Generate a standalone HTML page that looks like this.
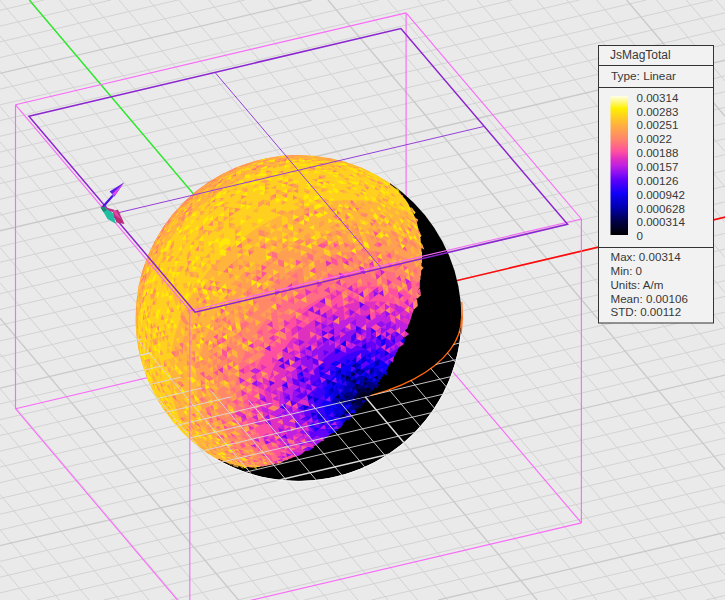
<!DOCTYPE html><html><head><meta charset="utf-8"><style>html,body{margin:0;padding:0;background:#eaeaea;overflow:hidden}svg{display:block}text{font-family:"Liberation Sans",sans-serif}</style></head><body>
<svg width="725" height="600" viewBox="0 0 725 600">
<rect width="725" height="600" fill="#eaeaea"/>
<path d="M705.9 600.0L725.0 595.5M639.0 600.0L725.0 579.8M572.1 600.0L725.0 564.0M505.2 600.0L725.0 548.3M371.4 600.0L725.0 516.8M0.0 600.4L-0.3 600.0M304.5 600.0L725.0 501.0M29.5 600.0L0.0 565.1M237.6 600.0L725.0 485.3M59.4 600.0L0.0 529.8M170.7 600.0L725.0 469.5M89.2 600.0L0.0 494.5M103.8 600.0L725.0 453.8M119.1 600.0L0.0 459.2M36.9 600.0L725.0 438.1M149.0 600.0L0.0 424.0M0.0 592.9L725.0 422.3M178.8 600.0L0.0 388.7M-0.0 577.2L725.0 406.6M208.7 600.0L0.0 353.4M0.0 561.4L725.0 390.8M268.4 600.0L0.0 282.8M0.0 530.0L725.0 359.3M298.2 600.0L0.0 247.5M0.0 514.2L725.0 343.6M328.1 600.0L0.0 212.2M0.0 498.5L725.0 327.8M358.0 600.0L0.0 177.0M0.0 482.7L725.0 312.1M387.8 600.0L0.0 141.7M0.0 467.0L725.0 296.4M417.7 600.0L0.0 106.4M0.0 451.2L725.0 280.6M447.5 600.0L0.0 71.1M0.0 435.5L725.0 264.9M477.4 600.0L0.0 35.8M0.0 419.7L725.0 249.1M507.3 600.0L-0.4 0.0M0.0 404.0L725.0 233.4M567.0 600.0L59.3 0.0M0.0 372.5L725.0 201.9M596.8 600.0L89.1 0.0M0.0 356.8L725.0 186.1M626.7 600.0L119.0 0.0M0.0 341.0L725.0 170.4M656.5 600.0L148.9 0.0M-0.0 325.3L725.0 154.6M686.4 600.0L178.7 0.0M0.0 309.5L725.0 138.9M716.3 600.0L208.6 0.0M-0.0 293.8L725.0 123.2M725.0 575.0L238.4 0.0M0.0 278.0L725.0 107.4M725.0 539.7L268.3 0.0M-0.0 262.3L725.0 91.7M725.0 504.5L298.1 0.0M0.0 246.5L725.0 75.9M725.0 433.9L357.9 0.0M0.0 215.1L725.0 44.4M725.0 398.6L387.7 0.0M0.0 199.3L725.0 28.7M725.0 363.3L417.6 0.0M0.0 183.6L725.0 12.9M725.0 328.0L447.4 0.0M0.0 167.8L713.1 0.0M725.0 292.7L477.3 0.0M0.0 152.1L646.2 0.0M725.0 257.4L507.2 0.0M-0.0 136.3L579.3 0.0M725.0 222.2L537.0 0.0M0.0 120.6L512.4 0.0M725.0 186.9L566.9 0.0M0.0 104.8L445.5 0.0M725.0 151.6L596.7 0.0M0.0 89.1L378.6 0.0M725.0 81.0L656.5 0.0M0.0 57.6L244.8 0.0M725.0 45.7L686.3 0.0M0.0 41.9L177.9 -0.0M725.0 10.4L716.2 0.0M0.0 26.1L111.0 0.0M0.0 10.4L44.1 0.0" stroke="#d3d3d3" stroke-width="1" fill="none"/><path d="M438.3 600.0L725.0 532.5M238.5 600.0L0.0 318.1M0.0 545.7L725.0 375.1M537.1 600.0L29.4 0.0M0.0 388.2L725.0 217.6M725.0 469.2L328.0 0.0M0.0 230.8L725.0 60.2M725.0 116.3L626.6 0.0M0.0 73.4L311.7 0.0" stroke="#cacaca" stroke-width="1.35" fill="none"/>
<path d="M15.5 408.7L406.1 316.8" stroke="#f86cf8" stroke-width="1.15" fill="none"/><path d="M406.1 316.8L581.4 522.9" stroke="#f86cf8" stroke-width="1.15" fill="none"/><path d="M406.1 12.9L406.1 316.8" stroke="#f86cf8" stroke-width="1.15" fill="none"/>
<path d="M29.3 0.0L298.5 318.0" stroke="#20ee20" stroke-width="1.3" fill="none"/>
<path d="M298.5 318.0L1298.5 81.6" stroke="#ff0a0a" stroke-width="1.7" fill="none"/>
<clipPath id="sph"><circle cx="298.5" cy="318.0" r="163.0"/></clipPath><g clip-path="url(#sph)">
<path d="M377.5 172.5 370.5 169.0 368.5 169.5 362.0 166.5 361.0 166.5 353.0 163.5 351.5 163.5 351.0 163.0 349.5 163.0 349.0 162.5 347.5 162.5 345.0 161.5 340.5 161.0 340.0 160.5 333.5 160.0 333.0 159.5 328.5 159.5 328.0 159.0 304.0 159.0 303.5 159.5 294.5 160.0 294.0 160.5 288.5 161.0 288.0 161.5 286.0 161.5 285.5 162.0 283.5 162.0 283.0 162.5 281.0 162.5 280.5 163.0 273.0 164.5 271.0 165.5 269.5 165.5 269.0 166.0 259.0 169.0 257.5 170.0 256.5 170.0 255.0 171.0 254.0 171.0 252.5 172.0 249.0 173.0 244.5 175.5 243.5 175.5 236.5 179.0 235.5 180.0 231.0 182.0 230.0 183.0 223.5 186.5 214.5 192.5 213.0 194.0 207.0 198.0 202.5 202.0 202.0 202.0 194.5 209.0 194.0 209.0 178.0 225.5 178.0 226.0 175.5 228.5 175.5 229.0 167.0 239.5 161.0 248.5 157.5 255.0 156.5 256.0 149.0 271.0 149.0 272.0 147.5 274.5 147.5 275.5 145.5 279.5 145.5 280.5 142.0 290.0 142.0 291.5 141.0 293.5 141.0 295.0 140.5 295.5 140.5 297.0 140.0 297.5 140.0 299.0 139.0 301.5 139.0 303.5 138.5 304.0 138.0 309.5 137.5 310.0 137.0 317.5 136.5 318.0 136.0 333.0 136.5 333.5 136.5 342.0 137.0 342.5 137.0 346.5 137.5 347.0 137.5 350.0 138.0 350.5 138.5 355.5 139.5 358.0 139.0 359.0 138.0 359.0 139.0 361.0 139.5 364.5 140.0 365.0 143.0 375.0 146.0 381.5 146.0 382.5 153.0 397.0 154.0 398.0 158.0 405.5 167.0 418.5 173.5 426.0 173.5 426.5 179.0 432.0 179.0 432.5 189.5 442.5 190.0 442.5 192.5 445.0 193.0 445.0 201.5 452.0 210.5 458.0 214.5 460.0 215.5 461.0 218.5 462.5 219.0 461.5 219.0 458.5 217.5 458.0 208.5 451.5 196.0 439.5 196.0 439.0 190.5 432.5 185.0 424.0 180.0 414.0 180.0 413.0 178.0 409.0 178.0 408.0 176.0 403.0 175.5 399.5 174.5 397.5 174.5 395.5 174.0 395.0 174.0 393.0 173.5 392.5 173.5 390.5 173.0 390.0 172.5 383.0 172.0 382.5 172.0 376.5 171.5 376.0 171.5 367.5 172.0 367.0 172.5 356.0 173.0 355.5 173.0 352.5 173.5 352.0 173.5 349.5 174.0 349.0 174.5 344.5 175.0 344.0 175.5 340.0 176.5 338.0 177.0 334.5 177.5 334.0 181.0 322.5 182.0 321.0 183.0 317.5 184.5 315.0 184.5 314.0 191.5 300.0 192.5 299.0 193.5 296.5 194.5 295.5 195.0 294.0 197.0 291.5 197.5 290.0 200.5 285.5 209.5 273.5 215.0 267.5 215.0 267.0 220.0 262.0 220.0 261.5 227.5 254.0 228.0 254.0 236.5 246.0 237.0 246.0 242.0 241.5 248.0 237.0 250.0 236.0 251.5 234.5 259.0 229.5 263.0 227.5 264.0 226.5 280.0 218.0 281.0 218.0 284.5 216.0 285.5 216.0 288.0 214.5 289.0 214.5 293.0 212.5 297.0 211.5 298.5 210.5 299.5 210.5 303.0 209.0 304.5 209.0 306.5 208.0 308.0 208.0 310.0 207.0 317.5 205.5 318.0 205.0 320.0 205.0 320.5 204.5 322.5 204.5 323.0 204.0 325.5 204.0 326.0 203.5 328.5 203.5 329.0 203.0 337.0 202.5 337.5 202.0 344.0 202.0 344.5 201.5 355.5 201.5 356.0 202.0 362.5 202.0 363.0 202.5 366.5 202.5 367.0 203.0 370.0 203.0 370.5 203.5 373.0 203.5 373.5 204.0 378.0 204.5 378.5 205.0 384.0 206.0 384.5 206.5 394.5 209.5 397.0 211.0 398.0 211.0 401.5 213.0 402.5 213.0 404.5 214.0 405.5 215.0 411.5 218.0 415.5 221.0 417.5 221.0 417.5 218.0 415.0 212.5 415.0 211.5 410.0 202.0 405.0 195.0 398.0 187.5 397.5 187.5 392.5 183.0 393.0 182.5 392.0 181.5 386.0 177.5 382.0 175.5 381.0 174.5 378.5 173.5Z" fill="#ffd020"/>
<path d="M418.0 219.5 413.5 216.5 412.0 216.0 411.0 215.0 407.5 213.5 406.5 212.5 404.5 211.5 403.5 211.5 400.0 209.5 399.0 209.5 396.5 208.0 395.5 208.0 386.0 204.5 384.5 204.5 384.0 204.0 382.5 204.0 380.0 203.0 378.0 203.0 377.5 202.5 375.5 202.5 375.0 202.0 372.5 202.0 372.0 201.5 365.0 201.0 364.5 200.5 358.0 200.5 357.5 200.0 342.5 200.0 342.0 200.5 335.5 200.5 335.0 201.0 327.0 201.5 326.5 202.0 324.0 202.0 323.5 202.5 321.0 202.5 320.5 203.0 316.0 203.5 315.5 204.0 308.0 205.5 306.0 206.5 304.5 206.5 302.5 207.5 301.0 207.5 300.5 208.0 296.5 209.0 295.0 210.0 291.0 211.0 289.5 212.0 286.0 213.0 283.5 214.5 282.5 214.5 279.0 216.5 278.0 216.5 262.0 225.0 261.0 226.0 257.0 228.0 249.5 233.0 248.0 234.5 246.0 235.5 240.0 240.0 231.5 247.5 231.0 247.5 218.5 259.5 218.5 260.0 213.5 265.0 213.5 265.5 208.0 271.5 199.0 283.5 196.0 288.0 195.5 289.5 193.5 292.0 193.0 293.5 192.0 294.5 191.0 297.0 190.0 298.0 183.0 312.0 183.0 313.0 181.5 315.5 181.5 316.5 179.5 320.5 179.5 321.5 175.5 332.5 175.0 336.0 174.0 338.0 174.0 340.0 173.0 342.5 173.0 344.5 172.5 345.0 172.5 347.0 172.0 347.5 172.0 350.0 171.5 350.5 171.0 358.0 170.5 358.5 170.5 365.0 170.0 365.5 170.0 378.0 170.5 378.5 170.5 384.5 171.0 385.0 171.0 388.5 171.5 389.0 171.5 392.0 172.0 392.5 173.0 399.5 174.0 401.5 174.5 405.0 175.0 405.5 176.5 411.0 177.5 412.5 178.5 416.0 183.5 426.0 189.0 434.5 194.5 441.0 194.5 441.5 203.5 450.5 215.5 459.5 224.0 464.0 225.0 464.0 226.5 465.0 227.5 465.0 229.5 466.0 231.0 466.0 233.0 467.0 235.0 467.0 235.5 467.5 237.5 467.5 238.0 468.0 241.0 468.0 241.5 468.5 244.5 468.5 244.5 466.5 242.0 465.5 234.5 460.5 229.5 456.0 229.0 456.0 220.5 447.5 220.5 447.0 216.0 442.0 210.5 433.5 205.5 423.5 205.5 422.5 204.5 421.0 204.5 420.0 201.5 412.0 201.5 410.5 200.5 408.0 200.5 406.0 200.0 405.5 200.0 403.5 199.5 403.0 199.5 400.5 199.0 400.0 199.0 396.5 198.5 396.0 198.5 389.5 198.0 389.0 198.5 375.0 199.0 374.5 199.0 371.0 199.5 370.5 200.0 364.5 200.5 364.0 200.5 362.0 201.5 359.5 201.5 357.5 202.0 357.0 202.0 355.5 204.0 350.0 204.0 348.5 204.5 348.0 205.0 345.5 206.0 344.0 208.0 337.5 209.5 335.0 209.5 334.0 212.0 329.5 212.0 328.5 214.0 324.5 215.0 323.5 217.0 319.0 218.0 318.0 220.0 314.0 230.0 299.5 237.0 291.5 237.0 291.0 241.5 286.5 241.5 286.0 249.5 278.0 250.0 278.0 255.0 273.0 255.5 273.0 261.0 268.0 269.0 262.0 271.0 261.0 272.5 259.5 277.0 257.0 279.5 255.0 281.0 254.5 282.0 253.5 283.5 253.0 284.5 252.0 289.0 250.0 290.0 249.0 297.0 245.5 298.0 245.5 301.5 243.5 302.5 243.5 307.5 241.0 310.0 240.5 311.5 239.5 312.5 239.5 319.0 237.0 320.5 237.0 322.5 236.0 324.0 236.0 326.0 235.0 330.0 234.5 332.5 233.5 334.5 233.5 335.0 233.0 337.0 233.0 337.5 232.5 340.0 232.5 340.5 232.0 343.5 232.0 344.0 231.5 354.0 231.0 354.5 230.5 367.0 230.5 367.5 231.0 377.0 231.5 377.5 232.0 383.0 232.5 383.5 233.0 385.5 233.0 386.0 233.5 391.5 234.5 392.0 235.0 400.5 237.5 413.5 243.5 421.0 248.5 423.0 248.5 423.0 243.5 422.5 243.0 422.5 239.5 422.0 239.0 421.5 233.0 421.0 232.5 421.0 230.5 420.5 230.0 420.5 228.5 420.0 228.0 420.0 226.5 419.5 226.0 419.5 224.5 419.0 224.0 419.0 222.5 418.5 222.0ZM371.5 169.5 363.0 165.5 362.0 165.5 360.5 164.5 357.0 163.5 355.5 162.5 354.5 162.5 345.0 159.0 341.5 158.5 341.0 158.0 336.0 157.0 335.5 156.5 328.5 155.5 328.0 155.0 325.5 155.0 325.0 154.5 322.5 154.5 322.0 154.0 319.0 154.0 318.5 153.5 314.0 153.5 313.5 153.0 307.5 153.0 307.0 152.5 302.0 152.5 302.0 153.5 301.5 154.0 290.5 154.0 290.0 154.5 284.5 154.5 284.0 155.0 280.5 155.0 280.0 155.5 274.0 156.0 273.5 156.5 271.5 156.5 271.0 157.0 269.0 157.0 268.5 157.5 266.5 157.5 266.0 158.0 260.5 159.0 258.5 160.0 257.0 160.0 256.5 160.5 246.5 163.5 245.0 164.5 244.0 164.5 242.5 165.5 239.0 166.5 224.5 173.5 223.5 174.5 217.5 177.5 215.0 179.5 213.5 180.0 206.0 185.0 198.0 191.0 188.0 200.0 187.5 200.0 177.5 210.0 177.5 210.5 170.5 218.0 170.5 218.5 168.5 220.5 162.5 228.5 157.5 236.0 155.5 240.0 154.5 241.0 153.0 244.5 152.0 245.5 147.5 254.5 147.5 255.5 146.0 258.0 146.0 259.0 144.5 261.5 144.0 264.0 143.0 265.5 143.0 266.5 140.5 273.0 140.5 274.5 139.5 276.5 139.5 278.0 139.0 278.5 139.0 280.0 138.5 280.5 138.5 282.0 137.5 284.5 137.0 289.0 136.5 289.5 135.5 289.5 135.5 290.5 135.0 291.0 134.5 297.0 134.0 297.5 134.0 302.0 133.5 302.5 133.5 308.5 133.0 309.0 133.0 326.5 133.5 327.0 134.0 338.0 134.5 338.5 134.5 341.5 135.0 342.0 135.5 347.5 136.0 348.0 136.0 350.0 136.5 350.5 136.5 352.5 137.0 353.0 137.0 355.0 137.5 355.5 138.5 360.5 139.0 361.0 141.5 360.5 141.5 358.0 141.0 357.5 141.0 356.0 140.0 353.5 140.0 351.5 139.5 351.0 139.0 345.0 138.5 344.5 138.5 340.5 138.0 340.0 138.0 331.5 137.5 331.0 137.5 329.5 138.0 329.0 138.0 320.0 138.5 319.5 138.5 315.5 139.0 315.0 139.0 312.0 139.5 311.5 140.0 306.0 140.5 305.5 140.5 303.5 141.0 303.0 142.5 295.5 143.5 293.5 143.5 292.0 144.0 291.5 147.0 281.5 149.0 277.5 149.0 276.5 158.0 258.0 159.0 257.0 162.5 250.5 173.0 235.5 179.5 228.0 179.5 227.5 183.5 223.5 183.5 223.0 196.0 210.5 196.5 210.5 204.0 203.5 204.5 203.5 209.0 199.5 215.0 195.5 216.5 194.0 225.5 188.0 227.0 187.5 233.0 183.5 237.5 181.5 238.5 180.5 245.5 177.0 246.5 177.0 251.0 174.5 252.0 174.5 253.5 173.5 254.5 173.5 261.0 170.5 262.0 170.5 271.5 167.0 273.0 167.0 275.0 166.0 276.5 166.0 277.0 165.5 278.5 165.5 279.0 165.0 280.5 165.0 283.0 164.0 285.0 164.0 285.5 163.5 287.5 163.5 288.0 163.0 290.0 163.0 290.5 162.5 293.0 162.5 293.5 162.0 296.0 162.0 296.5 161.5 305.5 161.0 306.0 160.5 326.0 160.5 326.5 161.0 331.0 161.0 331.5 161.5 338.0 162.0 338.5 162.5 340.5 162.5 341.0 163.0 343.0 163.0 343.5 163.5 351.0 165.0 351.5 165.5 360.0 168.0 368.5 172.0 371.0 172.0Z" fill="#ffb53b"/>
<path d="M422.0 246.0 416.5 243.0 415.5 242.0 402.5 236.0 401.5 236.0 393.5 233.0 392.0 233.0 391.5 232.5 390.0 232.5 387.5 231.5 385.5 231.5 385.0 231.0 379.5 230.5 379.0 230.0 369.5 229.5 369.0 229.0 352.5 229.0 352.0 229.5 346.0 229.5 345.5 230.0 342.0 230.0 341.5 230.5 338.5 230.5 338.0 231.0 335.5 231.0 335.0 231.5 330.5 232.0 330.0 232.5 326.0 233.0 322.0 234.5 320.5 234.5 318.5 235.5 317.0 235.5 316.5 236.0 309.5 238.0 308.0 239.0 305.5 239.5 300.5 242.0 299.5 242.0 296.0 244.0 295.0 244.0 288.0 247.5 287.0 248.5 282.5 250.5 281.5 251.5 280.0 252.0 279.0 253.0 277.5 253.5 275.0 255.5 270.5 258.0 269.0 259.5 267.0 260.5 259.0 266.5 256.5 269.0 253.0 271.5 248.0 276.5 247.5 276.5 240.0 284.0 240.0 284.5 232.5 292.5 232.5 293.0 225.5 301.5 218.5 312.0 210.5 326.5 210.5 327.5 206.5 335.5 206.5 336.5 205.5 338.0 204.5 342.0 203.5 343.5 203.5 344.5 202.5 346.5 202.5 348.0 201.5 350.0 201.5 351.5 200.5 353.5 200.0 357.5 199.0 360.0 198.5 365.0 198.0 365.5 198.0 368.5 197.5 369.0 197.5 372.5 197.0 373.0 197.0 379.5 196.5 380.0 196.5 391.0 197.0 391.5 197.0 398.0 197.5 398.5 197.5 402.0 198.0 402.5 198.0 405.0 198.5 405.5 199.0 410.0 199.5 410.5 200.0 414.0 200.5 414.5 203.0 423.0 206.5 430.0 206.5 431.0 207.5 432.0 209.0 435.5 214.5 444.0 219.0 449.0 219.0 449.5 227.0 457.5 227.5 457.5 232.5 462.0 240.0 467.0 243.0 468.5 247.0 468.5 247.5 469.0 261.0 468.5 261.0 466.5 260.5 466.0 258.0 465.0 249.5 459.0 239.5 449.5 239.5 449.0 235.0 444.0 231.0 438.0 226.0 428.5 226.0 427.5 225.0 426.0 225.0 425.0 224.0 423.5 224.0 422.5 222.5 419.0 222.5 417.5 221.0 413.5 221.0 411.5 220.5 411.0 220.5 409.0 220.0 408.5 220.0 406.0 219.5 405.5 219.5 402.0 219.0 401.5 219.0 384.5 219.5 384.0 220.0 376.5 220.5 376.0 220.5 373.5 221.0 373.0 221.0 371.0 221.5 370.5 223.0 363.0 223.5 362.5 226.5 352.5 227.5 351.0 228.5 347.5 230.5 344.0 230.5 343.0 238.0 329.0 245.0 318.5 250.0 312.5 250.0 312.0 252.5 309.5 252.5 309.0 255.5 306.0 255.5 305.5 272.0 289.5 272.5 289.5 275.0 287.0 275.5 287.0 281.5 282.0 283.5 281.0 285.0 279.5 291.0 275.5 298.5 271.5 299.5 270.5 314.0 263.5 315.0 263.5 316.5 262.5 317.5 262.5 319.0 261.5 321.5 261.0 323.0 260.0 324.0 260.0 327.5 258.5 329.0 258.5 331.0 257.5 332.5 257.5 333.0 257.0 338.0 256.0 338.5 255.5 340.5 255.5 341.0 255.0 343.0 255.0 343.5 254.5 345.5 254.5 346.0 254.0 352.5 253.5 353.0 253.0 358.0 253.0 358.5 252.5 374.0 252.5 374.5 253.0 382.5 253.5 383.0 254.0 385.0 254.0 385.5 254.5 387.5 254.5 388.0 255.0 390.0 255.0 390.5 255.5 394.0 256.0 394.5 256.5 403.0 259.0 414.5 264.5 421.0 269.0 423.0 269.0 423.0 265.0 423.5 264.5 423.5 251.0 423.0 250.5 423.0 247.0ZM304.0 152.5 289.5 152.5 289.0 153.0 283.0 153.0 282.5 153.5 274.5 154.0 274.0 154.5 268.5 155.0 268.0 155.5 266.0 155.5 265.5 156.0 263.5 156.0 263.0 156.5 261.0 156.5 260.5 157.0 257.0 157.5 255.0 158.5 251.5 159.0 251.0 159.5 241.0 162.5 239.5 163.5 238.5 163.5 237.0 164.5 233.5 165.5 233.5 166.5 232.5 167.5 229.5 169.0 228.5 169.0 213.5 177.0 211.0 179.0 209.5 179.5 205.0 182.5 203.5 184.0 197.5 188.0 193.0 192.0 192.5 192.0 175.0 209.0 175.0 209.5 168.0 217.5 164.0 223.5 161.0 225.5 158.0 230.0 157.5 231.5 156.5 232.5 156.0 234.0 155.0 235.0 147.5 249.5 147.5 250.5 146.0 253.0 146.0 254.0 143.0 260.5 143.0 261.5 139.5 271.0 139.0 274.5 138.0 276.5 138.0 278.0 137.0 280.5 137.0 282.5 136.5 283.0 136.5 285.0 136.0 285.5 136.0 287.5 135.5 288.0 135.5 290.5 135.0 291.0 136.0 291.5 138.5 291.5 138.5 289.0 139.0 288.5 139.0 286.5 139.5 286.0 141.0 278.5 141.5 278.0 142.0 275.0 142.5 274.5 144.5 267.5 145.5 266.0 146.0 263.5 153.5 247.5 154.5 246.5 156.0 243.0 157.0 242.0 159.0 238.0 170.0 222.5 174.5 217.5 174.5 217.0 179.0 212.5 179.0 212.0 189.5 201.5 190.0 201.5 200.0 192.5 215.5 181.5 217.0 181.0 223.0 177.0 225.5 176.0 226.5 175.0 236.5 170.0 237.5 170.0 241.0 168.0 242.0 168.0 248.5 165.0 249.5 165.0 259.0 161.5 260.5 161.5 262.5 160.5 264.0 160.5 264.5 160.0 266.0 160.0 268.5 159.0 270.5 159.0 271.0 158.5 273.0 158.5 273.5 158.0 275.5 158.0 276.0 157.5 282.0 157.0 282.5 156.5 286.0 156.5 286.5 156.0 292.0 156.0 292.5 155.5 303.5 155.5Z" fill="#ff9f51"/>
<path d="M422.0 266.5 417.5 264.0 416.5 263.0 405.0 257.5 404.0 257.5 396.0 254.5 394.5 254.5 392.0 253.5 390.0 253.5 389.5 253.0 387.5 253.0 387.0 252.5 385.0 252.5 384.5 252.0 376.5 251.5 376.0 251.0 356.5 251.0 356.0 251.5 351.0 251.5 350.5 252.0 347.5 252.0 347.0 252.5 344.0 252.5 343.5 253.0 336.5 254.0 336.0 254.5 332.5 255.0 330.5 256.0 329.0 256.0 327.0 257.0 325.5 257.0 325.0 257.5 321.0 258.5 319.5 259.5 317.0 260.0 315.5 261.0 312.0 262.0 309.5 263.5 308.5 263.5 294.0 271.0 293.0 272.0 291.5 272.5 283.0 278.0 273.0 285.5 266.5 291.5 266.0 291.5 254.0 303.5 254.0 304.0 246.5 312.5 241.5 320.0 240.0 321.5 239.5 323.0 235.0 329.5 229.0 341.0 229.0 342.0 227.0 345.5 227.0 346.5 225.0 350.5 225.0 351.5 221.5 361.0 221.5 362.5 221.0 363.0 221.0 364.5 220.5 365.0 220.5 366.5 219.5 369.0 219.5 371.0 219.0 371.5 218.5 377.5 218.0 378.0 218.0 382.0 217.5 382.5 217.5 403.5 218.0 404.0 218.0 407.5 218.5 408.0 218.5 410.5 219.0 411.0 219.5 415.5 220.0 416.0 220.0 417.5 221.0 419.5 221.0 421.0 221.5 421.5 222.5 425.5 228.0 437.5 233.5 446.0 238.0 451.0 238.0 451.5 244.5 458.0 245.0 458.0 251.5 463.5 256.0 466.5 258.5 467.5 259.5 468.5 265.5 468.0 266.0 467.5 268.5 467.5 269.0 467.0 271.0 467.0 273.5 466.0 275.5 466.0 275.5 464.0 274.0 463.5 273.0 462.5 271.5 462.0 267.0 459.0 262.0 454.5 261.5 454.5 255.0 448.0 255.0 447.5 251.0 443.0 248.0 438.5 247.5 437.0 246.5 436.0 243.0 429.0 243.0 428.0 242.0 426.5 242.0 425.5 239.5 419.0 239.5 417.5 238.5 415.0 238.5 413.0 238.0 412.5 238.0 410.0 237.5 409.5 237.5 406.5 237.0 406.0 237.0 398.5 236.5 398.0 236.5 397.0 237.0 396.5 237.0 389.0 237.5 388.5 237.5 385.0 238.0 384.5 238.0 382.0 238.5 381.5 238.5 379.0 239.5 376.5 239.5 374.5 240.0 374.0 240.0 372.5 241.0 370.5 241.0 369.0 241.5 368.5 243.0 363.0 244.0 361.5 244.0 360.5 245.0 359.0 246.0 355.5 252.0 343.5 253.0 342.5 253.5 341.0 259.0 332.5 265.5 324.5 265.5 324.0 272.5 316.5 272.5 316.0 283.5 305.5 284.0 305.5 291.5 299.0 307.5 288.5 312.0 286.5 313.0 285.5 316.0 284.0 317.0 284.0 321.5 281.5 322.5 281.5 329.0 278.5 330.0 278.5 335.0 276.5 336.5 276.5 338.5 275.5 340.0 275.5 342.0 274.5 346.0 274.0 346.5 273.5 348.5 273.5 349.0 273.0 351.0 273.0 351.5 272.5 354.5 272.5 355.0 272.0 358.5 272.0 359.0 271.5 365.0 271.5 365.5 271.0 373.0 271.0 373.5 271.5 379.5 271.5 380.0 272.0 386.0 272.5 386.5 273.0 391.0 273.5 391.5 274.0 393.0 274.0 395.0 275.0 396.5 275.0 397.0 275.5 401.0 276.5 402.5 277.5 403.5 277.5 407.0 279.5 408.0 279.5 410.0 280.5 411.0 281.5 416.0 284.0 418.5 286.0 421.0 286.0 421.0 285.0 421.5 284.5 421.5 282.0 422.0 281.5 422.0 278.0 422.5 277.5 422.5 273.0 423.0 272.5 423.0 267.5ZM235.5 165.5 235.0 165.0 231.0 167.0 230.0 167.0 215.5 174.5 214.5 175.5 210.5 177.5 201.5 183.5 193.0 190.5 192.5 190.5 184.0 198.5 183.5 198.5 173.5 209.0 173.5 209.5 171.0 212.0 171.0 212.5 164.0 221.0 161.0 225.5 161.0 226.5 162.0 227.0 164.5 227.0 166.5 223.5 173.5 215.0 173.5 214.5 176.5 211.5 176.5 211.0 194.5 193.5 195.0 193.5 203.5 186.5 215.5 178.5 221.5 175.5 222.5 174.5 235.5 168.5Z" fill="#ff8967"/>
<path d="M421.0 284.5 416.5 282.0 415.5 281.0 413.0 280.0 412.0 279.0 410.0 278.0 409.0 278.0 405.5 276.0 404.5 276.0 403.0 275.0 402.0 275.0 398.5 273.5 397.0 273.5 393.0 272.0 388.5 271.5 388.0 271.0 382.0 270.5 381.5 270.0 375.5 270.0 375.0 269.5 363.5 269.5 363.0 270.0 357.0 270.0 356.5 270.5 349.5 271.0 349.0 271.5 344.5 272.0 342.0 273.0 340.0 273.0 338.0 274.0 336.5 274.0 334.5 275.0 333.0 275.0 332.5 275.5 327.0 277.0 325.5 278.0 324.5 278.0 323.0 279.0 319.5 280.0 315.0 282.5 314.0 282.5 311.0 284.0 310.0 285.0 305.5 287.0 289.5 297.5 282.0 304.0 281.5 304.0 271.0 314.0 271.0 314.5 264.0 322.0 264.0 322.5 257.5 330.5 253.5 336.5 251.5 340.5 250.5 341.5 244.5 353.5 244.5 354.5 241.5 361.0 241.5 362.0 239.5 367.0 239.5 368.5 238.5 370.5 238.0 374.5 237.0 377.0 236.5 382.5 236.0 383.0 236.0 386.5 235.5 387.0 235.5 394.5 235.0 395.0 235.5 408.0 236.0 408.5 236.0 411.5 236.5 412.0 237.0 417.0 237.5 417.5 238.0 421.0 238.5 421.5 240.5 428.5 245.0 438.0 246.0 439.0 246.5 440.5 249.5 445.0 253.5 449.5 253.5 450.0 259.5 456.0 260.0 456.0 265.0 460.5 273.0 465.5 277.0 465.5 277.5 465.0 279.0 465.0 279.5 464.5 288.0 462.0 288.0 460.0 285.5 459.0 279.5 455.0 274.0 450.0 273.5 450.0 267.5 443.5 263.5 438.0 258.0 427.5 257.5 425.0 256.5 423.5 256.0 420.5 254.5 416.5 254.0 411.5 253.5 411.0 253.5 407.5 253.0 407.0 253.0 394.0 253.5 393.5 253.5 389.5 254.0 389.0 254.0 386.5 254.5 386.0 254.5 384.0 255.0 383.5 255.0 381.5 255.5 381.0 256.0 377.5 256.5 377.0 256.5 376.0 257.5 374.0 257.5 372.5 258.5 371.0 259.5 367.0 263.5 359.0 263.5 358.0 264.5 357.0 268.5 349.0 273.5 341.5 278.5 335.5 278.5 335.0 281.5 332.0 281.5 331.5 294.0 319.0 294.5 319.0 297.5 316.0 298.0 316.0 304.0 311.0 311.5 306.0 315.5 304.0 316.5 303.0 333.5 295.0 334.5 295.0 344.0 291.5 345.5 291.5 346.0 291.0 347.5 291.0 350.0 290.0 352.0 290.0 352.5 289.5 358.0 289.0 358.5 288.5 362.0 288.5 362.5 288.0 379.5 288.0 380.0 288.5 383.5 288.5 384.0 289.0 389.0 289.5 389.5 290.0 393.0 290.5 393.5 291.0 400.5 293.0 410.0 297.5 416.0 301.5 418.0 301.5 418.5 298.0 419.5 295.5 419.5 293.5 420.0 293.0 420.0 291.0 420.5 290.5Z" fill="#ff6e82"/>
<path d="M413.0 297.0 412.0 296.0 402.5 291.5 401.5 291.5 395.0 289.0 393.5 289.0 391.0 288.0 389.0 288.0 388.5 287.5 386.0 287.5 385.5 287.0 382.0 287.0 381.5 286.5 360.5 286.5 360.0 287.0 356.5 287.0 356.0 287.5 353.5 287.5 353.0 288.0 348.0 288.5 347.5 289.0 342.0 290.0 341.5 290.5 331.5 293.5 330.0 294.5 329.0 294.5 314.5 301.5 313.5 302.5 309.5 304.5 295.5 314.5 280.0 329.5 280.0 330.0 277.0 333.0 277.0 333.5 272.0 339.5 267.0 347.0 263.0 355.0 262.0 356.0 262.0 357.0 258.0 365.0 258.0 366.0 257.5 366.5 257.0 369.0 256.0 370.5 256.0 372.0 254.5 375.5 254.5 377.0 253.5 379.5 253.5 381.5 253.0 382.0 253.0 384.0 252.5 384.5 252.5 387.0 252.0 387.5 252.0 391.5 251.5 392.0 251.5 409.0 252.0 409.5 252.0 413.0 252.5 413.5 253.0 418.5 253.5 419.0 253.5 420.5 254.5 422.5 255.0 425.5 256.0 427.0 256.5 429.5 262.0 440.0 266.0 445.5 271.5 451.5 272.0 451.5 277.5 456.5 285.5 461.5 289.0 461.5 298.5 457.5 298.5 455.0 295.5 453.5 288.0 448.0 281.5 441.5 275.5 433.0 272.5 427.0 272.5 426.0 271.5 424.5 271.5 423.5 270.0 420.0 270.0 418.5 269.0 416.0 269.0 414.0 268.5 413.5 268.5 411.0 268.0 410.5 268.0 406.0 267.5 405.5 267.5 399.0 268.0 398.5 268.5 390.5 269.0 390.0 269.0 388.0 269.5 387.5 269.5 385.5 271.0 381.5 271.0 380.0 271.5 379.5 272.5 375.5 273.5 374.0 274.0 371.5 276.0 368.0 276.0 367.0 278.0 363.0 279.0 362.0 282.0 356.0 292.0 342.5 305.0 329.5 305.5 329.5 308.0 327.0 318.5 319.5 320.0 319.0 321.0 318.0 322.5 317.5 323.5 316.5 328.0 314.5 329.0 313.5 330.0 313.5 334.5 311.0 335.5 311.0 338.0 309.5 342.0 308.5 343.5 307.5 345.0 307.5 345.5 307.0 346.5 307.0 348.5 306.0 350.0 306.0 350.5 305.5 352.0 305.5 352.5 305.0 354.5 305.0 355.0 304.5 357.0 304.5 357.5 304.0 360.0 304.0 360.5 303.5 364.0 303.5 364.5 303.0 380.0 303.0 380.5 303.5 386.5 304.0 387.0 304.5 388.5 304.5 389.0 305.0 390.5 305.0 391.0 305.5 392.5 305.5 393.0 306.0 397.0 307.0 407.5 312.0 411.5 315.0 414.0 315.0 415.0 313.0 415.0 311.5 416.0 309.5 416.0 308.0 416.5 307.5 417.5 302.5 418.0 302.0 418.0 300.0Z" fill="#ff50a0"/>
<path d="M414.0 313.5 409.5 310.5 401.5 306.5 400.5 306.5 399.0 305.5 398.0 305.5 394.5 304.0 393.0 304.0 392.5 303.5 391.0 303.5 388.5 302.5 386.0 302.5 385.5 302.0 382.5 302.0 382.0 301.5 362.5 301.5 362.0 302.0 358.5 302.0 358.0 302.5 355.5 302.5 355.0 303.0 350.5 303.5 350.0 304.0 346.5 304.5 346.0 305.0 345.0 305.0 343.0 306.0 341.5 306.0 340.0 307.0 336.0 308.0 328.0 312.0 327.0 312.0 326.0 313.0 321.5 315.0 320.5 316.0 316.5 318.0 303.0 328.0 290.5 340.5 280.5 354.0 277.5 360.0 276.5 361.0 274.5 365.0 274.5 366.0 272.5 369.5 272.0 372.0 271.0 373.5 271.0 374.5 269.5 378.0 268.5 383.0 268.0 383.5 268.0 385.5 267.5 386.0 267.5 388.0 267.0 388.5 267.0 391.5 266.5 392.0 266.5 396.5 266.0 397.0 266.0 407.5 266.5 408.0 266.5 412.5 267.0 413.0 267.5 418.0 268.0 418.5 268.0 420.0 268.5 420.5 268.5 422.0 269.0 422.5 270.0 426.5 274.0 435.0 275.0 436.0 276.5 439.0 280.0 443.0 280.0 443.5 286.0 449.5 286.5 449.5 290.5 453.0 293.5 455.0 296.0 456.0 297.0 457.0 299.5 457.0 309.0 452.0 309.0 450.0 301.0 445.0 298.0 442.0 297.5 442.0 292.0 436.0 288.5 431.0 285.0 424.0 285.0 423.0 283.0 418.0 283.0 416.5 282.0 414.0 282.0 411.5 281.5 411.0 281.5 406.5 281.0 406.0 281.0 401.0 281.5 400.5 282.0 392.5 282.5 392.0 282.5 390.0 283.0 389.5 283.5 386.0 284.0 385.5 286.0 378.5 287.0 377.0 287.0 376.0 289.0 372.5 289.0 371.5 290.0 369.5 291.0 368.5 293.5 363.5 297.5 357.5 303.5 350.5 303.5 350.0 312.5 341.0 326.5 330.5 332.5 327.5 333.5 326.5 335.5 325.5 336.5 325.5 341.0 323.0 342.0 323.0 343.5 322.0 344.5 322.0 351.0 319.5 352.5 319.5 353.0 319.0 354.5 319.0 357.0 318.0 359.0 318.0 359.5 317.5 366.5 317.0 367.0 316.5 378.0 316.5 378.5 317.0 382.0 317.0 382.5 317.5 385.0 317.5 385.5 318.0 389.0 318.5 391.0 319.5 392.5 319.5 394.0 320.5 395.0 320.5 401.5 323.5 407.5 327.5 410.0 327.5 410.0 326.5 411.0 325.0 411.0 324.0 414.0 316.0Z" fill="#e030c0"/>
<path d="M399.5 320.0 398.5 320.0 394.5 318.0 393.0 318.0 392.5 317.5 387.5 316.5 387.0 316.0 380.5 315.5 380.0 315.0 365.0 315.0 364.5 315.5 360.5 315.5 360.0 316.0 355.0 316.5 354.5 317.0 349.0 318.0 348.5 318.5 341.5 320.5 334.5 324.0 333.5 324.0 330.5 326.0 327.0 327.5 326.0 328.5 324.5 329.0 320.0 332.0 314.0 337.0 313.5 337.0 302.0 348.0 302.0 348.5 296.0 355.5 292.0 361.5 289.5 366.5 288.5 367.5 287.5 369.5 287.5 370.5 285.5 374.0 285.5 375.0 284.5 376.5 284.5 377.5 282.0 384.0 281.5 387.5 281.0 388.0 280.5 393.5 280.0 394.0 280.0 398.5 279.5 399.0 279.5 408.0 280.0 408.5 280.0 413.0 280.5 413.5 280.5 416.0 281.0 416.5 281.5 420.0 282.0 420.5 283.5 426.0 287.0 433.0 289.0 436.0 295.5 443.5 296.0 443.5 299.0 446.5 307.0 451.5 310.0 451.5 311.0 450.5 312.5 450.0 315.0 448.0 318.0 446.5 318.0 444.0 316.5 443.5 310.5 439.5 303.0 432.0 300.5 428.5 298.0 424.0 298.0 423.0 296.5 420.5 296.5 419.5 295.5 417.5 295.5 416.0 294.5 413.5 294.5 411.5 294.0 411.0 294.0 407.0 293.5 406.5 294.0 397.0 294.5 396.5 295.0 391.5 295.5 391.0 295.5 389.5 296.5 387.5 297.0 384.5 302.5 372.5 308.0 364.0 312.0 359.5 312.0 359.0 322.0 349.0 322.5 349.0 327.0 345.0 334.5 340.0 338.0 338.5 339.0 337.5 341.0 336.5 342.0 336.5 348.0 333.5 349.0 333.5 352.5 332.0 354.0 332.0 356.0 331.0 360.0 330.5 360.5 330.0 363.0 330.0 363.5 329.5 366.5 329.5 367.0 329.0 377.5 329.0 378.0 329.5 381.0 329.5 381.5 330.0 386.0 330.5 386.5 331.0 392.0 332.5 399.0 336.0 403.0 339.0 405.0 339.0 406.5 336.5 406.5 335.5 409.5 329.0 409.5 326.0Z" fill="#c020e0"/>
<path d="M401.0 334.5 394.0 331.0 393.0 331.0 388.0 329.0 386.0 329.0 385.5 328.5 383.5 328.5 383.0 328.0 380.0 328.0 379.5 327.5 365.0 327.5 364.5 328.0 361.5 328.0 361.0 328.5 356.0 329.0 355.5 329.5 350.5 330.5 350.0 331.0 346.0 332.0 344.5 333.0 343.5 333.0 332.5 338.5 325.0 343.5 323.0 345.5 320.0 347.5 310.5 357.0 302.5 368.0 297.5 377.5 297.5 378.5 295.5 382.5 295.0 385.5 294.0 387.5 293.5 391.5 293.0 392.0 293.0 394.5 292.5 395.0 292.5 399.0 292.0 399.5 292.0 408.5 292.5 409.0 292.5 413.0 293.0 413.5 293.0 415.5 293.5 416.0 293.5 417.5 294.0 418.0 294.0 419.5 294.5 420.0 295.0 422.5 296.5 425.0 296.5 426.0 297.5 428.0 298.5 429.0 300.0 432.0 308.5 441.0 316.5 446.0 318.5 446.0 326.5 440.5 326.5 438.0 323.0 436.5 319.5 434.0 313.0 427.5 310.5 424.0 307.0 416.5 307.0 415.0 306.5 414.5 306.0 411.0 305.5 410.5 305.5 407.0 305.0 406.5 305.5 397.5 306.0 397.0 306.0 394.5 306.5 394.0 306.5 392.5 307.0 392.0 307.0 390.5 307.5 390.0 308.0 387.5 312.5 377.5 313.5 376.5 314.0 375.0 317.0 370.5 319.0 368.5 321.0 365.5 328.5 358.0 329.0 358.0 331.5 355.5 335.5 353.0 337.0 351.5 347.0 346.0 348.0 346.0 352.0 344.0 353.0 344.0 356.5 342.5 360.0 342.0 360.5 341.5 366.0 341.0 366.5 340.5 377.0 340.5 377.5 341.0 380.0 341.0 380.5 341.5 382.5 341.5 383.0 342.0 384.5 342.0 385.0 342.5 387.5 343.0 390.0 344.5 392.0 345.0 398.5 349.5 400.5 349.5 402.5 345.5 402.5 344.5 405.0 340.0 405.0 337.5Z" fill="#9010f0"/>
<path d="M393.0 343.0 392.0 343.0 389.5 341.5 388.5 341.5 386.5 340.5 382.5 340.0 382.0 339.5 379.5 339.5 379.0 339.0 364.5 339.0 364.0 339.5 358.5 340.0 358.0 340.5 354.5 341.0 354.0 341.5 350.0 342.5 348.5 343.5 347.5 343.5 346.0 344.5 345.0 344.5 335.0 350.0 333.5 351.5 329.5 354.0 327.0 356.5 326.5 356.5 319.5 363.5 312.5 373.0 308.5 380.5 308.5 381.5 307.5 383.0 307.5 384.0 306.5 385.5 306.5 386.5 305.5 388.5 305.5 390.0 304.5 392.5 304.5 395.0 304.0 395.5 304.0 399.0 303.5 399.5 303.5 408.5 304.0 409.0 304.0 412.5 304.5 413.0 304.5 415.0 305.5 417.0 305.5 418.5 310.0 427.5 317.5 435.5 321.0 438.0 325.0 440.0 327.0 440.0 334.0 434.5 334.0 432.0 330.5 430.5 327.0 428.0 323.0 424.0 319.5 419.0 316.5 411.5 316.0 405.5 315.5 405.0 316.0 398.0 316.5 397.5 316.5 395.5 317.0 395.0 317.0 393.5 317.5 393.0 319.0 387.5 322.5 380.5 329.5 371.0 337.5 363.5 346.5 357.5 350.5 355.5 351.5 355.5 354.0 354.0 355.0 354.0 357.0 353.0 358.5 353.0 360.5 352.0 362.5 352.0 363.0 351.5 365.5 351.5 366.0 351.0 376.0 351.0 376.5 351.5 379.0 351.5 379.5 352.0 381.0 352.0 381.5 352.5 384.0 353.0 390.0 356.0 393.0 358.5 396.0 358.5 400.0 350.5 400.0 347.5Z" fill="#6000f8"/>
<path d="M395.5 357.0 392.0 354.5 386.0 351.5 385.0 351.5 383.0 350.5 381.5 350.5 381.0 350.0 378.5 350.0 378.0 349.5 364.0 349.5 363.5 350.0 361.0 350.0 360.5 350.5 358.5 350.5 356.5 351.5 355.0 351.5 354.5 352.0 352.0 352.5 349.5 354.0 348.5 354.0 342.0 357.5 332.5 364.5 325.5 372.0 321.0 378.5 317.5 385.5 317.5 386.5 315.5 391.5 315.0 395.5 314.5 396.0 314.5 399.5 314.0 400.0 314.0 407.0 314.5 407.5 315.0 413.5 318.0 421.0 321.5 426.0 327.0 431.0 332.5 434.0 335.0 434.0 341.0 428.5 341.0 426.5 334.5 422.5 331.0 419.0 328.0 414.5 327.5 412.5 326.5 411.0 326.5 409.5 325.5 407.0 325.5 399.0 326.0 398.5 326.0 396.5 326.5 396.0 326.5 394.5 327.0 394.0 328.0 390.0 332.0 382.5 335.0 378.5 342.5 371.0 348.0 367.0 356.0 363.0 357.0 363.0 360.5 361.5 362.0 361.5 362.5 361.0 365.0 361.0 365.5 360.5 374.5 360.5 375.0 361.0 377.0 361.0 384.5 364.0 388.5 367.0 391.0 367.0 395.5 359.0Z" fill="#3800f8"/>
<path d="M386.5 362.5 379.0 359.5 377.0 359.5 376.5 359.0 363.5 359.0 363.0 359.5 360.5 359.5 360.0 360.0 358.5 360.0 358.0 360.5 354.0 361.5 346.0 365.5 340.5 369.5 333.5 376.5 330.5 380.5 326.5 388.0 326.5 389.0 325.0 392.5 325.0 394.0 324.5 394.5 324.5 396.5 324.0 397.0 324.0 409.0 324.5 409.5 324.5 411.0 325.0 411.5 325.0 413.0 326.0 414.5 326.0 415.5 329.5 421.0 334.5 425.5 339.0 428.0 341.5 428.0 342.5 427.5 347.5 422.5 347.5 420.5 343.0 418.5 341.0 417.0 337.5 413.0 335.5 409.5 335.5 408.5 334.5 406.5 334.5 404.0 334.0 403.5 334.5 397.5 335.0 397.0 335.0 395.5 335.5 395.0 336.0 392.5 340.5 384.5 346.0 378.5 352.0 374.0 358.0 371.0 359.0 371.0 361.0 370.0 362.5 370.0 363.0 369.5 365.0 369.5 365.5 369.0 372.5 369.0 373.0 369.5 374.5 369.5 380.5 372.0 384.0 375.0 386.0 375.0 387.0 374.0 387.5 372.5 390.5 368.0 390.5 365.5Z" fill="#1000f8"/>
<path d="M384.5 372.0 379.5 369.0 378.5 369.0 376.5 368.0 375.0 368.0 374.5 367.5 363.5 367.5 363.0 368.0 361.0 368.0 360.5 368.5 359.0 368.5 358.5 369.0 356.0 369.5 350.0 372.5 344.0 377.0 339.0 382.5 337.0 385.5 334.5 390.5 334.5 391.5 333.5 393.5 333.5 395.0 333.0 395.5 333.0 398.0 332.5 398.5 332.5 405.5 333.0 406.0 333.0 408.5 335.0 413.5 337.5 417.0 341.0 420.0 345.0 422.0 348.0 422.0 353.0 417.0 353.0 415.0 348.5 413.0 344.5 409.0 343.5 407.5 343.5 406.5 342.5 405.0 342.5 403.5 342.0 403.0 342.0 399.0 342.5 398.5 343.0 395.0 346.5 388.5 351.0 383.5 355.0 380.5 360.0 378.0 361.0 378.0 363.0 377.0 365.0 377.0 365.5 376.5 369.5 376.5 370.0 377.0 373.5 377.5 377.0 379.5 379.5 382.0 381.5 382.0 386.0 375.5 386.0 373.5Z" fill="#0800d4"/>
<path d="M379.0 378.0 375.5 376.0 372.0 375.5 371.5 375.0 363.5 375.0 363.0 375.5 361.0 375.5 360.5 376.0 358.0 376.5 353.0 379.0 347.0 384.0 344.0 388.0 341.5 393.0 341.0 396.5 340.5 397.0 340.5 405.0 341.0 405.5 341.0 407.0 343.0 411.0 346.5 414.5 350.5 416.5 353.5 416.5 358.5 411.5 358.5 409.5 356.5 409.5 353.5 408.0 350.5 405.0 349.0 401.5 349.0 398.0 349.5 397.5 350.0 395.0 352.0 391.5 356.5 387.0 359.5 385.0 360.5 385.0 363.5 383.5 366.0 383.5 366.5 383.0 367.0 383.5 369.0 383.5 371.5 384.5 373.0 385.5 375.0 388.0 377.5 388.0 381.0 383.0 381.0 380.0Z" fill="#0000b0"/>
<path d="M375.0 384.0 371.0 382.0 369.0 382.0 368.5 381.5 364.5 381.5 364.0 382.0 361.5 382.0 361.0 382.5 360.0 382.5 358.5 383.5 357.5 383.5 354.5 385.5 350.5 389.5 348.5 393.0 348.5 394.0 347.5 396.0 347.5 403.5 349.0 407.0 351.5 409.5 354.5 411.0 359.0 411.0 363.0 406.5 363.0 404.5 360.0 404.5 359.5 404.0 358.5 404.0 357.0 403.0 355.0 400.0 355.0 397.5 356.5 394.5 360.5 390.5 364.0 389.0 366.5 389.0 368.5 390.0 370.5 392.0 371.0 394.0 373.0 394.0 377.0 388.5 377.0 386.5Z" fill="#00007c"/>
<path d="M370.5 388.5 368.5 387.5 362.0 387.5 358.5 389.0 355.0 392.5 353.5 395.5 353.5 402.0 355.0 404.5 358.0 406.0 363.0 406.0 366.0 403.0 366.0 402.5 372.5 394.5 372.5 391.0ZM364.0 393.5 366.5 395.5 366.5 396.5 364.0 399.5 361.5 400.0 360.0 398.5 360.0 397.0 361.5 395.0Z" fill="#000048"/>
<path d="M362.0 392.0 359.5 393.5 358.5 395.0 358.5 396.0 358.0 396.5 358.0 399.0 358.5 399.5 358.5 400.5 359.5 401.5 365.0 401.5 366.0 401.0 368.0 398.5 368.0 393.5 366.0 392.0Z" fill="#000024"/>
<path d="M362.0 395.5 361.5 396.0 361.5 398.0 362.0 398.5 364.5 398.5 365.0 398.0 365.0 395.5ZM391.0 181.0 390.0 182.5 390.0 184.5 396.0 189.0 401.0 194.0 401.0 194.5 405.5 199.5 408.5 204.0 409.5 206.5 410.5 207.5 415.5 218.5 415.5 219.5 417.5 224.5 417.5 226.0 418.0 226.5 418.0 228.0 418.5 228.5 418.5 230.0 419.5 232.5 419.5 234.5 420.0 235.0 420.0 237.5 420.5 238.0 421.0 245.0 421.5 245.5 421.5 252.5 422.0 253.0 422.0 262.5 421.5 263.0 421.0 275.5 420.5 276.0 420.5 279.5 420.0 280.0 419.0 288.5 418.5 289.0 418.5 291.0 418.0 291.5 418.0 293.5 417.0 296.0 417.0 298.0 416.5 298.5 415.5 304.0 414.5 306.0 414.5 307.5 413.5 309.5 413.5 311.0 413.0 311.5 409.5 323.0 408.5 324.5 408.0 327.0 407.0 328.5 407.0 329.5 406.0 331.0 405.0 334.5 403.5 337.0 403.5 338.0 401.0 342.5 401.0 343.5 394.5 356.5 393.5 357.5 392.0 361.0 391.0 362.0 390.0 364.5 389.0 365.5 385.5 372.0 375.0 387.5 364.5 400.5 364.5 401.0 358.0 408.0 358.0 408.5 340.5 426.0 340.0 426.0 333.0 432.5 332.5 432.5 324.0 439.5 322.0 440.5 320.5 442.0 314.5 446.0 313.0 446.5 308.0 450.0 304.5 451.5 303.5 452.5 294.5 457.0 293.5 457.0 291.0 458.5 290.0 458.5 286.0 460.5 285.0 460.5 277.0 463.5 275.5 463.5 273.5 464.5 271.5 464.5 271.0 465.0 267.0 465.5 266.5 466.0 264.0 466.0 263.5 466.5 260.5 466.5 260.0 467.0 253.5 467.0 253.0 467.5 249.5 467.5 249.0 467.0 243.5 467.0 243.0 466.5 240.0 466.5 239.5 466.0 235.0 465.5 233.0 464.5 231.5 464.5 231.0 464.0 228.5 463.5 219.5 459.0 217.5 459.0 216.5 461.5 230.0 468.5 231.0 468.5 233.5 470.0 234.5 470.0 241.0 473.0 242.0 473.0 251.5 476.5 255.0 477.0 255.5 477.5 260.5 478.5 261.0 479.0 263.0 479.0 263.5 479.5 265.5 479.5 266.0 480.0 268.0 480.0 268.5 480.5 271.0 480.5 271.5 481.0 274.0 481.0 274.5 481.5 277.5 481.5 278.0 482.0 289.0 482.5 289.5 483.0 307.0 483.0 307.5 482.5 313.5 482.5 314.0 482.0 322.0 481.5 322.5 481.0 328.0 480.5 328.5 480.0 330.5 480.0 331.0 479.5 333.0 479.5 333.5 479.0 335.5 479.0 336.0 478.5 339.5 478.0 341.5 477.0 345.0 476.5 345.5 476.0 355.5 473.0 357.0 472.0 358.0 472.0 359.5 471.0 363.0 470.0 365.5 468.5 366.5 468.5 381.0 461.0 382.0 460.0 386.0 458.0 395.0 452.0 403.5 445.0 404.0 445.0 406.5 442.5 407.0 442.5 417.5 432.5 417.5 432.0 423.0 426.5 423.0 426.0 429.5 418.5 438.5 405.5 442.5 398.0 443.5 397.0 449.0 386.0 449.0 385.0 450.5 382.5 450.5 381.5 453.5 375.0 453.5 374.0 457.0 364.5 457.5 361.0 458.0 360.5 459.0 355.5 459.5 355.0 460.5 348.0 461.0 347.5 461.0 345.0 461.5 344.5 461.5 342.0 462.0 341.5 462.0 338.5 462.5 338.0 462.5 333.5 463.0 333.0 463.0 327.0 463.5 326.5 463.5 309.0 463.0 308.5 462.5 297.5 462.0 297.0 462.0 294.0 461.5 293.5 461.5 291.0 461.0 290.5 461.0 288.0 460.5 287.5 459.5 280.5 459.0 280.0 459.0 278.5 457.5 274.5 457.0 271.0 456.5 270.5 453.5 260.5 452.5 259.0 452.5 258.0 451.5 256.5 450.5 253.0 449.0 250.5 449.0 249.5 441.5 235.0 440.5 234.0 438.5 230.0 432.5 221.0 425.5 212.5 425.5 212.0 423.0 209.5 423.0 209.0 413.0 198.5 412.5 198.5 404.0 190.5Z" fill="#000000"/>
<path d="M403 196l5.1 3.3-0.3 1.2zM409 327l0.2 7.1-4.4-3.3zM249 469l-0.1-1.6 4.8 2zM275 467l-6-1.3 4.5-1zM270 468l-5.4-1.6 4.4-0.7z" fill="#000000"/>
<path d="M356 388l4.5 1.5-3.3 3.9zM366 389l4.3-1.6-2.4 5.2zM368 393l4.5-2.2-2.5 5.2zM370 396l-5.3 0.6 3.2-4zM356 401l-2.3-3.8 5.6-0.3zM356 413l-2.1-4.1 5.8-0.3zM352 405l-2-3.8 5.7-0.2zM352 417l-2.1-4 5.9-0.3zM350 413l-6.1 0.2 4.1-4.1z" fill="#000024"/>
<path d="M356 374l-5.1 3.1 0.2-5.1zM351 377l-5.1 3.6 0.2-5zM356 379l-0.8 4.3-4.5-1.3zM365 376l3.7 3.3-4.5 1.9zM364 381l4.1 2.9-4.4 1.7zM378 375l-0.8 5.1-3.9-2.8zM339 394l1.2 5-5.2-1.3zM340 399l5.2 1.2-4 4zM344 395l5.1 1.2-3.8 4zM355 383l4.5 1.6-3.3 3.8zM367 400l-2.3-3.4 5.4-0.5zM361 401l-1.8-4.1 5.5-0.4zM360 409l-2.3-4.3 5.7-0.4zM346 417l-6.3 0.2 4.3-4z" fill="#000048"/>
<path d="M356 363l0.1 5.3-4.8-1.7zM346 376l-5.1 3 0.1-5.2zM361 370l-5.1 3.5 0.3-5.2zM365 371l-4.6 4 0.4-5.1zM351 377l-0.4 5-4.8-1.4zM370 369l3.9 3.3-4.7 2.1zM340 399l1.2 5.2-5.2-1.1zM348 391l1.1 5.2-4.8-1.2zM349 396l1 5.2-4.8-1zM345 400l5 1.2-3.9 4zM375 386l4.6-2.5-2.4 5.5z" fill="#00007c"/>
<path d="M341 368l-0 5.8-5.3-1.8zM361 365l-4.9 3.3 0.2-5.5zM361 370l-0.6 5-4.5-1.5zM364 381l-0.4 4.7-4.1-1.1zM374 367l-0.1 5.3-4.1-3zM380 359l-0.7 5.6-4.3-3.1zM375 361l4.3 3.6-4.8 2.4zM379 370l3.7 2.9-4.7 2.3zM383 373l-1.2 5-3.9-2.8zM324 420l0.4 4.8-5.7-1zM326 379l5.6 2.2-4.3 3.9zM333 387l0.9 5.3-5.5-1.6zM335 398l1.1 5-5.4-1.3zM332 381l4.9 1.9-4.1 3.9zM335 398l5.2 1-4.2 4zM353 392l4.2 1.3-3.5 3.9zM364 386l4.1-2.1-2.3 5.1zM363 404l-1.7-3.4 5.5-0.5zM356 401l-6 0.2 3.7-4zM352 405l-5.9 0.2 3.9-4zM348 421l-2.3-3.8 6.1-0.2zM340 417l-6.4 0.1 4.4-3.9z" fill="#0000b0"/>
<path d="M366 343l0.3 6.3-4.8-2.1zM346 365l-5 3.4-0-5.7zM356 357l0.4 5.8-4.9-1.9zM341 374l-5.3 3.3-0-5.3zM366 355l-0.1 5.8-4.6-1.8zM366 361l-4.9 3.6 0.2-5.6zM351 372l-5 3.5 0.1-5.3zM351 372l-0.1 5.1-4.9-1.6zM346 376l-0.1 4.6-5-1.6zM369 374l-0.3 5.3-4-2.9zM385 350l4.6 3.4-4.9 2.8zM387 371l-0.4 4.7-3.9-2.8zM303 405l6.5 1.6-5.1 3.8zM307 395l6.3 1.9-5 3.9zM311 412l5.7 1.6-4.9 3.8zM313 397l6.3 1.7-4.8 4zM317 414l5.5 0.9-4.8 3.9zM323 415l0.5 5-5.8-1.2zM326 406l5.7 1-4.5 4zM328 391l5.9 1.3-4.3 4zM331 402l5.1 1-4.4 4zM341 404l5.1 1.2-4 4zM352 387l0.7 5.3-4.7-1.2zM356 388l1.2 5.3-4.4-1.1zM335 421l-5.9-0 4.5-3.9z" fill="#0800d4"/>
<path d="M346 340l0 6.8-5.6-2.4zM341 351l-5.8 3.6-0.3-6.3zM325 368l-5.8 3.5-0.4-5.7zM341 363l-5.4 3.5-0.2-5.8zM335 361l0.6 5.5-5.6-2.1zM351 361l-4.8 3.7 0-5.8zM341 368l-5.3 4-0.1-5.6zM336 372l-5.6 3.5-0.2-5.4zM365 371l-0.3 5.4-4.3-1.4zM360 380l-0.5 4.6-4.3-1.2zM371 353l-0.4 5.4-4.5-3.2zM369 374l4.3 3.3-4.6 2zM381 334l-0.2 6.7-4.8-3.3zM376 350l4.3 3-4.9 2.7zM374 372l3.9 3.2-4.7 2.1zM373 377l4.2 3.1-4.6 2zM386 338l-0.5 5.9-4.7-3.3zM381 341l4.5 2.9-4.9 3zM405 338l-0.9 6.1-4.3-3.2zM302 371l1.7 5.8-6.2-2.4zM304 377l0.9 5.9-6.2-2.3zM313 423l0.9 4.4-6-1.2zM314 427l5.7 1.5-4.8 3.6zM325 400l1.2 5.7-5.7-1.5zM319 371l5.9 2.6-4.4 3.8zM327 385l1.5 5.7-5.7-1.7zM336 403l1 5.2-5.3-1.1zM337 383l5.1 1.4-4 3.9zM356 413l-6.1 0 4-4.2zM348 409l-1.9-3.8 5.8-0.1zM348 409l-5.9 0.2 4-4zM334 433l-1.8-3.7 6.3 0.1zM334 433l-6.6 0.1 4.8-3.8z" fill="#1000f8"/>
<path d="M334 335l0.6 6.9-6-2.6zM361 328l-4.8 4.3-0.3-6.6zM356 332l0.4 6.8-5.3-2.4zM356 339l-4.7 3.8-0.2-6.4zM324 362l0.6 6-5.8-2.2zM360 375l-4.5 3.6 0.3-5zM370 314l0.8 7-5.1-3.2zM371 328l5 2.9-4.8 3.2zM371 358l4 3.5-4.8 2.4zM381 347l-0.7 6-4.5-3.2zM383 368l-0.3 4.9-4-2.9zM386 344l4.1 3.2-4.9 3zM395 338l-0 6.1-4.5-3.3zM285 404l1.3 6-6.6-2.4zM287 382l1.2 6.2-6.5-2.6zM303 405l1.5 5.4-6.3-1.9zM306 416l5.8 1.4-5 3.7zM310 407l5.6 1.2-4.9 3.9zM312 417l5.7 1.8-4.9 3.8zM316 381l1 6.1-6-2zM312 391l6.2 2-4.8 4zM319 424l5.4 0.8-4.7 3.7zM320 377l1.6 6.2-5.8-2zM341 379l1.1 5.4-5.1-1.6zM338 388l5.2 1.8-4 4zM346 381l1 4.9-4.9-1.4zM339 429l-2.1-3.7 6.2 0zM343 425l-6.1 0.3 4.5-4zM335 421l-1.4-3.9 6.1 0.1z" fill="#3800f8"/>
<path d="M365 304l-5 4.3-0.6-6.7zM328 333l-5.5 3.7-0.6-6.8zM334 328l0.2 7.3-6.1-2.7zM329 339l-6 4.4-0.5-6.7zM311 345l0.7 6.2-6.2-2.6zM301 359l-5.8 3.1-0.8-6.1zM312 357l-5.2 4.1-0.6-6.2zM329 352l-5.1 4.1-0.4-6.3zM318 360l-5.2 3.5-0.5-6zM361 328l0.4 6.8-5.2-2.5zM318 360l0.8 5.8-5.9-2.3zM356 368l-4.9 4 0.2-5.4zM366 361l-0.5 5.2-4.5-1.6zM366 366l-5.2 3.9 0.3-5.3zM366 361l4.2 2.9-4.7 2.3zM370 369l-0.7 5.4-4.1-3zM371 334l5 3.4-4.9 3zM380 353l-0.2 5.9-4.4-3.2zM385 356l-0.9 6-4.3-3.1zM386 331l4.6 3.3-4.9 3.3zM386 338l4.4 2.8-4.9 3.1zM390 353l-1 6.3-4.3-3.1zM391 334l4.3 3.6-4.9 3.2zM396 331l4.1 3.2-4.8 3.3zM269 380l6.2 2.8-5.5 3.5zM286 434l1.4 5-6.4-1.7zM283 357l0.9 6-6.2-2.7zM284 363l0.9 6.3-6.3-2.7zM289 394l1.5 6.5-6.5-2.4zM289 359l1.1 6.7-6.2-2.7zM290 400l6.9 2.7-5.3 3.7zM295 423l6.6 1.7-5.2 3.4zM292 378l6.6 2.6-5.2 3.8zM299 381l0.8 5.8-6.3-2.4zM300 387l1 5.9-6.4-2.3zM301 393l1.1 5.9-6.4-2.2zM306 416l0.7 5.2-6.3-1.6zM301 365l1.5 5.7-6.2-2.5zM297 374l6.7 2.8-5.1 3.8zM301 393l6.2 2-5.1 3.9zM309 431l5.8 1-4.9 3.4zM307 367l1.6 6.1-6.1-2.3zM304 377l5.8 2.1-4.9 3.8zM322 383l0.8 6-5.8-1.9zM324 395l1.1 5.3-5.8-1.6zM333 412l0.6 5.1-5.4-1zM352 417l-6.3 0.2 4.2-4.1zM337 425l-1.8-3.8 6.2 0.1zM332 429l-6.1-0 4.7-3.8zM331 425l-6.6-0.2 4.6-3.8zM316 436l-1.2-4 6.3 0.6zM311 440l-1.1-4.6 6.3 0.8zM316 436l-6.1-0.6 4.9-3.4zM309 451l-1.7-4.2 6.4 0.8z" fill="#6000f8"/>
<path d="M325 298l0.6 6.6-6.5-3zM313 306l1.1 6.9-6.5-2.9zM320 309l0.6 6.8-6.5-2.9zM270 345l0.7 6.3-6-2.8zM326 312l1 6.7-6.4-2.9zM321 323l-5.5 4-0.7-7zM363 291l1 6.8-5.4-3zM339 317l-5.8 4.6-0.6-7zM328 326l-6.1 3.8-0.6-7zM305 342l-5.8 3.9-0.8-6.7zM287 347l1.2 6.3-6.2-2.7zM355 312l-5.1 4.2-0.6-6.9zM333 322l0.7 6.5-6.2-2.8zM323 343l-5.6 4.3-0.6-6.6zM305 349l1.1 5.9-6.2-2.6zM356 319l-0.1 6.7-5.5-2.7zM345 327l0.5 6.8-5.8-2.6zM329 339l0.1 6.9-6.1-2.6zM317 347l0.9 6.7-6.1-2.5zM318 354l-5.7 3.5-0.6-6.3zM306 355l0.8 6.1-6.1-2.5zM307 361l-5.7 3.6-0.7-6zM307 361l0.4 6-6-2.4zM362 341l-0.4 6.3-5-2.2zM361 359l-4.6 3.8 0.1-5.7zM366 337l5.2 3.4-4.8 2.9zM371 347l-0.1 5.6-4.6-3.2zM376 337l-0.1 6.7-4.7-3.3zM375 356l-0 5.5-4.4-3.1zM373 290l5.6 3.4-4.6 3.7zM381 321l-0.1 6.6-5-3.3zM376 344l4.6 3-4.9 2.9zM383 290l1 6.5-5.4-3.1zM381 321l4.8 3.2-4.9 3.4zM385 310l5.4 3.8-4.8 3.6zM391 321l-0.3 6.5-4.9-3.4zM386 324l4.7 3.5-4.9 3.4zM389 359l-0.8 6-4.1-3zM396 324l-0.5 6.9-4.8-3.4zM390 347l4.5 3.4-4.9 3zM395 344l4.3 3.3-4.9 3.1zM257 380l0.8 6.8-6.3-3.1zM264 440l6.9 2.3-4.9 2.1zM265 396l1.5 6.4-6.6-2.9zM269 414l1.3 5.9-6.6-2.6zM270 420l1.6 5.4-6.6-2.5zM281 414l1.2 5.1-6.6-2.3zM278 428l6.8 1.6-5.2 3zM289 443l0.9 4.2-6.3-1.4zM286 410l1.6 5.7-6.6-2.2zM282 386l6.2 2.2-5.4 3.7zM283 392l6.3 2.4-5.4 3.7zM284 398l6.5 2.5-5.4 3.7zM292 406l0.9 6.2-6.5-2.2zM296 368l6.5 2.7-5 3.7zM307 421l5.8 1.6-5 3.6zM314 403l1.6 5.2-6.1-1.7zM318 419l0.7 4.8-5.9-1.2zM330 396l0.7 5.7-5.6-1.4zM336 377l0.9 5.9-5.3-1.7zM339 429l-6.8 0.3 4.7-4zM312 444l-5.9-1.2 5-3.2zM309 451l-6.8-1.3 5.1-2.9zM301 446l-1.1-4.3 6.2 1.1zM287 457l-1-3.7 6 1.4z" fill="#9010f0"/>
<path d="M345 275l-4.9 4-1-6.6zM352 285l0.9 6.8-5.8-3zM303 328l-5.4 4.4-0.8-6.9zM333 315l0.2 6.6-6.2-2.8zM327 319l0.6 6.7-6.3-2.8zM322 330l-5.8 4-0.6-6.9zM298 339l1.2 6.9-6.3-2.8zM328 326l0.1 6.6-6.2-2.7zM294 350l0.4 6-6.2-2.7zM365 304l0.3 7.1-5.3-2.8zM360 315l-4.5 4-0.5-6.8zM350 316l0.4 7-5.7-2.8zM294 356l1.2 6.1-6.1-2.6zM335 342l-5.9 3.9-0.4-6.6zM340 338l0.4 6.4-5.8-2.5zM319 366l-5.7 3.3-0.5-5.8zM366 331l0.4 6.1-4.9-2.4zM357 345l-5.6 4-0.1-6.3zM351 343l0.4 6-5.4-2.3zM346 347l0.2 6-5.5-2.2zM341 363l-0 5.4-5.4-2zM330 370l0.4 5.5-5.5-1.9zM361 353l0.3 6-4.8-1.9zM364 268l1.6 6.4-5.4-2.5zM365 304l4.9 3.6-4.7 3.5zM378 287l0.6 6.4-5.4-3zM375 304l5 3.2-4.8 3.6zM385 310l0.6 7.3-5.1-3.3zM380 269l5.3 3.3-4.3 3.7zM385 303l4.9 3.8-4.7 3.7zM395 310l0.4 7.1-5-3.4zM395 344l-0.5 6.4-4.4-3.2zM394 356l-0.9 6.4-4.1-3zM395 303l4.7 3.4-4.6 3.7zM400 306l0.1 7.5-5-3.4zM400 341l-0.7 6.3-4.4-3.2zM398 292l5.5 3.6-4.4 3.7zM400 306l4.6 3.9-4.6 3.7zM400 314l4.9 2.9-4.6 3.6zM408 299l1 7.2-4.9-3.4zM409 313l0.5 7.3-4.6-3.4zM405 278l5.6 3.3-3.9 3.6zM413 302l0.7 7.6-4.7-3.5zM245 414l1.9 5.9-6.3-3.2zM255 444l1.6 3.9-6.2-2.4zM239 377l6.3 3.5-5.3 3.1zM258 438l1.6 4.2-6.4-2.4zM257 415l1.4 5.2-6.5-2.9zM258 420l1.9 5.6-6.5-2.8zM255 368l1 6-6.2-3.1zM263 436l6.4 1.9-5 2.3zM255 368l6.5 2.6-5.4 3.4zM257 380l6.3 3.5-5.4 3.4zM259 393l6.3 3.2-5.4 3.3zM261 406l6.7 2.4-5.4 3.2zM268 408l1 6.3-6.6-2.7zM269 438l6.9 1.9-5 2.4zM270 386l0.8 6.7-6.5-2.9zM274 411l1.6 5.8-6.6-2.5zM280 433l1 4.3-6.5-2zM281 437l1.3 4.7-6.4-1.8zM276 389l1.4 6.5-6.6-2.7zM277 395l1.5 6.6-6.6-2.7zM280 408l1 5.5-6.6-2.4zM274 411l7 2.5-5.4 3.3zM284 425l0.8 4.6-6.6-2zM287 439l1.7 4.2-6.4-1.6zM286 434l6.5 2.1-5.1 2.9zM298 409l1.3 5.1-6.4-2zM302 425l0.8 4.7-6.3-1.5zM293 384l6.8 2.8-5.2 3.8zM299 414l6.6 1.9-5.1 3.7zM302 425l5.8 1.2-5.1 3.5zM300 387l6 2-5.1 3.9zM307 395l1.4 5.8-6.3-2zM312 417l0.8 5.6-6.1-1.4zM310 379l1 6.1-6.1-2.2zM306 389l6.2 2.1-5 3.9zM311 385l6 2.1-4.8 3.9zM320 377l6.1 2.3-4.5 3.9zM337 425l-6.4 0.1 4.6-3.9zM326 429l-6.3-0.5 4.7-3.7zM312 444l-0.8-4.4 6.4 0.7zM311 440l-6.1-1.3 5-3.2zM298 456l-0.9-3.6 6.3 1.1zM298 456l-6-1.2 5.1-2.4zM292 455l-1-4 6.1 1.3zM282 459l-0.9-3.7 5.9 1.6zM283 462l-5.8-1.6 4.8-1.6z" fill="#c020e0"/>
<path d="M281 292l-5.8 3.9-0.7-6.9zM332 263l-5.4 3.5-1-6.3zM292 283l0.9 7.1-6.5-2.7zM348 260l0.9 5.7-5.9-3zM323 284l-5.5 3.6-0.9-6.9zM312 292l-6 3.8-0.8-7zM272 321l1 6.8-6.2-2.9zM340 279l1.1 6.7-6.2-3zM329 287l1.4 6.5-6.4-3zM290 323l-5.3 3.7-0.8-7zM342 293l-5.4 3.5-0.8-6.9zM337 296l-5.8 4.5-0.8-7zM326 305l-6.1 3.7-0.8-7.1zM319 302l0.9 6.7-6.5-2.9zM308 310l0.4 7.1-6.5-2.9zM303 321l-6.2 4.5-0.8-7zM285 327l0.6 6.6-6.3-2.9zM274 335l0.9 6.3-6.1-2.9zM297 325l0.6 7.4-6.5-2.9zM298 332l-6 4.4-0.8-6.9zM358 288l0.6 6.8-5.6-3zM354 299l-5.3 3.4-0.8-6.9zM337 303l1.1 7.5-6.2-2.9zM332 308l0.6 6.6-6.3-2.9zM359 302l-4.6 3.4-0.7-6.8zM311 345l-5.5 3.6-0.7-6.6zM334 335l-5.4 4.3-0.5-6.7zM317 341l0.4 6.3-6.2-2.6zM346 334l-5.9 3.9-0.4-6.7zM340 344l-5 4.4-0.3-6.5zM318 354l0.3 5.9-6-2.4zM361 335l-4.6 3.8-0.2-6.5zM351 343l-5 3.8-0.2-6.4zM346 347l-5.3 3.7-0.2-6.3zM366 337l-4.5 4.1-0.1-6.3zM359 266l5.5 2-4.2 3.8zM366 318l4.8 3-4.8 3.3zM373 290l1 7.1-5.4-3zM369 294l5 3.1-4.6 3.7zM373 261l1.2 5.8-5.5-2.5zM381 328l-0.1 6.2-4.9-3.3zM375 273l6 3.1-4.4 3.8zM386 331l-0.3 6.5-4.8-3.3zM386 344l-0.8 6.2-4.5-3.2zM391 328l-0.4 6.3-4.8-3.3zM391 334l-0.6 6.8-4.7-3.3zM390 347l-0.4 6.4-4.4-3.2zM387 279l5 3.1-4.4 3.8zM391 328l4.5 2.9-4.9 3.4zM400 275l1.5 6.6-5.3-3.2zM400 341l4.1 3.1-4.8 3.2zM405 331l4.2 3.1-4.7 3.4zM411 281l0.7 7.3-5-3.4zM407 285l4.7 3.3-4 3.7zM223 367l-0.1 6.3-5.2-3.5zM239 411l1.5 5.7-6.2-3.3zM239 411l6.5 3.2-4.9 2.5zM241 417l5.9 2.9-4.9 2.3zM244 368l0.5 6-5.9-3.3zM241 390l6.1 3.2-5.2 3zM248 425l6.8 3.1-4.9 2.3zM265 454l1.2 2.7-6.1-1.9zM248 399l6.6 3.6-5.3 3zM256 409l1.1 5.5-6.5-3zM253 343l0.6 5.7-5.7-2.9zM256 374l0.9 6.4-6.2-3.1zM260 399l1.1 6.6-6.5-3zM261 406l1.3 5.6-6.6-2.9zM258 420l7 2.9-5.2 2.7zM268 433l1.4 4.9-6.5-2.3zM263 383l1.3 6.9-6.5-3zM262 412l7 2.3-5.3 3zM264 417l6.3 2.9-5.3 2.9zM274 435l1.9 4.9-6.5-2zM276 440l1.3 4.1-6.4-1.9zM261 364l5.9 3.2-5.4 3.4zM262 377l6.7 3-5.5 3.5zM269 380l0.7 6.4-6.5-2.9zM264 390l6.8 2.7-5.5 3.4zM277 444l6.7 1.8-4.9 2.3zM284 446l1 3.6-6.3-1.5zM272 357l5.7 3.3-5.3 3.5zM281 414l6.6 1.7-5.3 3.4zM298 433l0.8 4.5-6.3-1.4zM294 440l5.9 1.7-5 2.8zM291 372l1.3 6.2-6.4-2.6zM287 382l6.4 2.4-5.3 3.8zM292 406l6.1 2.5-5.3 3.7zM296 428l6.8 1.7-5.1 3.3zM298 433l5.9 1.3-5.1 3.2zM299 438l5.9 0.7-5 3zM302 399l1.3 5.7-6.4-2zM307 421l0.8 5.2-6.2-1.4zM308 426l0.9 5-6.1-1.3zM304 434l5.9 1.4-5 3.2zM302 399l6.4 1.8-5.1 3.9zM308 401l1.5 5.6-6.2-1.8zM301 365l6.4 2-4.9 3.7zM313 369l1.6 6.3-6-2.2zM324 441l-6.5-0.7 5-3.5zM314 448l-6.7-1.2 5.1-3.1zM307 447l-0.9-4.2 6.3 0.9zM307 447l-5.9-1.2 5.1-3zM281 455l-0.9-3.3 5.8 1.6zM282 459l-5.7-1.9 4.8-1.8zM278 464l-5.4-2.2 4.7-1.4zM187 199l3.8-3.3-3.4 3.3z" fill="#e030c0"/>
<path d="M267 267l-5.4 4.3-0.4-6.2zM267 273l-5 4.6-0.4-6.3zM262 278l-5.3 3.8-0.4-6.4zM225 310l-3.8 4-0.6-6.1zM328 245l-4.6 3.3-1.1-5.6zM322 243l1.4 5.3-6.2-2.5zM302 262l-5.6 3.9-0.7-6.3zM339 245l-4.5 3-1.2-5.5zM337 260l-5.2 3-1.1-6.2zM315 267l0.7 6.9-6.5-2.8zM348 260l-5.1 2.7-1.2-6.1zM337 260l1 6-6.2-2.9zM282 306l-5.3 3.9-0.8-7zM352 257l1.4 5.6-5.8-3zM334 276l-5.4 3.7-1-6.7zM306 296l-5.8 4-0.8-7.1zM299 293l1.2 7-6.6-2.8zM294 297l0.5 7.2-6.5-2.8zM317 288l1.3 6.6-6.5-2.9zM262 329l0.7 6.5-5.9-2.9zM350 272l1.1 6.5-5.9-3.1zM301 307l0.8 7.2-6.6-2.9zM279 331l-5.1 3.6-0.9-6.8zM273 328l0.9 6.6-6.2-2.9zM346 282l1.1 6.7-6-3zM336 290l0.6 6.5-6.3-3zM264 342l0.8 6.4-5.9-2.9zM357 282l0.7 6.1-5.7-3.1zM338 310l-5.4 4.6-0.7-7zM321 316l0.3 6.9-6.4-2.9zM349 309l-4.9 4.4-0.6-6.9zM299 346l-5.4 3.6-0.8-6.5zM294 350l-5.8 3.3-0.9-6.4zM350 316l-5.3 4.3-0.6-6.9zM322 337l-5.2 3.7-0.6-6.8zM299 346l0.9 6.3-6.3-2.7zM360 308l0.5 7-5.4-2.8zM328 333l0.6 6.3-6.2-2.7zM317 347l-5.3 4.2-0.6-6.5zM300 352l0.6 6.6-6.2-2.6zM324 362l-5.2 3.8-0.4-5.9zM361 335l0.5 6.1-5.1-2.3zM272 157l0.7 0.1 5.3-0.7zM229 171l1.2-0.7 4-1.5zM212 182l0.8-1.3 3.3-1.5zM367 281l5.2 2.6-4.5 3.8zM375 311l0.6 6.6-5.2-3.2zM370 314l5.6 3.6-4.8 3.4zM376 324l0 6.9-5-3.3zM369 264l5.2 2.8-4.2 3.8zM379 300l1 7.2-5.3-3.2zM380 307l0.4 7-5.2-3.3zM376 324l4.9 3.6-4.9 3.3zM376 331l4.9 3.2-4.9 3.2zM380 269l1 7.1-5.5-2.8zM385 303l0.2 7.4-5.2-3.3zM377 257l5.4 2.4-4 3.6zM373 231l5.8 2.3-3.4 3.1zM377 242l5.7 2.1-3.7 3.4zM390 307l5.1 3.1-4.7 3.6zM390 314l5.4 3.1-4.8 3.6zM395 317l0.5 7.1-4.9-3.4zM390 252l1.7 6.6-5.5-2.7zM388 262l5.4 3-4 3.6zM405 331l-0.4 6.5-4.4-3.3zM397 261l5.5 3.5-3.7 3.5zM403 289l4.7 2.9-4.2 3.7zM403 265l4.7 2.7-3.6 3.5zM405 246l2.4 5.7-5.2-3zM419 281l1.1 7.2-4.7-3.5zM420 288l1 7.2-4.5-3.5zM191 198l-1.4 2.2-2.3 0.9zM171 218l-2 3.5-1.9 1.4zM148 256l-1.9 5-0.9 1.5zM145 263l-1.1 4.2-0.7 1.5zM165 227l-1.6 3.4-1.9 1.4zM223 435l1.5 4.1-5.5-3.3zM216 416l5.2 3.3-4 1.6zM218 334l-0.6 5.9-4.4-2.9zM218 370l0.2 6.1-5.1-3.5zM221 419l5.9 3.8-4.1 1.6zM223 424l5.6 3.8-4.1 1.4zM234 441l1.9 4.2-5.8-2.9zM217 340l5.1 2.8-4.8 2.8zM230 433l6.3 2.7-4.1 1.3zM238 449l5.8 2.4-3.9 0.7zM240 452l5.7 2.6-3.8 0.6zM248 458l1.6 2.2-5.7-2.2zM222 337l5 3-4.9 2.9zM222 349l5 2.8-4.9 2.9zM227 352l0.2 6-5.1-3.2zM234 413l1.8 6-6-3.4zM236 419l1.3 5.3-6.1-3.3zM244 443l2 3.8-6.1-2.7zM240 444l6 2.8-4.2 1.1zM246 455l5.6 1.8-4 0.7zM227 346l5.1 2.9-5.1 3zM227 364l5.9 3.5-5.1 3zM237 399l0.9 6.1-6.1-3.4zM242 422l1.6 5.4-6.2-3.1zM250 430l1.5 5.2-6.4-2.8zM248 399l1.3 6.6-6.3-3.2zM249 406l1.6 5.6-6.4-3.2zM252 417l1.3 5.8-6.5-3zM247 420l6.3 2.8-5 2.4zM261 446l1.9 4-6.3-2.2zM257 448l5.9 2-4.5 1.5zM242 337l5.6 2.9-5.2 3zM249 364l0.9 6.8-6-3.2zM244 368l5.9 2.8-5.4 3.2zM245 380l6.5 3.7-5.3 3.2zM247 393l6.4 3.4-5.3 3.1zM253 396l1.6 6.6-6.4-3.1zM255 428l6.3 2.7-5 2.3zM265 454l5.7 1.3-4.5 1.4zM255 361l0.3 6.5-6-3.1zM269 414l6.6 2.8-5.3 3.1zM274 376l1.2 6.8-6.5-2.9zM271 393l6.4 2.5-5.4 3.5zM272 399l6.5 2.6-5.4 3.5zM279 402l0.7 5.7-6.6-2.6zM282 386l0.8 5.9-6.5-2.7zM284 425l6 1.4-5.2 3.2zM293 436l5.8 1.5-5.1 3zM290 366l1.2 5.9-6.3-2.6zM297 403l1.1 5.5-6.5-2.1zM290 366l6.3 2.2-5.1 3.7zM212 417l-5.3-3.2 3.6-1.8zM205 378l-5.1-4.8 4.2-1.7zM296 449l-1.1-4.4 6.1 1.2zM273 462l-5.9-2.1 4.5-1.3zM272 459l-5.8-2.3 4.5-1.4zM263 461l-5.4-2.1 4.2-1zM254 462l-0.5-2.4 4.9 2.1zM251 463l-5.1-2.4 3.7-0.4zM240 463l-4.2-2.2 3.2 0.1zM184 203l3.4-4 0.9-0.3zM188 199l3.5-3.6 0.8-0.2z" fill="#ff50a0"/>
<path d="M341 218l1.4 3.5-5.4-2.3zM277 253l0.8 6.1-5.9-2zM284 261l-5.7 4.2-0.5-6.1zM348 224l1.3 4.4-5.4-2.6zM284 261l0.4 6.5-6.1-2.3zM252 293l-4.8 3.7-0.5-6.5zM218 318l0.5 5.6-4.1-2.5zM327 240l1.5 5.3-6.1-2.6zM313 255l-5.5 3.4-0.9-6zM273 276l0.9 6.3-6-2.4zM262 284l1 6.8-5.8-2.4zM226 316l0.4 6.6-4.5-2.6zM313 255l0.9 6-6.4-2.6zM279 278l1.1 6.8-6.2-2.5zM268 287l1 6.3-6-2.5zM258 302l-4.6 3.9-0.7-6.7zM230 319l1.1 6.3-4.7-2.6zM350 245l-4.9 3-1.3-5.4zM297 272l0.9 7.1-6.5-2.6zM254 313l-4.7 3.6-0.8-6.7zM236 328l-3.9 3.5-0.9-6.2zM342 257l-5.1 2.7-1.2-6zM298 279l0.7 7-6.5-2.7zM299 286l-6.1 4.1-0.8-6.9zM286 287l1.2 7.4-6.4-2.7zM287 294l-5.5 4.6-0.7-7zM275 296l0.9 6.9-6.2-2.7zM250 323l-4.4 4-0.9-6.5zM245 321l0.6 6-5.3-2.7zM246 327l-4.8 3.7-0.9-6.4zM356 254l-3.8 2.6-1.3-5.7zM304 282l1.2 6.8-6.5-2.8zM299 286l0.5 6.9-6.5-2.8zM288 301l-5.7 4.6-0.8-7zM241 331l1.2 6-5.2-2.8zM355 269l0.8 6.1-5.8-3.1zM302 314l0.6 7.3-6.5-2.9zM291 330l-5.4 3.6-0.9-6.9zM353 292l-5.1 3.6-0.9-6.8zM308 317l1.1 7.2-6.5-2.9zM275 341l0.8 6.7-6.1-2.8zM359 295l-5.3 3.6-0.8-6.8zM298 332l0.4 7.2-6.4-2.8zM316 334l-5.5 4-0.7-6.8zM282 351l0.9 5.8-6.1-2.7zM364 298l0.7 6.5-5.4-2.9zM350 323l0.8 6.7-5.7-2.6zM366 324l0.3 6.8-5-2.5zM341 213l-4.1 1.6-0.1-4.4zM221 183l-3.7 0.4 5.2-3.2zM208 185l-4.3 3.3 1.7-2zM337 219l-4.2-2.7 4.2-1.7zM216 186l-3.8 0.9 5.1-3.5zM319 213l-4.7 1.8-0.1-4.9zM309 217l-5-2.5 5.2-2.4zM299 222l-5.8-2.1 5.5-2.8zM266 249l-6.4-1.7 5.6-4.1zM277 253l-5.1 4.1-0.4-5.9zM242 248l-5.8-1.3 5.4-4.5zM254 252l-5.3 3.8-0.6-6zM233 269l-5.3-1.4 4.8-4.5zM251 273l-5 4.6-0.9-5.7zM229 273l-5.9-0.9 4.6-4.5zM232 290l-4.1 4.1-1.3-5.3zM221 288l-3.8 3.7-1.4-5.3zM212 291l-5.1-1.5 3.7-4.2zM207 304l-5.2-1.4 3.2-3.9zM286 161l-5.4-0.7 6.4-1.2zM277 157l-5.2 0.4 6.2-1zM263 162l1.1-1.4 5.3-0.4zM256 168l0.9-2.3 5.3-0.2zM256 170l-5.3 0.1 5.6-2.4zM255 161l-4.9 1.5 5.7-1.7zM239 167l1.2-1.2 4.4-1.4zM236 176l-4.8 0.5 4.8-2.8zM234 169l1.1-1 4.2-1.5zM223 180l-4.3 1.2 4.2-2.9zM371 219l5.7 1.5-2 3.2zM348 209l1-2.8 3.5 4.2zM354 207l5.2 1.2-1.6 3.3zM407 226l5.1 3.3-2 2.7zM350 203l1.8-3.3 3.7 4.1zM345 216l4.5 0.9-3.2 3zM358 260l5.2 1.9-4.1 3.8zM364 247l1.8 5.3-5.4-2.1zM363 262l5.7 2.3-4.2 3.8zM368 287l5.1 3.3-4.6 3.8zM370 308l5.2 2.8-4.8 3.5zM380 307l5.2 3.4-4.8 3.6zM377 242l2 5.5-5.5-2.2zM375 251l5.7 2.3-3.9 3.6zM389 300l0.9 6.8-5.3-3.3zM370 222l4.7 1.7-3.2 2.9zM389 293l4.9 3-4.6 3.7zM394 296l5.1 3.4-4.5 3.7zM399 299l0.7 7.4-5.1-3.4zM400 327l0.1 7.2-4.6-3.3zM397 261l1.8 7-5.4-3zM393 265l5.8 3-3.9 3.6zM403 296l1.2 6.7-5.1-3.4zM413 295l0.2 7.5-4.8-3.5zM409 274l5.2 3.7-3.7 3.5zM406 237l2.1 6-5-2.9zM416 268l1.6 6.3-4.8-3.4zM196 194l-4.6 3.5 1.9-2.4zM187 201l-3.9 3.9 2-2.7zM153 245l-2.6 5.4 1.8-4.2zM194 197l-4.4 3.2 1.8-2.6zM144 267l-2.1 6.5 1.3-4.7zM201 193l-4.7 3 1.6-2.6zM190 200l-2.1 3-2.5 0.9zM171 220l-3.8 5.2 1.8-3.7zM160 236l-3.7 5.5 1.7-4.2zM162 235l-3.9 5.2 1.6-4.3zM142 277l-0.9 5.1-1.1 1.2zM138 295l-0.8 6.1 0.2-5.1zM145 275l-2.5 5.9 0.5-5.2zM143 276l-0.5 4.9-1.4 1.2zM192 205l-1.4 3.6-3 0.4zM188 209l-1.8 3.6-3 0.5zM158 248l-0.7 5.4-2.6 1zM146 273l0.1 5.7-2 1.1zM201 313l-2.2 4.8-1.9-4.6zM209 340l-0.7 5.4-4.1-3zM209 375l0.3 6.2-4.7-3.6zM213 405l1.2 5.3-5.2-3.7zM219 426l1.7 4.5-5.4-3.5zM223 444l5.5 2.6-3.4 0.5zM233 453l1.8 2.9-5.4-2.6zM209 375l4.6 3.7-4.4 2.5zM210 387l5 3.9-4.3 2.3zM229 447l5.2 2.5-3.6 0.5zM237 459l5.4 1.8-3.4 0.1zM213 343l4.3 2.7-4.7 2.8zM217 352l0.3 5.6-4.7-3.2zM226 434l6.1 3-3.9 1.1zM232 446l5.9 2.8-3.8 0.7zM234 449l5.9 3.1-3.7 0.6zM242 455l1.9 3-5.6-2.4zM222 337l0.1 5.8-4.6-2.9zM222 355l0.2 5.9-5-3.3zM217 364l5.5 3.1-4.8 2.8zM227 404l1.4 5.9-5.8-3.6zM233 426l1.5 5.1-6-3.3zM236 436l2.1 4.1-6-3zM222 332l5.1 2.3-4.9 2.8zM222 355l5.2 3-4.9 2.9zM223 373l5.4 3.8-4.9 2.8zM228 377l1.1 6.1-5.6-3.5zM226 398l5.9 3.7-4.7 2.5zM227 358l5.5 3.2-5.1 3zM235 387l0.8 5.8-5.9-3.5zM241 434l5.9 3-4.5 1.6zM233 361l5.1 3.4-5.2 3.1zM243 361l0.9 6.6-5.8-3.2zM258 387l0.8 6.2-6.4-3.1zM262 377l1.3 6.5-6.4-3zM277 444l1.7 4.1-6.4-1.7zM268 374l0.7 6-6.4-3zM282 419l1.5 5.5-6.6-2.2zM273 370l6.6 2.9-5.4 3.6zM287 439l6.7 1.5-5.1 2.8zM294 440l0.9 4.6-6.2-1.3zM286 376l1 5.9-6.4-2.7zM290 400l1.7 6.4-6.5-2.3zM294 418l1.3 5.1-6.5-1.9zM290 426l6.5 2.2-5.2 3.2zM216 178l-4.8 2.4-0.3 0.2zM211 180l-4.3 3.3 4.2-2.7zM221 175l-4.7 2.7 4.4-2.6zM231 460l0.3-0.7 3.9 2.8zM231 460l-4.2-2.5 4.6 1.8zM216 455l-4.3-3.2 4.8 2.5zM229 453l-4.4-1.6 2.6-1zM221 440l-5.1-2.7 3-1.5zM210 424l-1.6-5 5.1 3.3zM213 422l-4.6-3 3.5-1.8zM207 414l-1.7-5.6 5.1 3.6zM210 412l-4.7-3.6 3.7-1.8zM202 391l-1-5.7 4.8 4.1zM201 385l-0.6-5.7 4.7 4.2zM204 403l-5-4.1 3.9-1.8zM220 449l-5.1-2.2 2.6-0.9zM195 363l-4-4.9 4.2-1.4zM197 328l-3.2-4.3 4.2-0.8zM201 428l-5.6-3.5 3-1.1zM196 418l-4.6-3.5 3.3-1.3zM181 387l-1.2-6.1 4.6 4.8zM183 349l-3.8-5.3 4.2-1.1zM175 357l-4.1-4.9 3.9-1.2zM188 431l-2.8-3.8 4.8 3.9zM185 422l-4.9-4 2.5-0.6zM177 401l-4.9-4.5 3-1zM302 450l-0.9-4.2 6.3 1zM306 443l-6.1-1.3 5-3zM291 451l-1.1-3.8 6.1 1.3zM288 460l-5.9-1.2 4.9-1.9zM286 453l-5.9-1.3 4.9-2.1zM274 465l-6-2.1 4.5-1.1zM268 463l-5.3-2.1 4.4-1zM265 466l-5.6-1.5 4.2-0.7zM251 465l-4.2-1.9 3.7-0.2zM243 463l-0.6-2.2 4.5 2.2zM158 235l2.9-4.3 1-1.2zM162 230l2.4-4.6 1-1zM180 207l4.1-4.5-3.1 3.6zM168 220l3.1-3.6 0.9-0.9zM187 199l4.5-3.6-3.3 3.4zM183 203l3.6-3.5 0.8-0.5zM196 192l3.2-3.1 0.7-0.1z" fill="#ff6e82"/>
<path d="M305 241l-5.4 3.4-0.7-5.4zM299 239l0.6 5.4-6.1-2.1zM278 259l-5.7 4.1-0.4-6zM272 263l-5.1 4.1-0.4-6.1zM262 271l-5.7 4.4-0.3-6.2zM241 282l0.5 6-5-2.1zM228 294l0.4 6.2-4.4-2.2zM338 223l1.7 4.8-5.6-2.4zM310 238l1.1 5.4-6.1-2.2zM311 243l-5.2 3.6-0.8-5.5zM300 244l0.4 6.1-6.2-2.2zM256 275l0.7 6.8-5.5-2.2zM229 306l-4 4.3-0.6-6.2zM341 232l-4.3 2.7-1.3-4.8zM331 232l1.1 5.2-5.9-2.5zM252 286l0.2 6.6-5.4-2.3zM247 290l0.2 6.7-5.3-2.4zM243 301l-5 3.9-0.6-6.4zM222 320l-3.5 3.6-0.8-6zM341 232l1.4 5.4-5.8-2.6zM318 252l-5.1 2.9-0.9-5.9zM308 258l-6 4.1-0.8-6.2zM279 272l0.5 6.1-6.1-2.4zM258 295l-5.3 4.2-0.6-6.6zM243 307l-4.4 4.4-0.7-6.5zM234 309l0.4 6.2-4.8-2.5zM338 240l1.3 5.2-5.9-2.7zM335 248l-5.4 3-1.1-5.7zM308 258l0.4 6.7-6.4-2.6zM291 270l0.4 6.5-6.4-2.5zM263 291l0.7 6.5-5.9-2.5zM264 298l-5.5 3.7-0.6-6.7zM258 295l0.5 6.7-5.7-2.5zM244 314l-4.6 3.8-0.8-6.5zM339 245l1.5 5.8-6-2.8zM331 257l-5.4 3.2-1.1-6.1zM325 254l0.6 6.2-6.3-2.7zM244 314l0.7 6.5-5.3-2.7zM235 322l1.1 6-4.9-2.7zM354 243l1.1 5.3-5.6-2.9zM355 248l-4.1 2.9-1.4-5.5zM346 254l-4.3 2.6-1.2-5.8zM300 300l-5.5 4.2-0.8-7.1zM283 313l-5.5 3.9-0.8-7zM340 279l-5.1 3.7-1-6.7zM289 308l0.5 7.5-6.5-2.9zM284 320l-5.6 3.8-0.8-7zM273 328l-5.2 3.7-0.9-6.8zM258 339l-4.8 3.7-1.1-6.4zM346 282l-4.9 3.7-1-6.7zM335 283l0.8 6.5-6.3-3zM285 327l-5.7 3.7-0.9-6.9zM331 300l-5.4 4.6-0.8-7.1zM286 334l-5.8 3.5-0.9-6.8zM270 345l-5.2 3.4-1.1-6.4zM362 285l-4.3 3.1-0.9-6.6zM347 289l0.9 6.6-6-3zM331 300l0.9 7.5-6.3-2.9zM286 334l0.5 6.3-6.3-2.8zM280 337l1.1 7.1-6.2-2.8zM349 302l-5.5 4.4-0.7-6.9zM364 298l-4.7 3.5-0.7-6.7zM339 317l0.3 7.4-6.1-2.8zM337 210l-4.3 1.8-0.1-4.4zM298 193l-5.1-2 5.4-1.9zM210 186l-3.2 0.9 4.8-3.4zM298 198l-5 1.7-0-4.5zM287 198l-5.3-2.5 5.7-2.4zM309 212l-5.1-2.6 5.2-2.2zM276 198l-5.9-1.7 5.9-2.7zM222 191l-4.3 0 5.5-3.7zM215 189l-5.5 3.4 1.3-2.9zM204 192l-5 3.5 1.5-2.6zM218 191l-5.7 3.9 1.1-3.3zM213 192l-4.7 3.6 1.2-3.2zM247 196l-5.9 3.2 0.4-4.3zM215 202l-4.6 0.3 5.3-4.2zM304 230l-5.2 3.4-0.1-5.6zM288 229l-6-2.7 5.6-3.3zM241 209l-6.3 3.8 0.2-5zM235 213l-6 4.1 0.1-5.1zM265 237l-6.2-1.6 5.7-4zM265 231l-6.2 4.4-0.3-5.9zM213 226l-5.1-0.8 5.1-4.7zM288 246l-5.3 3.4-0.2-5.8zM277 247l-5.9-1.8 5.6-3.8zM203 230l-4.5-0.2 4.7-4.9zM253 240l-5.4 3.8-0.4-6zM272 257l-6-1.9 5.5-4zM243 254l-6.2-1.3 5.3-4.5zM231 251l-5.8-1 5.1-4.6zM199 251l-4.2-0.5 4.1-4.9zM250 268l-5.8-2 5.2-4.3zM244 266l-4.8 4.4-0.9-5.8zM234 275l-4.2 4.1-1.1-5.7zM220 282l-4.2 4.4-1.3-5.4zM215 281l-4.4 4.3-1.3-5.4zM227 289l-4.5 3.9-1.3-5.3zM207 290l-5-1.5 3.5-4.3zM202 288l-3.3 4.6-1.5-5.1zM203 294l-2.8 3.7-1.5-5zM213 309l-4.8-0.7 3.3-3.7zM358 171l0.4-1.2 4.8 2.8zM353 167l0.8-0.8 5 2.5zM354 165l-4.9-1.9 5.3 1.8zM333 172l0.6-2.2 5.3 2.7zM341 168l-5.9-2.4 6.1 0.7zM337 161l0.8-0.9 5.5 1.8zM336 163l-5.2-2.4 6.1 0.9zM338 160l-5.5-1.4 5.8 1.4zM323 185l-5.5-2.9 6.2-0.7zM318 179l1.2-3.4 5.4 2.6zM332 159l-5.5-1.5 6 1.1zM323 165l-6.2-1.9 6.4-0zM315 170l-6.2-1.7 6.5-0.6zM308 156l-6-0.8 6.4 0.2zM293 187l-5.5-1.9 6-1.7zM296 155l0.3 0.1 5.7 0.2zM287 185l-5-1.6 6-1.8zM293 158l-5.3-0.3 6.5-0.8zM289 156l0.9-0.6 5.7 0zM290 155l0.6 0.2 5.6-0.1zM283 173l-5.3-0.8 6.2-1.8zM287 159l-5.7-0.3 6.4-1.1zM288 157l-5.2-0.4 6.4-0.8zM289 156l-5.5-0 6.4-0.6zM280 162l-5.7-0.2 6.3-1.5zM281 160l-6 0.1 6.3-1.4zM266 173l0.6-2.4 5.5 0.7zM262 168l0.1-2.5 5.4 0.1zM267 158l0.5-0 5.2-0.9zM253 163l1-0.9 5-0.9zM256 161l-4.9 1.1 5.7-1.6zM248 165l-5.1 1.3 5.4-2.2zM245 164l0.6-0.1 4.5-1.4zM243 166l-4.6 1.5 5.3-2.3zM233 171l-4.4 1.5 4.8-2.6zM229 171l-3.5 1.8 4.7-2.5zM216 179l-3.2 1.7 4-2.7zM345 216l1.2-3.3 3.3 4.2zM382 222l5.3 2.5-2.1 3.1zM361 216l1.7-3.4 3.5 4.6zM363 213l5 1-1.8 3.2zM387 224l2.3-2.6 3.3 5.3zM403 232l2.1-3 2.9 5.6zM379 217l1.5-2.8 3.5 5.1zM380 214l5.9 2.2-1.9 3.1zM350 203l5.5 0.8-1.5 3.2zM409 224l4.9 2.7-1.8 2.6zM417 232l1.7-2 2.9 5.8zM411 221l1.2-2.4 3.4 5.6zM364 186l5 1.3-1.2 2.6zM383 185l5 2-0.7 1.7zM377 183l1-2.1 4.7 3.8zM384 180l0.1-0.5 5 3.4zM379 176l4.9 3.2 0.2 0.3zM356 234l1.4 5.4-5.2-1.6zM368 287l0.6 7.1-5.4-2.9zM363 291l5.6 3.1-4.6 3.7zM356 222l1.8 4.5-5-1.3zM358 226l1.4 5.1-5.1-1.5zM361 236l1.7 5.2-5.3-1.8zM363 241l1.3 5.6-5.3-1.9zM370 271l5.5 2.2-4.3 3.8zM375 273l1.6 6.8-5.5-2.8zM370 235l5.3 1.5-3.6 3.3zM385 272l1.5 7-5.5-3zM383 290l5.6 2.8-4.6 3.8zM390 307l0.4 6.8-5.2-3.3zM375 236l5.8 2.6-3.6 3.2zM377 228l5.1 2.4-3.3 3zM381 239l5.2 1.9-3.5 3.2zM386 241l2.1 5.5-5.5-2.4zM385 250l5 2.4-3.7 3.4zM392 282l5.3 3.3-4.3 3.7zM400 314l0.3 6.5-4.9-3.4zM394 249l1.4 6.2-5.4-2.7zM395 272l5.2 2.7-4 3.7zM400 275l5.5 2.9-4 3.6zM407 285l0.7 6.9-5.1-3.4zM390 230l5.6 2.2-3 2.7zM396 232l1.9 5.4-5.2-2.5zM398 237l2.1 5.9-5.3-2.7zM400 243l2.2 5.8-5.3-2.8zM403 240l2.3 5.8-5.2-2.8zM417 299l0.8 7-4.6-3.5zM413 302l4.8 4-4.1 3.7zM403 240l5.1 3-2.8 2.8zM416 292l5 3.2-3.8 3.6zM411 240l2 6-4.9-3zM411 240l4.5 3.3-2.5 2.6zM415 243l2.7 6.1-4.7-3.1zM204 188l-4.3 3.1 1.7-2.1zM165 224l-1.6 4-1.5 1.6zM163 228l-3.2 5.3 2-3.8zM162 230l-2.2 3.3-1.4 1.6zM158 235l-1.6 3.8-1.2 1.6zM150 250l-2.3 6.4 1.7-4.4zM148 256l-2.7 6.5 1.6-4.5zM145 263l-1.8 5.7 1.5-4.6zM179 209l-1.9 3.2-2.1 1.2zM163 228l-1.5 3.8-1.6 1.5zM156 239l-1.4 4-1.3 1.6zM143 269l-1.1 4.5-0.6 1.4zM194 197l-1.9 2.4-2.5 0.8zM179 211l-3.8 4.6 1.8-3.4zM155 243l-2 4.4-1.5 1.5zM146 261l-1.2 4.8-1 1.5zM143 272l-2.2 6.4 1-4.9zM199 196l-1.4 2.4-2.8 0.4zM166 229l-2 4.4-2.3 1.2zM153 251l-2.6 5.8 1.2-4.8zM145 269l-2 6.7 0.8-5.1zM144 271l-1 4.7-1.2 1.3zM137 307l-0.9 6.2-0.1-5zM193 202l-1.1 3.1-2.9 0.4zM159 244l-3.4 5.5 1.1-4.8zM150 262l-3.1 6.1 0.8-5.1zM138 300l-0.7 6.3-0.1-5.2zM136 330l0.8 4.9-0.7-4.7zM191 209l-4.8 3.6 1.3-3.7zM182 217l-4.4 4.5 1.3-4zM159 244l-0.9 4.4-2.4 1.1zM141 293l-1.7 6-0.1-5.3zM194 208l-4.6 4.3 1.2-3.7zM186 213l-0.9 3.5-3.2 0.4zM185 217l-4.2 4 1.1-4.1zM164 242l-3.2 5.5 0.8-4.9zM146 279l-1.9 6.1 0.1-5.4zM144 285l-1.7 6.6-0.1-5.4zM137 323l0.8 5.2-0.8 0.7zM193 212l-4.6 4.3 1-4zM185 217l-0.9 3.7-3.3 0.3zM141 303l-0.7 6.6-0.6-5.3zM145 296l-1.7 6.4-0.6-5.4zM143 297l0.3 5.4-1.9 1zM147 290l0.2 5.1-2.4 0.9zM174 245l-3.7 5.7 0.2-5.2zM143 314l1.5 5.2-2.1 0.8zM155 287l1.1 5.5-3.3 0.8zM154 299l1.4 5.3-3.2 0.8zM151 323l2.1 4.7-2.8 0.8zM192 261l-3.9 5.2-0.8-5.5zM162 314l2.4 5.3-3.6 0.8zM188 266l1 5.6-4.4 0.1zM172 307l2.1 4.8-4 0.8zM184 315l-1.7 5.9-2.1-4.8zM191 309l-2.4 5.6-1.9-4.9zM184 315l2.4 5.1-4.1 0.8zM200 298l-2.4 5-1.7-5zM199 308l2.1 4.5-4.1 0.7zM204 360l4.1 3-4.3 2.6zM209 407l5.2 3.3-3.8 1.7zM224 439l2.5 4-5.5-3.2zM213 348l-0.5 6.3-4.5-3.2zM213 354l-0.4 6.3-4.6-3.3zM208 363l4.8 3.4-4.4 2.6zM218 408l1.7 6-5.5-3.7zM220 414l1.2 5.3-5.5-3.6zM232 446l2.2 3.5-5.6-2.9zM231 450l5.2 2.7-3.5 0.4zM238 456l2.3 2.4-5.5-2.4zM214 326l4.1 2.8-4.6 2.7zM217 358l0.4 5.7-4.8-3.3zM213 360l4.4 3.7-4.6 2.7zM213 366l4.7 3.9-4.6 2.7zM213 373l5.2 3.1-4.6 2.6zM214 379l4.8 3.3-4.5 2.5zM218 324l4.8 2.1-4.7 2.7zM222 361l0.5 6.1-5.1-3.4zM242 455l5.7 2.5-3.8 0.5zM223 326l4.3 2.8-4.9 2.8zM240 384l0.9 5.9-6-3.4zM235 387l5.9 2.9-5.1 2.9zM243 402l1.2 6.4-6.2-3.3zM244 408l1.5 6.2-6.3-3.2zM245 432l6.5 3.2-4.7 1.9zM247 437l6.2 2.7-4.6 1.7zM249 441l5.9 2.9-4.5 1.5zM251 412l0.9 5.3-6.4-3.1zM250 430l6.4 3.1-4.8 2.1zM258 452l6.5 1.5-4.5 1.3zM260 455l6.2 1.7-4.4 1.2zM249 358l0.3 6.4-5.9-3.1zM251 384l1.4 6.1-6.3-3.2zM253 423l6.9 2.6-5 2.5zM266 444l1.6 4.3-6.3-2.1zM261 446l6.6 2.3-4.7 1.7zM268 448l1.1 3.9-6.3-1.9zM269 452l1.7 3.3-6.2-1.8zM254 349l0.1 5.9-5.8-3zM254 355l0.6 6.2-5.9-3.1zM255 403l6.1 2.6-5.3 3.1zM262 412l1.7 5.3-6.6-2.8zM257 415l6.7 2.3-5.2 2.8zM269 452l6.4 1.6-4.7 1.7zM259 352l1 5.9-6-3zM254 355l6 2.9-5.4 3.3zM271 442l6.3 2.1-4.9 2.2zM259 346l5.8 2.4-5.3 3.2zM259 352l6.4 2.6-5.4 3.3zM273 405l1.3 6.1-6.6-2.6zM274 435l7 2.3-5.1 2.6zM273 405l6.7 2.7-5.4 3.4zM284 446l5.9 1.2-4.9 2.4zM277 354l5.9 2.8-5.3 3.5zM289 359l6.2 3.1-5.1 3.6zM235 168l-4.9 2.1 5-2.3zM225 173l-4.7 2 4.7-2.5zM225 172l-4.7 3-0.2 0.1zM220 175l-4.1 2.6-0.3 0.1zM216 178l-4.8 2.4 4.3-2.7zM216 178l-4.3 2.3 4.2-2.7zM207 183l-4.2 3.1 3.9-2.8zM219 459l0.9-0.7 4.3 2.9zM211 453l0.7-1.2 4 3.3zM209 454l-4.5-3.6 5 3.1zM212 452l-4.2-3.7 4.8 2.7zM191 439l1.4 0.2 3.8 3.9zM227 454l-2.4-2.6 4.8 1.9zM222 448l-1.8-3.2 4.9 2.2zM212 429l-1.9-5.1 5.1 3.1zM204 403l-1.2-5.9 5 3.9zM207 395l-5.2-3.7 4-1.8zM204 366l-4.5-4.8 4.2-1.5zM204 342l-3.7-4 4.2-1.1zM201 332l0.4-4.8 3.6 4.3zM211 434l-2.2-3.9 5.1 3zM209 430l-2.2-4.5 5.2 3.2zM195 369l0.3-6.3 4.4 4.5zM200 367l-4.7-4.3 4.2-1.5zM197 334l0.3-5.9 3.6 4.4zM217 446l-4.5-2.6 2.7-1zM197 406l-1.8-5.5 5 4.1zM195 357l-3.9-5 4.3-1.3zM192 340l0.4-5.4 3.7 4.5zM196 339l-3.6-4.4 4.2-1zM215 451l-2.6-3.5 4.9 2.5zM217 450l-4.6-2.5 2.5-0.7zM205 437l-2.2-4.5 5.1 3.1zM195 401l-4.8-4.7 3.8-1.6zM187 366l-0.2-6.5 4.2 4.7zM191 346l-3.4-4.6 4.2-1.1zM215 451l-5-3 2.3-0.5zM203 433l-5.4-3.9 2.9-1zM195 425l-1.7-5.4 5.1 3.8zM193 408l-5-4.5 3.5-1.4zM185 331l0.5-5.6 3.4 4.6zM186 325l0.4-4.9 3.2 4.5zM210 448l-4.8-2.8 2.3-0.4zM183 355l-4.2-5.2 4.1-1.2zM186 325l-3.7-4.1 4.1-0.8zM195 430l-5.1-3.8 2.7-0.8zM190 426l-2.5-4.5 5 3.9zM181 387l-4.8-4.8 3.7-1.3zM175 357l-0.2-6.1 3.8 5zM179 356l-4.2-5.1 4-1.2zM192 431l-4.6-4.2 2.5-0.6zM164 367l-0.3-6.5 3.7 5.2zM161 387l-1.1-6 3.8 5.3zM165 404l-2.3-5.2 4 5.1zM154 345l0.8-6.3 2.7 5.2zM159 332l-2.8-5.1 3.3-0.9zM161 393l-3.9-5.1 1.9-0.4zM168 414l-3.4-5.1 1.2 0.2zM155 382l-2.7-5.3 1.9-0.5zM149 353l0.1-6.6 2.5 5.3zM155 388l-2.7-5.2 1.5-0.3zM150 365l-2.5-5.7 2-0.6zM147 341l-2-5 2.2-0.8zM160 404l-3.1-5.6 0.7 0.3zM147 372l-1.5-5.9 2.4 5.5zM143 349l-1.5-5.8 1.5-0.6zM141 362l-0.9-5.8 1.5 5.2zM138 346l-0.9-5.2 0.1-0.4zM278 464l-0.8-3.6 5.8 1.6zM253 467l-1.5-1.8 4.9 2.1zM249 467l-4.7-1.7 3.5 0.1zM165 224l3.1-3.7 1-0.9zM173 215l2.9-4.1 1-0.6zM184 203l4.2-4.3-3.1 3.5zM185 202l3.2-3.3 1-0.2zM196 192l4.6-3.2-3.2 3.1zM164 227l3.2-5.6-2.8 4.1zM192 195l3.7-3-3.3 3.2zM179 207l3.4-3.4 0.8-0.6zM195 192l3.6-2.8 0.6-0.3zM199 189l3.8-2.9-3.6 2.8z" fill="#ff8967"/>
<path d="M309 233l1.2 5-6-2.1zM310 238l-5 3.1-0.8-5.2zM272 257l0.3 6.1-5.8-2zM224 304l-3.4 3.9-0.5-6zM346 220l1.8 4-5.4-2.5zM334 225l1.4 4.9-5.7-2.4zM326 235l-4.7 2.4-1.1-5zM217 312l0.7 5.6-4-2.4zM335 230l1.7 4.7-5.8-2.5zM291 276l-5.2 4.6-0.7-6.7zM275 289l-6 4.3-0.6-6.8zM326 260l-5.7 3.7-1-6.2zM308 265l1.2 6.2-6.5-2.7zM309 271l-5.4 4.1-0.8-6.6zM275 289l0.2 6.9-6.2-2.6zM258 302l1.2 6.5-5.8-2.6zM309 271l1.1 6.8-6.5-2.7zM281 292l0.5 6.6-6.3-2.7zM255 319l-4.8 4.3-0.9-6.6zM249 317l1.2 6.3-5.5-2.7zM333 269l-5.4 4-1-6.5zM328 273l-5.8 3.8-0.9-6.6zM316 274l0.6 6.7-6.5-2.8zM270 307l1.3 7-6.1-2.8zM265 311l1 7.1-6-2.8zM251 330l-4.4 3.5-1-6.5zM271 314l1.1 7-6.1-2.8zM359 266l-4.4 2.7-1.2-6.2zM355 269l-5 3-1.1-6.3zM349 266l1 6-5.9-3zM295 311l-5.5 4.5-0.8-7.1zM257 333l0.8 6.2-5.7-2.9zM302 314l-5.9 4.4-0.8-7.1zM263 336l0.7 6.1-5.9-2.9zM279 331l1.2 6.5-6.2-2.9zM361 278l1.3 6.6-5.5-3.1zM348 296l-5.2 3.5-0.8-6.9zM333 212l-4.7-3.1 4.3-1.6zM319 203l-5-2.4 4.8-1.7zM271 181l-5.8 1.9 0.4-3.4zM265 183l-5.3-1 5.8-2.4zM260 179l-5.6 2.3 0.6-3.1zM239 181l-4.7-0.2 5.7-2.9zM225 182l-3.8 0.5 5.4-3.2zM217 183l-3.4 1.5 5.1-3.3zM324 211l-5-3.1 4.7-1.8zM293 191l-5.6 2.1 0-4.1zM276 189l-5.5-1.1 5.8-2.4zM271 184l-6.1 2.6 0.3-3.7zM233 184l-4.3-0.1 5.6-3.2zM230 181l-5.8 3.4 1.2-2.7zM224 184l-4 1.1 5.4-3.3zM221 183l-5 2.9 1.3-2.5zM212 187l-3.4 1 5-3.5zM214 184l-5.4 4 1.5-2.3zM207 187l-4.9 3.5 1.6-2.2zM304 205l-5.5-2.9 5.3-2.1zM282 191l-6 2.6 0.1-4.2zM270 188l-5.4 2.5 0.3-4zM215 189l-4.2 0.5 5.2-3.6zM304 209l-5.5-2.1 5.3-2.3zM247 192l-5-1.1 5.9-3.2zM324 225l-4.8-2.5 4.7-2.2zM309 212l-5 2.5-0.1-5zM287 202l-5.3 2.9-0-4.8zM276 198l-5.9 3 0.1-4.7zM206 193l-5.1 4.3 1.4-3zM324 225l-4.9 2.7 0-5.1zM304 220l-5.3-2.9 5.3-2.6zM293 215l-5.5-2.8 5.6-2.8zM270 206l-5.9-1.8 5.9-3.2zM264 204l-5.8-1.4 6-3.3zM236 194l-5.7 4.1 0.6-4.1zM217 194l-5.7 4.5 1-3.5zM212 195l-4.8 4 1.1-3.4zM309 222l-4.9 3-0-5.3zM304 220l-5.3 2.4-0.1-5.3zM287 212l-5.2 3.2-0.1-5.3zM282 215l-6.1-1.9 5.8-3.1zM276 213l-6-1.9 5.9-3.2zM264 204l-5.9 3.6 0.1-5zM246 205l-5.2-1.1 5.9-3.7zM225 198l-5.4 4 0.7-4.1zM299 222l-5.7 3.4-0.1-5.5zM224 207l-4.9-0.7 5.6-4.2zM210 206l-4.7 0.6 5.1-4.4zM202 203l-4.7 4.7 1.1-3.7zM229 207l-5.2 4.4 0.4-4.8zM219 206l-5.3 4.7 0.6-4.5zM293 237l-5.1-2.7 5.5-3.3zM276 230l-5.6-2.4 5.8-3.6zM205 211l-5.4 4.5 0.7-4.3zM288 240l-5.7-2.2 5.6-3.5zM229 217l-5.5 4.6 0.1-5.2zM218 221l-5-0.6 5.3-4.6zM288 246l-5.5-2.4 5.5-3.6zM283 244l-6.3-2.6 5.6-3.7zM271 233l-6.1 4.3-0.3-5.9zM235 224l-5.9 4-0.1-5.5zM223 222l-4.9 4.2 0-5.3zM277 241l-5.9 4.2-0.3-5.9zM241 231l-5.8 3.9-0.3-5.8zM224 227l-5.8 4.7-0.1-5.5zM271 245l-5.4 4.2-0.4-6zM265 243l-5.4 4.3-0.4-6zM241 236l-5.4 4.8-0.4-5.9zM213 231l-5 4.8-0.1-5.4zM208 230l-4.9 5.3-0.1-5.3zM254 252l-5.9-2.2 5.5-4.3zM194 245l-3.9-0.2 4.1-4.9zM243 260l-5.5-1.4 5.2-4.4zM261 265l-5 4.2-0.7-5.8zM249 262l-4.8 4-0.8-5.9zM238 265l-5.5-1.9 5-4.5zM210 258l-5-0.5 4.4-4.8zM238 265l-4.6 4-0.9-5.8zM221 261l-4.5 4.2-0.9-5.8zM246 278l-5.8-1.9 4.9-4.3zM218 271l-5.9-1.2 4.4-4.6zM216 265l-3.9 4.8-1-5.7zM246 278l-4.8 3.8-1-5.6zM241 282l-4.4 3.9-1.1-5.5zM237 286l-6.1-1.4 4.5-4.2zM199 278l-4.4-1 3.5-4.5zM216 286l-4 4.6-1.4-5.3zM205 299l-4.8-1.3 3.2-4zM215 301l-3.5 3.6-1.6-4.9zM207 304l-3.5 3.3-1.7-4.8zM342 210l1.6-3.6 4 3zM356 175l1.2-2.2 4.7 3zM350 190l-4.4-3 5.7 0.2zM350 176l0.8-2.3 4.8 3zM359 168l-4.9-2.5 5.3 1.8zM343 193l-4.4-2.8 5.8-0.1zM348 181l-5-3 5.9 0.4zM348 166l0.2-1.2 5.2 2.4zM343 162l0.5-0.5 5.4 1.9zM349 163l-5.3-1.6 5.5 1.7zM324 202l0.6-3.9 4.7 2.8zM343 163l-5.6-2.3 5.9 1.3zM321 192l0.7-3.8 5 2.8zM329 184l-5.3-2.6 6.2-0.4zM334 168l-5.1-2.8 6.2 0.4zM337 161l-5.2-2 6 1.1zM332 159l0.2-0.3 5.6 1.5zM325 178l-5.8-2.4 6.3-0.4zM323 165l0.2-1.9 5.6 2.1zM331 161l-5.9-2.1 6.2 0.7zM331 160l-5.4-1.9 6.1 0.9zM326 158l0.5-0.5 5.6 1.2zM317 182l-4.9-2.4 6.3-0.8zM322 167l-5.9-1.7 6.4-0.2zM317 161l1.2-1.3 5.8 1.7zM325 160l-6.2-1.5 6.3 0.5zM309 194l-5.4-2.6 6-1.2zM309 168l0.6-2.3 5.7 2zM311 161l0.7-1.3 5.8 1.5zM313 157l0.6-0.6 5.8 1.1zM305 160l0.8-1.5 5.8 1.2zM307 157l0.1-0.7 5.8 0.9zM298 189l-5.1-2 6-1.5zM293 187l0.5-3.6 5.5 2.1zM305 160l-5.7-1.1 6.5-0.5zM300 158l0.7-1.6 5.8 0.8zM307 157l-6.3-0.6 6.5-0.2zM288 182l0.5-3.9 5.6 1.8zM298 163l-5.9-1.4 6.5-0.9zM299 159l-5.5-0.9 6.5-0.6zM294 157l-5.6-0.4 6.5-0.6zM288 157l1.2-1.2 5.7 0.2zM282 183l-5.5-1.1 5.9-2zM279 167l0.3-2.7 5.7 0.8zM285 165l-5.7-0.7 6.4-1.5zM273 168l0.1-2 5.6 0.7zM274 162l1-1.9 5.6 0.2zM281 159l-5.3-0.3 6.3-1.2zM271 177l-5.2-0.6 5.8-2.2zM267 168l0.6-2.4 5.5 0.4zM274 164l-5.9-0.5 6.2-1.8zM263 164l0.4-2.1 5.4-0.2zM269 160l-4.9 0.6 6.1-1.6zM270 159l-5.1 0.5 6.1-1.5zM255 175l0.5-2.5 5.3 0.3zM262 168l-5.7-0.3 5.8-2.2zM258 162l1-0.8 5.2-0.6zM257 166l-5.2 0.1 5.7-2.2zM248 165l0.3-0.9 4.8-0.9zM245 175l-4.8 0.4 5.1-2.7zM246 168l-4.5 1.2 5.3-2.4zM237 170l0.7-1.3 4.5-1.1zM236 172l-3.9 0.8 4.9-2.6zM215 182l0.5-1.3 3.6-1.2zM212 184l0.1-2 3.4-1.4zM375 224l1.7-3.5 3.3 5zM380 226l2-3.6 3.2 5.2zM406 237l2-2.4 2.7 5.7zM411 240l1.9-2.4 2.6 5.7zM420 247l2.2-3 2.2 5.8zM358 211l4.7 1.6-1.7 3.3zM400 226l5.1 3-2.1 2.8zM415 235l4.7 3.2-2 2.5zM389 221l2.3-2.6 3.4 5.3zM400 226l1.9-2.6 3.2 5.6zM415 235l1.9-2.6 2.8 5.8zM354 207l1.5-3.2 3.6 4.3zM359 208l1.7-3.1 3.7 4.5zM361 205l1.2-3.3 3.8 4.4zM400 215l5.5 3-1.7 2.7zM368 203l1.2-3.1 3.9 4.6zM406 218l1.1-2.5 3.5 5.5zM412 219l5 2.9-1.5 2.3zM354 193l5.8 1.4-1.4 3.1zM376 199l5.7 1.4-1.5 2.9zM403 210l5.5 3.1-1.4 2.4zM413 216l5.3 3.8-1.2 2.2zM360 194l1.1-2.5 4.1 4.1zM382 200l1.1-2.3 4.1 4.8zM383 198l5.6 1.8-1.4 2.6zM361 191l1.3-2.4 4.2 4zM399 205l1.6-2.4 4.1 5.1zM410 211l0.7-2.1 3.9 5.4zM411 209l0.5-1.9 4 5.3zM364 186l0.6-2.5 4.4 3.8zM374 189l1.6-2.5 4.5 4.2zM391 195l0.9-1.9 4.4 4.6zM376 184l5.9 2.4-0.9 2zM398 193l5.3 2.8-0.4 1.4zM367 177l5.6 1.9-0.7 1.8zM372 181l0.6-2.1 4.7 3.6zM378 181l5.3 2.1-0.6 1.5zM388 187l0.5-1.4 4.7 4.1zM389 183l0-0.2 4.9 3.7zM369 171l0.2 0.2 4.9 2.5zM353 225l1.3 4.7-5-1.3zM356 254l5.8 1.9-4 3.7zM362 256l1.2 5.9-5.4-2.2zM351 221l5.1 1.1-3.4 3.1zM367 258l1.7 6.3-5.5-2.4zM364 268l5.9 2.6-4.3 3.8zM378 263l1.7 6.5-5.5-2.7zM381 276l1.1 6.8-5.5-2.9zM377 280l5.1 2.8-4.5 3.8zM371 227l2.4 4.4-5.3-1.8zM382 283l5.6 2.8-4.5 3.8zM388 286l0.6 6.8-5.4-3.2zM385 250l1.3 5.9-5.5-2.6zM382 259l5.9 3.1-4 3.6zM375 224l5 1.6-3.2 2.8zM392 259l1.4 6-5.5-2.9zM395 255l2.2 6.5-5.4-2.9zM403 265l1.1 6.1-5.3-3.1zM409 306l0.4 7.3-4.8-3.4zM412 288l0.6 7.4-4.9-3.4zM419 264l4.6 3.8-2.9 3.2zM142 273l-1.9 6.7 1.2-4.8zM150 253l-2.7 6.5 1.4-4.6zM145 266l-2.3 6 1.2-4.8zM196 196l-1.2 2.8-2.7 0.6zM188 203l-1.8 3.1-2.6 0.8zM169 224l-3.5 5.2 1.7-4zM158 240l-3.2 6 1.5-4.5zM153 247l-1.4 5-1.6 1.4zM149 258l-2.9 6.4 1.2-4.8zM146 264l-2.2 6.7 1.1-4.9zM145 266l-1.2 4.7-1.1 1.4zM136 303l0 5.2-0.3 1zM136 320l-0.3 5.4-0.2-4.8zM136 325l0 5.8-0.3-4.7zM185 209l-4.6 4.7 1.6-3.5zM180 214l-3.9 4.3 1.6-3.7zM157 245l-3.5 5.7 1.3-4.7zM137 296l0.2 5.1-0.6 1zM137 302l-0.5 5.2-0.5 1zM136 330l0.5 5.5-0.5-4.7zM136 331l0.5 4.5-0 0.5zM185 209l-1.8 4.1-2.9 0.6zM167 232l-4.3 5.9 1.3-4.5zM163 238l-3.9 5.6 1.2-4.6zM157 245l-1.4 4.5-2.2 1.2zM138 295l0.1 5-0.9 1zM137 312l-0.6 6.2-0.3-5zM186 213l-4.1 3.9 1.3-3.8zM169 232l-3.6 5 1.2-4.5zM156 249l-1.2 5.4-2.3 1.1zM145 275l-0.9 4.8-1.7 1.2zM138 311l-0.8 6.4-0.5-5.1zM136 318l1 5.3-0.7 0.7zM191 209l-1.6 3.3-3.2 0.3zM178 222l-1.5 3.8-3.1 0.6zM172 231l-3.6 5.2 1-4.6zM148 272l-1.9 6.7 0.2-5.3zM138 317l-0.1 5.5-0.7-5.1zM181 221l-1.2 4.4-3.3 0.4zM154 260l-0.2 4.9-2.6 1zM151 271l-2.6 6.6 0.1-5.4zM140 304l0.3 5.6-1.5 0.9zM183 225l-4 4.9 0.8-4.6zM167 251l-3.9 6.1 0.2-5.3zM157 264l-0.3 5.4-3 0.8zM174 240l0.1 5.1-3.6 0.4zM167 257l-3.8 5.5-0.1-5.4zM160 263l0 5.7-3.3 0.7zM144 308l1.4 5.1-2.2 0.9zM142 326l1.4 5-1.8 0.7zM153 293l-2.1 6.7-1-5.5zM149 306l-1.1 6.2-1.3-5.4zM145 313l1.8 5.4-2.4 0.8zM174 256l-3.3 5.5-0.3-5.5zM170 256l0.7 5.5-3.8 0.5zM156 292l-2 6.8-1.2-5.5zM153 293l1 5.8-3.1 0.8zM148 312l1.4 5.5-2.6 0.9zM165 279l-2.8 6.5-1-5.6zM154 322l2.2 4.9-3.1 0.9zM190 250l0.9 5.4-4.3-0.1zM191 255l-3.7 5.7-0.6-5.4zM184 266l-3.6 6-0.9-5.5zM170 301l-1.9 6.4-1.8-5.3zM193 272l-2.8 5.1-1.1-5.4zM193 272l1.6 5-4.4 0.1zM183 300l-2.5 5.3-1.8-5.2zM182 310l2.4 5.3-4.2 0.8zM195 308l-2.2 5.9-1.9-4.8zM198 303l1.3 4.9-4.2 0.6zM203 307l-1.9 5.5-1.8-4.7zM205 312l1.9 4.4-4 0.7zM211 319l3.4 2.1-4.5 2.6zM220 395l1.4 5.5-5.5-3.7zM217 403l5.6 3.4-4.3 2.1zM227 423l1.6 4.8-5.8-3.4zM230 433l2.1 4-5.8-3.2zM219 382l5.2 3.8-4.7 2.6zM224 412l5.8 3.6-4.4 2zM238 440l2 4.1-6-2.9zM234 441l6 3.1-4 1zM246 455l1.7 2.5-5.8-2.3zM230 389l0.8 6.6-5.8-3.5zM233 426l5.9 3.4-4.4 1.7zM236 436l6.4 2.7-4.3 1.4zM242 448l5.9 2.4-4.1 1zM228 370l5.5 3.8-5.1 2.9zM234 380l0.9 6.5-5.8-3.5zM236 393l0.8 6-6-3.5zM231 396l5.8 3-4.9 2.6zM241 417l1 5.2-6.2-3.2zM237 424l6.6 3.4-4.6 1.9zM244 443l6.4 2.5-4.3 1.3zM250 454l5.8 2-4.1 0.9zM232 337l5.1 3-5.1 2.9zM242 396l1 6.4-6.2-3.4zM248 425l1.9 5.3-6.4-2.9zM242 337l0.4 5.9-5.3-2.9zM263 450l1.5 3.5-6.2-2zM251 377l0.5 6.7-6.2-3.2zM246 387l6.4 3.1-5.3 3.1zM248 346l5.6 2.7-5.3 3.2zM249 358l5.6 3.2-5.4 3.3zM259 393l0.9 6.5-6.5-3.1zM259 346l0.4 5.7-5.8-2.9zM261 371l6.8 2.6-5.5 3.5zM230 170l-5 2.5 4.9-2.4zM230 170l-4.8 2.6 4.8-2.4zM216 178l-4.3 2.3-0.4 0zM229 464l-0-0.7 4.3 2.6zM229 462l1.1-0.5 4.1 2.7zM235 463l-4.3-2.5 4.5 1.6zM224 461l0.7-0.5 4.3 2.8zM226 459l0.8-1.5 3.9 2.9zM218 460l0.8-0.6 4.5 2.8zM223 462l-4.2-2.6 4.9 2.4zM220 458l0.6-0.5 4.2 3zM218 460l-4.6-3.1 5 2.8zM219 459l-4.6-2.6 4.9 2.6zM212 452l0.6-1.1 3.9 3.4zM208 454l-4.1-3.5 5 3.2zM204 450l1.2 0.1 4.3 3.4zM210 453l-4-3.3 4.9 2.9zM200 447l1.1-0.5 4.1 3.6zM206 450l-4-4 4.9 3zM194 443l0.7 0.4 4.3 3.6zM202 446l-3.8-3.8 4.8 3.2zM192 439l1.5-0.2 3.7 3.9zM190 439l-4.1-3.5 4.7 4.1zM188 435l-3.8-3.7 4.6 3.9zM166 412l-3.3-4 3.6 5zM163 408l-2.9-4.5 3.5 5zM159 403l-2.1-4.6 3.2 5.2zM233 466l0.7-0.9 4.5 2.3zM205 331l-3.6-3.8 4.1-0.9zM196 375l-0.6-6.2 4.5 4.5zM199 361l-3.8-4.4 4.3-1.4zM196 345l0.1-5.9 3.8 4.5zM201 327l-3-4.2 4.1-0.8zM204 427l-2.4-4.9 5.2 3.4zM195 369l-4-4.8 4.2-1.5zM191 364l0-5.9 4.3 4.6zM197 334l-3.9-5 4.2-0.9zM198 323l-3.3-4.5 4.1-0.7zM220 453l-5.1-2.5 2.4-0.6zM204 427l-5.6-3.6 3.2-1.3zM188 378l-0.9-6.2 4.5 4.7zM187 359l-0.1-5.7 4.1 4.7zM188 336l0.9-6 3.5 4.6zM193 329l-3.3-4.5 4.2-0.9zM207 445l-2.1-3.7 5 2.9zM210 444l-5.1-2.7 2.6-0.7zM187 353l-4-4.5 4.2-1.2zM183 349l0.4-6.5 3.8 4.8zM183 343l1-6.3 3.6 4.7zM188 341l-4-4.3 4.2-1.1zM200 433l-5.1-3 2.7-0.8zM198 429l-5.4-3.5 2.9-0.9zM185 405l-1.9-6 4.9 4.5zM184 380l-4.8-5.3 3.9-1.4zM179 362l-0.4-6.1 4 4.9zM193 425l-5.5-3.5 2.8-0.9zM182 393l-4.8-4.6 3.5-1.3zM175 351l0.2-6.2 3.7 4.9zM193 435l-3-3.9 4.9 3.7zM188 422l-5.4-4.6 2.7-0.8zM183 411l-4.5-4.1 3-1zM181 406l-4.3-4.7 3.1-1zM173 383l-1.1-5.8 4.3 5zM193 439l-2.4-3.8 4.8 3.6zM180 412l-4.3-4.3 2.7-0.8zM168 372l-0.6-6.2 3.9 5.2zM171 391l-4.5-5.6 3-1zM168 341l-3.2-5.1 3.7-1zM186 431l-4.7-3.7 1.8 0zM167 398l-1.8-5.8 4.2 5.1zM160 355l0.4-5.9 3.2 5.2zM164 342l-2.7-5.2 3.6-1zM165 336l-3-5.1 3.6-0.9zM184 431l-4.3-3.9 1.6 0.2zM177 423l-2.9-4.4 4.4 4.5zM169 409l-2.3-5.2 4.3 4.9zM167 404l-2.3-5.6 4.2 5zM163 393l-1.8-6 4 5.2zM161 337l-2.4-5.2 3.4-0.9zM180 427l-4.6-4.2 1.5 0.2zM173 419l-3.2-5 4.3 4.7zM156 376l-0.6-6.5 3.4 5.4zM157 344l-2.2-5.3 3.1-0.9zM158 338l-2.6-5.3 3.2-0.9zM168 414l-2.2-4.9 4 4.9zM157 388l-1.5-5.9 3.5 5.4zM154 345l-2.1-5.5 2.9-0.9zM160 399l-2.6-5.3 3.6 5.2zM152 340l-2.3-5.6 2.7-0.8zM151 377l-3.1-5.4 1.4-0.4zM148 365l-2.2-5.2 1.7-0.6zM147 353l-2.1-5.1 2-0.7zM145 336l0.4-5.8 1.8 5zM147 366l-2.5-5.7 1.4-0.5zM154 393l-2.8-5.1 0.4 0.3zM147 378l-1.7-5.8 2.3 5.4zM140 338l0.1-5.6 1.3 5zM139 339l-0.1-5.9 1.2 5zM147 377l-2.3-4.9 2 5.3zM139 351l-1.1-5 0-0.3zM137 340l-0.5-4.5 0.3-0.5zM268 463l-0.9-3.1 5.5 1.9zM259 464l-4.6-1.6 4.1-0.6zM251 463l-1.4-2.8 4.8 2.2zM167 221l4.1-4.6-2.9 4zM171 216l4-4.4-3 3.9zM183 203l4.4-4-3.3 3.5zM175 212l3.3-4.1 0.8-0.8zM195 192l4.2-3.1-3.5 3zM199 189l3.8-2.9 0.5-0.2zM199 189l3.4-2.6 0.4-0.3z" fill="#ff9f51"/>
<path d="M261 265l0.6 6.3-5.6-2zM256 275l-4.8 4.6-0.3-6.2zM251 280l-4.7 3.8-0.3-6.3zM300 250l-5.1 3.6-0.7-5.8zM278 259l0.3 6.2-6-2.1zM247 290l-5 4.4-0.4-6.4zM296 260l-6 3.5-0.7-6.2zM273 276l-5.2 3.9-0.5-6.5zM242 294l0.5 6.9-5.1-2.4zM349 228l1.8 5-5.5-2.7zM345 230l1.7 5.1-5.6-2.6zM337 235l1 4.8-5.9-2.6zM338 240l-4.7 2.5-1.2-5.2zM291 270l-5.9 4-0.6-6.5zM274 282l-5.6 4.5-0.6-6.6zM268 287l-5 3.8-0.6-6.7zM253 299l-5.2 4.3-0.6-6.6zM248 303l-4.9 4.4-0.6-6.5zM243 301l0.1 6.4-5.2-2.5zM239 311l-4.6 4.2-0.7-6.4zM351 233l1.3 4.8-5.5-2.8zM352 238l-3.9 2.1-1.4-5zM342 237l1.8 5.5-5.8-2.7zM302 262l0.8 6.5-6.4-2.6zM249 310l-5.1 4-0.7-6.6zM239 318l-3.8 3.6-0.8-6.4zM226 323l1.3 5.8-4.5-2.6zM352 238l1.7 4.9-5.6-2.8zM315 267l-5.8 4.2-0.9-6.5zM259 309l-4.9 3.6-0.7-6.7zM239 318l1.3 6.3-5.1-2.7zM310 278l-5.6 3.9-0.8-6.8zM241 331l-4 3.2-1-6.3zM346 254l1.7 5.6-5.9-3zM299 293l-5.3 4.2-0.8-7zM287 294l1 7.4-6.4-2.8zM261 322l-5.1 4-0.9-6.7zM349 266l-4.9 2.9-1.1-6.3zM322 277l1.1 6.6-6.5-2.9zM306 296l0.8 6.9-6.6-2.9zM324 202l-5.1 1.3-0.1-4.4zM293 191l-5.6-2 5.5-1.9zM245 178l-5.9 2.6 0.9-2.7zM254 181l-5.5 3.1 0.6-3.3zM249 181l-5.7 2.7 0.7-3.1zM304 200l-5.5 2.1-0.1-4.6zM287 193l-5.3 2.5 0.1-4.3zM282 195l-6-1.4 5.8-2.5zM259 185l-5.6 3.4 0.5-3.7zM237 187l-4.5-0.2 5.8-3.3zM299 207l-6-2.5 5.5-2.4zM270 192l-5.6 2.8 0.2-4.3zM248 188l-6 2.9 0.6-3.7zM237 190l-5.3 0.3 5.8-3.4zM232 190l-6 4 0.8-3.6zM270 201l-5.9 3.2 0.1-4.8zM288 218l-6.2-2.8 5.7-3zM252 206l-5.5-1.1 6-3.6zM241 204l-5.8-0.9 5.9-3.8zM210 202l-3.9 0.7 5.2-4.2zM206 203l-3.8 0.3 5-4.3zM258 213l-5.8-1.8 6-3.7zM230 202l-5.9 4.6 0.5-4.5zM235 208l-5.9 4 0.3-4.9zM214 206l-5 4.7 0.7-4.3zM210 206l-5.5 4.8 0.8-4.2zM200 211l-3.6 0.6 4.8-4.5zM252 217l-5.7 3.6-0.1-5.5zM214 211l-5.6 4.3 0.5-4.6zM204 215l-4.4 0.5 4.9-4.6zM258 224l-5.5 3.8-0.2-5.7zM235 218l-6 4.5 0-5.3zM199 220l-4 0.2 4.7-4.7zM241 231l-6.1-1.8 5.7-4.4zM235 229l-5.9-1 5.6-4.5zM224 227l-5.9-0.8 5.4-4.6zM218 232l-5-1 5.2-4.7zM224 238l-5.5-0.7 5.2-4.7zM203 235l-4.5-0.1 4.6-4.9zM203 230l-4.5 4.9 0-5.1zM203 235l-4.4 5.2-0.1-5.3zM199 240l-4.9-0.2 4.3-4.9zM214 248l-5.2-1 4.7-4.8zM204 246l-5.1-0.4 4.4-4.9zM203 241l-4.1 4.6-0.3-5.4zM215 254l-5.6-1.4 4.6-4.8zM204 252l-4.6-0.9 4.3-4.9zM211 264l-5.1-0.9 4.3-4.7zM205 257l-4.1 5.2-0.8-5.6zM207 269l-5.1-1.2 4-4.7zM202 268l-5-1.1 3.9-4.7zM197 267l-4.6-0.8 3.7-4.7zM207 269l-4 4.3-1.1-5.5zM198 272l-3.4 5-1.1-5.4zM351 187l1.5-2.7 4.4 3.3zM361 178l-4.6-3.4 5.5 1.2zM359 167l0.5-0.1 4.9 2.1zM343 193l1.5-2.9 4.5 3.2zM347 184l0.9-2.9 4.7 3.2zM354 166l-5.1-2.6 5.4 1.7zM343 178l-5-2.9 6 0.3zM338 175l0.9-2.5 5.1 2.9zM346 171l-5.5-2.9 6 0.8zM341 166l0.8-1.2 5.3 2.5zM334 170l0.4-2.4 5.3 2.6zM342 164l-5.1-2.5 5.9 1.1zM327 191l-5.3-2.8 6.1-0.6zM327 170l1.1-2.7 5.5 2.5zM329 165l0.6-1.6 5.5 2.2zM330 162l0.8-1.4 5.6 2zM316 189l0.6-3.4 5.2 2.7zM321 170l0.7-2.6 5.6 2.4zM322 167l0.5-1.9 5.6 2.2zM329 165l-5.8-1.9 6.3 0.3zM316 189l-5.6-2.5 6.1-1zM304 191l0.3-3.3 5.3 2.4zM308 171l0.8-2.7 5.7 2.1zM315 168l-5.4-2.3 6.5-0.5zM310 163l-5.5-1.1 6.5-0.5zM302 172l-6.1-1.7 6.4-1.2zM295 173l-5.4-1.3 6.3-1.4zM290 169l0.8-2.9 5.8 1.4zM283 177l0.3-3.6 5.7 1.5zM272 174l-5.8-0.6 5.9-2.1zM266 159l-5.3 0.6 6-1.4zM260 160l-5.2 1.3 5.8-1.7zM250 162l1.1 0.1 4.7-1.3zM244 165l0.6-0.6 4.6-1.3zM249 163l-4.4 1.4 5.5-1.9zM250 162l-4.4 1.9 5.5-1.8zM233 171l0.4-1.1 4.3-1.2zM239 167l-3.9 1 5.1-2.2zM229 172l-4.3 1.9 4.6-2.6zM216 179l0.8-1 3.5-1.5zM380 203l1.7-2.6 4 4.8zM386 205l1.2-2.6 4 5zM376 199l1.5-3.2 4.1 4.6zM393 205l1.1-2.8 4 5.1zM378 196l0.8-2.9 4.2 4.5zM384 195l5.9 2.4-1.3 2.4zM379 193l1-2.3 4.4 4.4zM358 185l1.2-2.7 4.3 3.7zM359 182l1.2-2.1 4.4 3.5zM382 186l5.3 2.7-0.8 1.9zM362 176l0.6-1.9 4.7 3.1zM389 186l-0.1-1.6 4.8 4zM389 184l4.9 3.3-0.2 1.1zM399 191l-0.2-0.5 4.7 4.3zM363 174l0.2-1.4 4.7 3zM368 176l0.4-1.8 4.8 3.2zM374 176l4.8 2.3-0.4 1.1zM363 173l0.6-1.6 4.8 2.9zM384 181l0.1-1 4.9 3.5zM374 174l5.2 2.8-0.1 0.6zM384 179l4.9 3.4 0.2 0.4zM389 182l4.5 3.6 0.3 0.3zM384 179l4.6 3.2 0.3 0.2zM364 170l0.4-0.8 4.9 2.4zM357 239l1.9 5.7-5.2-1.8zM359 245l1.4 5.2-5.3-1.9zM363 262l1.5 6-5.4-2.4zM359 245l5.3 1.6-3.9 3.6zM365 233l1.4 4.8-5.3-1.8zM361 236l5.4 1.8-3.7 3.4zM366 238l2.1 5.1-5.4-1.9zM363 228l5.1 1.6-3.5 3.2zM373 261l5.3 2.1-4.1 3.7zM373 231l2.3 5.5-5.4-1.9zM390 238l1.6 5.3-5.4-2.5zM386 241l5.6 2.3-3.5 3.2zM392 259l5.2 2.5-3.8 3.5zM397 285l5.6 3.6-4.3 3.7zM394 249l4.9 2.9-3.5 3.3zM401 258l1.5 6.5-5.3-3zM402 282l4.7 2.9-4.1 3.7zM409 274l1.6 7.3-5.1-3.3zM401 235l2.1 5.1-5.2-2.7zM413 271l1.2 6.7-5-3.4zM412 255l2.3 6.1-5-3.2zM413 246l2.2 5.9-4.9-3.1zM410 249l5.2 2.9-2.8 2.9zM414 261l5.1 3.4-3 3.2zM415 252l4.9 3.1-2.7 2.9zM418 249l4.3 3.4-2.4 2.7zM201 189l-1.3 2.1-2.3 0.8zM181 206l-2 3-2 1.3zM173 215l-2 3-1.8 1.4zM202 190l-4 3.5 1.7-2.3zM190 200l-4.6 3.9 1.9-2.8zM181 208l-3.9 4.2 1.9-3.1zM173 217l-4 4.5 2-3.5zM141 275l-0.9 4.7-0.4 1.4zM140 280l-1.3 5.9 1-4.9zM181 208l-1.6 3.1-2.3 1.1zM140 280l-0.8 4.7-0.5 1.3zM149 283l0.1 5.6-2.6 0.9zM183 230l-0.8 4.5-3.7 0.2zM167 251l-0.3 5.5-3.5 0.6zM163 257l0.2 5.5-3.4 0.7zM160 269l-2.9 6-0.3-5.5zM151 282l1 5.7-2.9 0.9zM190 230l-4 4.5 0.3-4.8zM186 230l0 4.5-3.8 0zM174 250l-3.6 6-0.1-5.4zM170 251l0.4 5-3.7 0.5zM158 281l-2.9 5.9-0.8-5.6zM190 235l-4.1 4.5 0.1-5zM152 305l-1.3 6.4-1.4-5.4zM151 311l-1.6 6.5-1.5-5.3zM147 318l1.5 5.5-2.5 0.8zM148 324l-0.3 5.4-1.7-5zM190 240l-4.1 4.6-0.1-5.2zM186 245l-4 4.9-0.2-5.3zM171 267l-3.1 6.1-0.7-5.6zM168 273l-3.1 6.2-0.8-5.6zM157 298l-1.6 6.3-1.4-5.5zM182 250l0.4 5.3-4.1 0.1zM178 255l0.8 5.9-4.1 0.2zM175 267l-3 5.6-0.8-5.6zM154 311l1.5 4.8-3.1 0.8zM170 284l-2.7 6.4-1.3-5.6zM179 266l1.4 6-4.3 0.3zM177 278l-2.9 5.8-1.2-5.6zM178 283l-2.5 6.3-1.4-5.5zM171 290l1.8 5.3-4.1 0.6zM189 272l-3.2 5.3-1.1-5.5zM175 289l2 5.7-4.2 0.6zM177 295l-2.5 5.7-1.7-5.4zM172 307l-1.9 5.6-1.9-5.2zM187 283l-2.9 5.4-1.4-5.4zM177 295l1.7 5.1-4.2 0.6zM179 300l-2.7 5.9-1.8-5.3zM170 313l2.1 4.6-3.9 0.8zM168 318l2.4 5.4-3.8 0.9zM187 283l1.5 5.1-4.4 0.4zM191 282l1.8 5.8-4.4 0.3zM193 288l-3 5.3-1.5-5.3zM180 305l2.4 5.4-4.2 0.7zM196 282l1.2 5.5-4.4 0.3zM209 381l0.9 6.2-4.8-3.7zM206 389l4.8 4.2-4 2.1zM211 393l0.8 6-5-3.8zM208 401l4.9 3.7-3.9 1.8zM217 421l1.9 4.8-5.4-3.6zM213 422l5.9 3.8-3.7 1.2zM221 431l1.5 3.9-5.5-3.4zM229 447l1.6 3-5.5-2.9zM227 450l5.7 3.1-3.3 0.2zM235 456l1.9 2.5-5.4-2.5zM208 345l4.6 3.4-4.5 2.7zM208 357l4.6 3.3-4.5 2.7zM213 366l0.1 6.5-4.8-3.5zM214 385l1 5.9-5.1-3.7zM217 403l1.3 5.4-5.4-3.7zM214 410l5.7 4-4 1.7zM223 424l1.5 5.3-5.6-3.5zM221 431l5.3 2.9-3.8 1.1zM224 439l6.1 3.2-3.7 0.8zM234 449l2.2 3.7-5.6-2.7zM218 329l-0.3 5.3-4.3-2.7zM213 337l4.4 2.9-4.7 2.8zM214 385l5.5 3.4-4.5 2.4zM216 397l5.4 3.5-4.4 2.2zM238 449l1.9 3.1-5.7-2.7zM223 326l-0.5 5.5-4.4-2.7zM222 349l0.1 5.7-4.9-3.2zM224 380l0.2 5.8-5.4-3.6zM231 421l1.8 5.2-5.9-3.4zM235 431l1.3 4.7-6-3.1zM222 343l4.9 2.8-4.9 2.9zM227 364l0.9 6.5-5.3-3.4zM229 383l0.9 6.4-5.7-3.5zM227 404l6.1 3.6-4.7 2.3zM235 431l5.6 3.2-4.4 1.6zM248 450l1.8 3.8-6-2.4zM252 457l1.5 2.6-5.8-2.1zM232 331l-0 6.1-4.9-2.8zM227 352l5.2 3-5.1 3zM233 361l-0.1 6.5-5.5-3.3zM252 449l2 3.8-6.1-2.3zM254 453l1.8 3-6-2.2zM232 331l5 3.2-5.1 2.9zM232 349l5.4 2.9-5.2 3zM237 352l0.7 6.1-5.5-3.2zM239 371l0.3 6.2-5.8-3.3zM244 427l5.9 3.3-4.7 2zM237 340l5.4 2.9-5.2 3zM240 384l6.1 2.9-5.2 3zM248 346l0.3 5.9-5.6-3zM246 164l-5.8 1.8 0.1-0.1zM230 170l-4.8 2.6-0.2-0.1zM226 173l-5.3 2.1 4.6-2.5zM225 173l-4.3 2.1-0.3-0.1zM221 175l-5.1 2.6 4.5-2.6zM217 178l-4.8 2.4 4.1-2.7zM235 462l-3.7-2.7 4.5 1.6zM213 457l0.4-0.1 4.7 2.9zM204 451l0.5-0.6 4.4 3.3zM199 447l-0-0 4.5 3.4zM195 443l0.4 0.3 4.2 3.7zM200 447l-4.6-3.7 4.9 3.5zM189 439l0.9 0.4 4.2 3.8zM194 443l-4.1-3.6 4.8 4zM185 435l0.9 0.5 4 4zM191 439l-3.3-3.6 4.7 3.8zM181 431l-4-4.5 4.4 4.6zM169 417l0.4 0.4 3.3 4.3zM159 402l0.3 0.8 2.7 4.4zM153 392l0.9 1.1 2.3 4.4zM239 466l4.5 1.7-0.3 1zM239 465l0.4-0.7 4.4 2.2zM239 464l1-0.9 4.3 2.2zM219 436l-5.1-2.9 3.2-1.5zM217 432l-5.1-3.4 3.3-1.6zM208 419l-1.3-5.2 5.1 3.4zM222 452l-2.2-2.8 4.8 2.2zM225 451l-5.2-1.8 2.6-1zM217 446l-1.8-3.6 5 2.5zM215 442l-2-3.4 5.1 2.6zM218 441l-5-2.4 2.9-1.3zM207 414l-5.4-3.9 3.7-1.7zM201 385l-4.7-4 4.1-1.7zM172 396l-1.3-5.5 4.5 4.9zM174 390l-4.5-5.5 3.3-1.1zM172 377l-4.2-4.9 3.5-1.1zM171 365l-3.9-5.5 3.7-1.1zM167 353l0.4-6 3.5 5.1zM167 347l0.9-6.1 3.3 5zM172 334l-2.6-4.9 3.9-0.9zM173 328l-2.6-4.6 3.9-0.9zM183 427l-2.6-4 4.7 4.2zM183 423l-5.1-4.6 2.3-0.4zM167 366l-3.3-5.5 3.5-1.1zM173 408l-4.2-4.6 2.4-0.6zM164 386l-1.5-5.8 4 5.2zM166 330l-3.1-4.9 3.6-0.9zM162 380l-3.2-5.1 2.7-0.8zM162 374l-4-5.3 2.9-0.9zM161 368l-3.5-5.5 3-0.9zM157 362l0.2-5.8 3.2 5.3zM161 343l-3.1-5.2 3.4-0.9zM158 369l-3.3-5.7 2.7-0.8zM163 404l-2-5 3.9 5.1zM155 382l-0.9-5.8 3.4 5.4zM155 369l-2.7-4.9 2.4-0.7zM154 357l-2.4-5.3 2.7-0.8zM157 388l-3.3-5.5 1.8-0.4zM154 383l-1.7-6.3 3.2 5.4zM152 377l-0.9-6.2 3.1 5.5zM152 352l-2.9-5.6 2.5-0.8zM152 346l-2.7-5.6 2.6-0.8zM152 334l-1.7-5.4 2.8-0.8zM167 413l-3.4-4.4 1 0.3zM151 377l-1.7-5.8 2.9 5.5zM151 371l-2.7-5.7 1.9-0.6zM148 365l-0.5-5.7 2.6 5.5zM160 404l-2.4-5.3 3.4 5.2zM148 372l-1.3-6.2 2.6 5.5zM149 371l-2.3-5.2 1.6-0.5zM147 347l-2.2-5.1 2.1-0.7zM158 399l-3.6-5.5 0.7 0.2zM144 366l-0.7-5.3 2.1 5.4zM149 383l-2-5.4 0.5 0zM146 372l-2.2-5.4 0.7-0.2zM142 361l-0.5-5.7 1.8 5.4zM141 350l-0.7-6.2 1.6 5.2zM147 377l-2.1-4.8 2.1 5.4zM139 344l0-5.3 1.3 5.1zM145 372l-2-5.2 0.2-0.1zM142 361l-1.7-5 0.5-0.3zM140 356l-1.1-4.9 1.2 5.1zM139 351l-1-5.3 1.1 5.1zM263 461l-1.2-3.1 5.3 2zM256 467l-4.5-1.8 3.9-0.3zM255 465l-4.5-2.2 3.9-0.4zM157 236l3.9-5.3-2.4 4.2zM164 225l4.1-4.7-2.7 4.1zM169 219l3-3.5 1-0.7zM181 206l3.1-3.5 1-0.3zM188 199l4.4-3.8-3.2 3.4zM197 192l3.6-3.2 0.8 0.1zM164 225l3.2-3.6 0.9-1zM180 207l3.2-4 0.9-0.4zM187 199l3.8-3.3 0.7-0.3zM192 195l3-2.8 0.7-0.2zM199 189l4.3-3.1-3.5 2.9zM191 196l3.4-3.4 0.6-0.4z" fill="#ffb53b"/>
<path d="M346 220l-3.6 1.5-1.4-4zM342 222l-3.7 1.4-1.4-4.2zM337 219l1.3 4.4-5.6-2.3zM320 232l-4.7 3.1-1-4.9zM294 248l-5.2 3.5-0.6-5.6zM237 292l-4.5 4.2-0.4-6.2zM220 302l0.6 5.9-4.1-2.3zM331 232l-4.8 2.8-1.2-4.9zM320 232l1.3 5.4-6-2.3zM321 237l-4.7 3.3-1-5.2zM305 241l0.8 5.6-6.2-2.2zM228 300l0.9 6.5-4.5-2.3zM221 314l-3.3 3.6-0.7-6zM214 315l0.4 6.1-3.9-2.4zM344 226l1.3 4.3-5.6-2.5zM326 235l1.3 4.9-6-2.4zM316 240l1.3 5.8-6.2-2.4zM307 252l-5.8 4-0.8-5.9zM290 264l-5.6 3.5-0.6-6.3zM279 272l-5.7 3.7-0.5-6.4zM247 297l-4.5 3.9-0.5-6.5zM230 313l-4.4 3.5-0.7-6.2zM342 237l-4 2.8-1.3-5.1zM333 242l-4.5 3.3-1.2-5.4zM296 266l-5.3 3.9-0.7-6.4zM268 280l0.4 6.5-5.9-2.4zM344 243l-4.7 2.2-1.3-5.3zM330 251l-5.5 3.1-1.1-5.8zM253 299l0.4 6.9-5.6-2.6zM330 251l0.7 5.9-6.2-2.7zM314 261l0.8 6.4-6.4-2.7zM249 317l-4.3 3.5-0.8-6.6zM240 324l-3.9 4-0.9-6.3zM341 251l0.7 5.6-6-2.9zM316 274l-5.9 3.8-0.9-6.7zM240 324l1.2 6.7-5.1-2.7zM276 303l0.7 6.9-6.2-2.8zM328 209l-4.3-2.9 4.5-1.6zM328 205l-4.3 1.1-0.1-4.4zM324 206l-5.1-2.7 4.6-1.6zM234 181l-4.3 0.2 5.6-3zM227 179l-5.8 3.5 1.3-2.3zM225 182l-5 3.1 1.3-2.6zM220 185l-5.3 3.7 1.3-2.7zM207 191l-3.3 0.7 4.9-3.7zM210 192l-4.2 1.3 5-3.8zM206 193l-3.7 1.4 4.9-3.8zM207 191l-4.7 3.4 1.5-2.7zM202 194l-3 1.5 4.7-3.9zM212 195l-3.7 0.6 5.2-3.9zM210 192l-5.5 4.4 1.3-3.1zM201 197l-3.4 1.4 4.7-4zM309 217l-5 2.7-0-5.2zM288 223l-6.1-2.3 5.7-3.2zM288 218l-6.1 2.7-0.1-5.4zM201 207l-3.7 0.7 4.8-4.4zM293 225l-5.3 3.6-0.1-5.6zM288 223l-6 3.3-0.1-5.6zM299 233l-5.5 3.6-0.1-5.7zM282 232l-5.7-2.2 5.7-3.5zM270 228l-5.6-2.3 5.8-3.7zM294 242l-6-2 5.4-3.4zM288 234l-5.7 3.8-0.2-5.8zM276 230l-5.4 3.4-0.2-5.8zM277 241l-6.2-1.7 5.7-3.8zM265 237l-5.8 4.3-0.4-5.9zM277 247l-5.5 4.2-0.3-5.9zM260 247l-6.4-1.5 5.6-4.2zM271 251l-5 4.1-0.4-5.9zM254 246l-5.9 3.8-0.5-6zM248 250l-5.9-1.8 5.5-4.4zM249 256l-6.3-1.8 5.4-4.4zM243 254l-5.5 4.6-0.7-5.9zM255 263l-4.9 4.6-0.7-5.9zM250 268l-4.9 3.9-0.8-5.8zM233 269l-4.3 4.4-1-5.8zM240 276l-4.5 4.4-1.1-5.7zM223 272l-4.3 4.6-1.1-5.7zM215 281l-5.7-1.1 4-4.4zM209 280l-3.5 4.2-1.3-5.4zM228 294l-4.1 4-1.4-5.2zM224 298l-5.4-1.1 3.9-4zM219 297l-5.6-1.2 3.8-4.1zM224 298l-3.9 3.9-1.5-5zM216 306l-2.9 3.4-1.6-4.7zM208 308l-4.5-0.7 3.1-3.7zM344 206l1-2.9 4.1 3.1zM364 169l-4.5-2.1 4.9 2zM341 213l-4.1-2.8 5.4-0.5zM337 210l1.1-3.2 4.1 3zM354 166l0.3-0.9 5.1 2.2zM349 164l-0.1-0.6 5.2 2.1zM349 163l0.1 0.1 5.2 2zM328 205l1.3-4 4.5 2.9zM332 159l0.5-0.4 5.6 1.3zM312 160l0.3-1.7 5.8 1.4zM299 159l1-1.5 5.8 0.9zM308 155l-5.4 0.1 6.3 0.3zM296 155l1 0 5.7 0zM279 164l0.9-1.9 5.7 0.6zM282 158l0.8-1.4 5.7 0zM275 160l-5.5 0.2 6.2-1.5zM269 162l-5.6-0.1 6.1-1.7zM257 166l0.5-2.1 5.2-0.3zM259 161l0.8-0.7 5.1-0.8zM261 160l0.6-0.8 5-1zM251 168l0.8-1.9 5.1-0.4zM254 162l0.8-0.7 4.9-1zM255 161l0.8-0.3 4.9-1.1zM250 175l-5 0.1 5.3-2.6zM251 170l-5.2 0.5 5.4-2.5zM246 168l0.9-1.2 4.9-0.7zM241 171l0.5-1.8 4.7-0.7zM242 169l0.2-1.4 4.7-0.9zM240 175l-4.4 0.8 5-2.7zM236 174l0.4-2.2 4.6-0.8zM241 171l-4.6 0.8 5.1-2.6zM238 169l0.4-1.5 4.4-1.2zM245 164l-4.8 1.8 5.3-2zM231 176l0.6-1.5 4.4-0.8zM227 177l-4.1 1.3 4.5-2.8zM225 174l0.5-1.2 3.8-1.5zM223 178l-3.9 1.4 4.3-2.8zM224 175l-3.7 1.5 4.4-2.7zM208 185l1-1.5 3.2-1.4zM208 185l-2.6 1.3 3.6-2.8zM350 217l1-3.4 3.3 4.3zM377 221l5 1.4-2 3.1zM393 227l4.8 2.2-2.2 3zM396 232l1.8-2.8 3 5.5zM401 235l2-3.2 2.8 5.6zM418 241l4.2 3-2.1 2.5zM379 217l5 2.3-2 3.1zM384 219l1.9-2.8 3.4 5.2zM395 224l1.7-3.2 3.3 5.5zM417 232l4.5 3.8-1.9 2.4zM370 211l1.4-3.4 3.7 4.8zM380 214l2.3-2.9 3.6 5.1zM388 213l5.2 2.5-1.9 2.9zM407 226l1.9-2.4 3.2 5.7zM352 200l5 0.6-1.5 3.2zM382 211l2-2.9 3.7 5.1zM406 218l4.6 3-1.7 2.6zM411 221l4.5 3.3-1.6 2.4zM386 205l5.2 2.4-1.6 2.8zM395 213l1.6-3.1 3.7 5.3zM412 219l1.5-2.7 3.5 5.6zM364 169l5.2 2.2 0.1 0.1zM351 233l4.9 1.4-3.6 3.4zM350 217l4.4 1-3.3 3zM358 226l4.9 2-3.5 3.2zM359 231l5.7 1.7-3.6 3.3zM371 255l1.8 5.5-5.5-2.4zM359 219l5.4 1.5-3.3 2.9zM368 230l2 4.5-5.3-1.8zM364 221l5.5 1-3.3 2.9zM381 253l1.4 6.4-5.5-2.5zM379 233l1.8 5.6-5.4-2.1zM382 230l2.2 5.5-5.4-2.1zM408 268l1.2 6.4-5.2-3.2zM398 237l5.1 3.1-3 2.8zM175 213l-4 5 2.1-3.2zM149 255l-2.9 6 1.5-4.6zM146 261l-2.1 6.2 1.4-4.7zM139 286l-1.4 6.1 0.9-4.9zM192 199l-4.1 4 1.7-2.9zM161 232l-1.3 3.9-1.8 1.4zM158 237l-1.7 4.5-1.6 1.5zM147 260l-2.2 5.8 1.3-4.7zM142 273l-1.2 5.4-0.7 1.4zM139 285l-1 5.9 0.8-5zM175 216l-1.5 3.2-2.4 1.1zM150 253l-1.3 5.1-1.4 1.4zM141 278l-1 5.4-0.8 1.3zM137 296l-0.4 6.1 0.4-5zM136 308l-0.3 6.1 0.1-5zM136 315l-0.4 4.8-0.1 0.8zM195 199l-1.7 2.8-2.8 0.5zM190 202l-1 3.5-2.8 0.6zM186 206l-1.4 3.5-2.7 0.7zM162 235l-1.7 4-2.2 1.2zM160 239l-3.2 5.7 1.4-4.5zM158 240l-1.2 4.7-2 1.3zM143 276l-1.9 6.1 0.7-5.1zM139 290l-0.8 4.8-0.8 1.1zM136 320l-0.1 4.7-0.2 0.7zM136 325l0.1 5.2-0.4-4.8zM196 201l-4.1 4.1 1.4-3.3zM176 218l-1.3 4.2-2.7 0.8zM175 222l-4.4 5.2 1.4-4.1zM172 223l-1.4 4.2-2.6 0.9zM160 239l-0.9 4.6-2.3 1.1zM156 249l-3.6 6.6 1-4.9zM148 263l-1.1 5.1-1.7 1.2zM145 269l-0.5 5.5-1.5 1.2zM179 218l-1.4 3.5-2.9 0.7zM178 222l-4.5 4.4 1.3-4.2zM139 294l0.3 5-1.2 1zM137 329l0.3 5.3-0.8-4.8zM195 205l-1.2 3.4-3.2 0.2zM165 237l-0.5 4.7-2.8 0.9zM157 253l-2.9 6.6 0.6-5.1zM152 261l-0.8 4.9-2.3 1.1zM140 304l-1.2 6.5-0.5-5.2zM172 231l-0.5 4.5-3.2 0.6zM164 242l-0.2 4.7-3 0.8zM164 247l-3.8 5.6 0.6-5.1zM154 265l-3.1 6.2 0.2-5.4zM197 288l1.7 4.6-4.3 0.3zM200 298l1.8 4.6-4.2 0.5zM205 312l-2.1 5-1.8-4.5zM205 378l4.3 3.2-4.1 2.3zM212 399l0.9 5.7-5.1-3.8zM214 326l-0.6 5.5-4-2.7zM214 379l0.3 5.8-5-3.6zM213 405l5.3 3.4-4.1 1.9zM226 434l2.2 4.2-5.7-3.2zM238 456l5.9 2-3.6 0.3zM240 458l5.9 2.6-3.5 0.2zM222 343l0 5.7-4.7-3.1zM224 380l5.1 3.1-4.9 2.8zM233 408l1.4 5.4-6-3.4zM231 421l6.3 3.3-4.5 1.9zM238 364l0.6 6.8-5.7-3.3zM242 343l5.9 2.8-5.3 3.1zM248 340l5.2 2.7-5.3 3.1zM221 175l-4.7 2.7-0.4-0.1zM208 183l-4.1 2.9 3.8-2.8zM208 183l-4.1 2.9-0.6 0zM230 462l0.7-1.5 4 2.8zM218 460l0.4-0.3 4.7 2.7zM224 461l-4.1-2.7 4.8 2.2zM225 460l-3.7-3.4 4.7 2zM213 457l0.8-0.3 4.5 3zM217 454l0.4-0.6 3.9 3.2zM206 450l0.9-1 4 3.5zM234 465l4.6 1.5-0.4 0.9zM235 463l4.4 1.3-0.5 1.1zM239 464l5.3 1.3-0.4 1.3zM235 462l0.8-1.2 4.1 2.2zM225 447l-4.8-2.2 2.8-1.3zM203 397l-1.2-5.7 4.9 4zM200 338l0.8-5.5 3.7 4.4zM207 425l-2.1-4.4 5.2 3.3zM197 387l-0.7-6 4.7 4.3zM195 357l0.4-6.3 4.1 4.5zM215 447l-2.5-3.6 5 2.6zM210 440l-2.1-4.3 5.1 2.9zM198 412l-1.5-5.8 5.1 3.9zM202 410l-5.5-3.8 3.7-1.6zM200 405l-4.8-4.5 3.8-1.7zM196 375l-4.7-4.7 4.2-1.6zM191 370l0-5.8 4.4 4.6zM208 436l-5.2-3.5 2.9-1.1zM203 433l-2.5-4.9 5.1 3.3zM200 417l-5.4-3.8 3.4-1.5zM198 412l-5-4.3 3.6-1.5zM194 395l-4.8-4.7 3.9-1.6zM187 347l0.6-5.6 3.8 4.7zM189 330l0.7-5.5 3.4 4.5zM210 448l-2.5-3.2 4.9 2.7zM198 429l-2.6-4.5 5.1 3.6zM190 409l-2-5.5 5 4.2zM188 404l-1.4-6.3 4.9 4.4zM187 372l-4.2-5 4.1-1.4zM188 404l-4.9-5 3.5-1.3zM184 337l-3.5-5 4.2-1zM181 332l0.4-5.7 3.3 4.6zM208 448l-5-2.6 2.1-0.2zM203 445l-2.7-2.9 4.9 3.1zM177 388l-0.8-5.8 4.5 4.9zM179 375l-4-5.3 3.8-1.3zM175 363l-0.4-5.9 4 5zM179 344l-3.3-5.2 4.1-1.1zM195 439l-2.3-3.9 4.9 3.5zM198 439l-5.3-3.9 2.2-0.3zM190 426l-5-3.8 2.6-0.7zM174 390l-1.3-6.6 4.4 4.9zM171 371l-0.1-6.4 4 5.1zM171 358l-0.1-5.9 3.7 5.1zM190 431l-4.8-3.8 2.3-0.4zM187 427l-4.4-4.3 2.4-0.5zM264 464l-1.3-3.1 5.3 2zM256 467l-0.6-2.1 5.1 2zM257 469l-4.5-1.6 3.9-0.1zM253 467l-5.2-1.7 3.7-0.1zM177 210l3-3.4 1-0.4zM201 189l3.6-3 0.8 0.2zM187 199l3.2-2.8 0.6-0.5z" fill="#ffd020"/>
<path d="M315 235l1.3 5.3-6.1-2.3zM257 282l-5.3 4-0.4-6.4zM224 304l1 6.3-4.3-2.3zM311 243l1 6-6.2-2.4zM262 284l-4.8 4.4-0.5-6.5zM231 325l1.1 6.5-4.8-2.7zM355 248l1.5 5.9-5.6-3zM337 215l-4.3-3.2 4.1-1.6zM319 199l-5 1.6-0.1-4.3zM309 198l-5.3-2.5 5.1-1.7zM287 185l-5.1 2.1 0.1-3.8zM324 206l-5 1.9-0.1-4.5zM319 208l-4.9-2.8 4.8-1.8zM314 201l-5 1.5-0.1-4.5zM309 198l-5.2 2-0.1-4.4zM287 193l-5.2-1.8 5.6-2.2zM260 182l-6.2 2.7 0.5-3.4zM254 185l-5.5-0.9 5.9-2.8zM243 184l-4.8-0.4 5.8-3zM244 181l-5.8 2.6 0.8-3zM220 185l-4 0.9 5.3-3.4zM328 213l-4.1 2.4-0.1-4.7zM319 208l-4.8 1.9-0.1-4.7zM309 207l-5.1-2.4 5.2-2.1zM265 191l-6.1-1.7 5.9-2.8zM265 187l-6.1 2.3 0.4-3.8zM248 184l-5.4 3.1 0.7-3.4zM333 221l-4.6 2.1 0-4.9zM324 215l-4.8 2.5-0-4.9zM319 218l-4.7-3.2 4.9-2.1zM287 202l-5.3-1.9 5.7-2.5zM264 195l-5.4-1.5 6-2.9zM259 189l-6 3.4 0.4-4zM228 187l-5.9 3.6 1-3.2zM314 215l-4.8 2.1-0-5zM282 200l-6.1 2.9 0-4.8zM247 196l-5.5-1.1 5.9-3.4zM242 191l-5.9 3.4 0.6-3.9zM226 194l-4.8 0.1 5.6-3.8zM221 194l-4.4 0.4 5.5-3.8zM309 222l-5-2.3 5.2-2.6zM220 198l-4.3 0.1 5.5-4zM221 194l-5.3 4.1 0.9-3.7zM200 201l-3.8 0.5 4.7-4.1zM314 230l-4.7-2.4 5-2.6zM304 225l-5.3-2.6 5.3-2.8zM299 217l-5.8 2.9-0.1-5.3zM216 198l-5.6 4.3 0.9-3.8zM252 206l-5.7 3.9 0.1-5zM246 205l-5.5 3.8 0.2-4.9zM225 202l-5.9 4.3 0.6-4.4zM219 206l-4.8 0.3 5.4-4.3zM293 231l-5.3-2.4 5.5-3.2zM264 220l-5.7 3.8-0.1-5.6zM224 216l-5.7-0.2 5.5-4.4zM196 216l-4.1 0.2 4.5-4.6zM196 212l-4.1 4.2 0.9-4zM299 239l-5.4 3.3-0.1-5.7zM246 221l-5.4 3.8-0.1-5.5zM213 220l-4.9 0.1 5.1-4.7zM208 220l-4.5-0 5-4.7zM288 240l-5.5 3.6-0.2-5.8zM208 220l-4.8 4.9 0.3-4.9zM195 220l-4.4 5 0.6-4.5zM271 239l-5.8 4.2-0.3-5.9zM241 236l-5.8-1.1 5.6-4.4zM198 230l-3.8-0.3 4.5-4.9zM247 238l-5.4 4.2-0.4-5.9zM194 230l-4 4.6 0.2-4.9zM242 242l-5.8 4.7-0.5-5.9zM230 245l-5.4-0.9 5.2-4.7zM230 239l-5.4 5.1-0.5-5.8zM225 244l-6-0.9 5.1-4.7zM219 243l-5.4-0.9 5-4.8zM203 241l-4.4-0.8 4.5-4.9zM272 257l-5.5 4-0.5-5.9zM225 244l-5.5 4.9-0.6-5.8zM214 242l-5.2 5-0.5-5.6zM226 256l-5.7-1.3 4.9-4.7zM225 250l-4.7 4.7-0.7-5.8zM194 245l-3.6 5-0.3-5.3zM200 257l-3.9 4.4-0.8-5.5zM206 263l-4.1 4.8-1-5.6zM196 261l-3.6 5.2-0.8-5.4zM197 267l-3.6 4.6-1-5.4zM227 289l-5.8-1.4 4.2-4.2zM216 286l-5.4-0.7 3.9-4.3zM205 284l-4.4-0.8 3.6-4.4zM201 283l-5.2-0.7 3.4-4.4zM223 293l-5.8-1.3 4-4.2zM205 284l-3 4.5-1.4-5.3zM217 292l-3.6 3.8-1.5-5.2zM208 295l-4.6-1.3 3.5-4.1zM207 290l-3.6 3.7-1.5-5.2zM210 300l-5-1.3 3.4-4zM211 305l-2.8 3.3-1.6-4.7zM348 209l-4.4-2.6 5.4-0.2zM356 190l-4.6-2.8 5.6 0.4zM353 184l0.6-2.4 4.5 3.3zM358 185l-4.4-3.4 5.6 0.7zM363 174l-5.2-2.9 5.3 1.4zM359 169l0.1-1.2 4.9 2.5zM338 207l1.4-3.6 4.2 3zM353 184l-5.1-2.9 5.7 0.5zM349 178l0.9-2.1 4.8 3.1zM356 177l-5.2-3.3 5.7 0.9zM357 173l-4.8-3.1 5.6 1.2zM352 170l0.9-1.6 5 2.7zM341 184l1-3.2 4.8 3.1zM352 170l-4.9-2.8 5.7 1.2zM329 201l1.5-3.6 4.6 2.9zM337 194l-4.3-3.5 5.9-0.3zM333 191l0.8-3.8 4.8 3zM341 184l-5-3.2 6 0zM342 165l0.4-1.5 5.3 2.3zM342 164l0.9-1.4 5.3 2.2zM332 194l-5.2-3 6-0.5zM334 187l-5.2-2.8 6.1-0.3zM337 178l-5.2-3 6.2 0.1zM338 175l-5.3-2.7 6.2 0.2zM342 165l-5.6-2.5 6 1zM344 162l-5.9-2.1 5.7 1.5zM322 188l0.7-3.2 5.1 2.8zM323 185l0.7-3.6 5.2 2.8zM332 175l-5.6-2.7 6.3-0.1zM319 199l-5.1-2.7 5.9-1zM317 186l0.5-3.9 5.2 2.7zM317 182l1.4-3.2 5.3 2.6zM326 172l-5.1-2.1 6.4-0.2zM314 173l0.5-2.7 5.6 2.3zM315 168l1.1-2.7 5.7 2.1zM317 163l0.5-1.7 5.7 1.8zM323 163l-5.5-1.7 6.4 0.1zM310 190l-5.7-2.3 6.1-1.2zM310 187l-4.9-2.9 6.2-1.1zM310 166l0.3-2.6 5.8 1.8zM307 174l-5.3-1.9 6.4-1zM303 166l0.8-2 5.8 1.7zM311 161l-5.8-1 6.5-0.3zM313 157l-5.9-0.7 6.4 0.2zM293 183l1.1-3.1 5.5 2zM296 170l0.6-2.5 5.8 1.7zM303 166l-5.7-1.1 6.5-0.9zM304 162l-5.4-1.4 6.5-0.6zM299 161l0.3-2.1 5.8 1.1zM289 175l0.6-3.3 5.7 1.6zM297 165l-5.5-1.3 6.5-1.1zM292 162l0.8-2.3 5.8 0.9zM288 182l-5.6-2.1 6.1-1.8zM284 168l1-3 5.8 1.1zM286 163l0.3-2.2 5.8 0.8zM286 161l1-1.9 5.8 0.6zM282 180l-5.2-1.5 6-1.9zM277 175l-5.3-0.8 6-2zM283 157l-5.8-0.1 6.3-0.9zM271 181l-5.4-1.5 5.8-2.2zM274 162l-5.2-0.3 6.2-1.6zM269 162l0.5-1.8 5.5-0.1zM266 176l-5.6-0.3 5.7-2.3zM260 176l0.8-3.2 5.4 0.5zM261 173l0.2-2.8 5.4 0.4zM261 170l0.6-2.3 5.4 0.3zM267 168l-5.4-0.3 5.9-2.1zM271 158l-5.3 0.7 6.1-1.3zM260 176l-4.8-0.7 5.6-2.4zM263 164l-5.5-0.1 5.9-2zM265 160l-5.2 0.3 6-1.6zM267 158l-5.4 1.2 6-1.3zM252 165l1.2-1.8 5-0.7zM250 178l-5.2-0.3 5.2-2.7zM245 178l0-2.9 5-0zM246 170l0.3-1.5 4.9-0.5zM246 170l-5 1 5.3-2.5zM241 173l-5 0.7 5-2.7zM231 179l-4.4 0.3 4.6-2.9zM231 176l-4.1 1.3 4.6-2.8zM219 181l0.1-1.6 3.8-1.1zM346 213l5 0.6-1.5 3.3zM408 235l4.9 2.6-2.2 2.7zM373 216l5.6 1.3-1.9 3.2zM384 219l5.3 2.4-2 3.1zM393 227l1.7-3.2 3.2 5.4zM398 229l1.9-2.7 3.1 5.5zM405 229l5.1 2.9-2.1 2.7zM413 238l2-3 2.7 5.8zM353 210l1-2.9 3.5 4.3zM373 216l2.1-3.6 3.5 4.9zM399 218l4.8 2.7-1.9 2.8zM377 209l1.5-2.8 3.8 4.9zM414 227l1.5-2.7 3.1 5.7zM380 203l5.7 2.2-1.6 2.9zM364 199l1.2-3.4 4 4.4zM371 197l5.1 1.6-1.5 2.9zM361 191l5.5 1.7-1.4 2.9zM389 200l5.1 2.2-1.4 2.5zM399 205l5.7 2.8-1.3 2.3zM406 206l4.7 2.9-1 2zM411 209l4.5 3.3-0.9 1.9zM380 191l5.5 1.8-1.1 2.4zM370 185l5.6 1.5-1.1 2.3zM380 191l1-2.6 4.5 4.3zM386 193l0.5-2.4 4.5 4.5zM365 183l0.6-1.8 4.5 3.7zM381 188l0.9-1.6 4.6 4.2zM393 190l5.4 2.6-0.5 1.5zM389 186l4.7 2.4-0.4 1.3zM394 188l4.7 3.4-0.3 1.2zM367 177l0.9-1.4 4.7 3.3zM373 177l5.5 2.5-0.5 1.4zM383 183l0.7-1.2 4.8 3.8zM384 182l4.9 2.4-0.3 1.2zM394 187l4.8 3.5-0.1 1zM384 182l-0-1.2 4.9 3.7zM394 186l4.7 3.7 0.1 0.7zM368 174l0.8-0.9 4.8 3zM374 176l-0-0.9 4.9 3.2zM374 175l5.1 2.4-0.2 0.9zM394 186l-0.2-0.1 4.9 3.8zM369 172l5.2 2.4-0.2 0.7zM384 179l-0.1 0.2 5 3.2zM364 169l0.4-0 4.9 2.3zM352 238l5.4 1.4-3.7 3.5zM363 241l5.1 2.1-3.8 3.5zM368 243l1.7 5.7-5.4-2.1zM364 221l2.3 3.9-5.1-1.5zM379 233l5.2 2.5-3.4 3.1zM387 233l2.5 4.8-5.4-2.3zM400 243l5.3 2.8-3.1 3zM196 196l-3.9 3.4 1.7-2.7zM184 207l-4.6 4.1 1.8-3.2zM153 247l-3 6.4 1.5-4.5zM179 211l-1.3 3.6-2.5 1zM167 225l-1.5 4.2-2.2 1.2zM136 321l-0.3 4.4 0 0.7zM140 283l-0.5 5.5-0.9 1.2zM136 308l0.1 5.2-0.4 0.9zM136 313l-0.1 6.1-0.2-5zM188 209l-4.8 4.1 1.4-3.6zM136 324l0.5 5.6-0.6-4.8zM136 325l0.5 4.6-0.3 0.6zM171 227l-1.6 4.6-2.8 0.9zM152 256l-0.3 4.6-2.2 1.2zM149 267l-2.7 6.3 0.5-5.2zM138 300l0.4 5.3-1.1 1zM189 212l-3.9 4.5 1.2-3.9zM149 267l-0.5 5.2-2.1 1.1zM146 279l0.2 5.1-2.1 1zM140 316l-0.9 5.7-0.9-5.1zM188 216l-0.5 4.5-3.5 0.2zM180 225l-1 4.9-3.4 0.4zM171 240l-4 6 0.6-5zM164 247l-0.7 4.8-3.1 0.8zM148 278l0.6 5.1-2.4 1zM147 290l-2.2 6-0.5-5.5zM144 291l0.8 5-2.1 1zM142 309l-0.8 5.9-0.9-5.3zM140 327l0.1 5.4-1.2-4.9zM183 230l-4.5 4.7 0.6-4.8zM171 240l-0.5 5.5-3.4 0.5zM170 245l-3.3 6.2 0.3-5.2zM167 246l-0.3 5.2-3.4 0.6zM151 277l0.4 5.2-2.7 0.9zM149 289l-1.8 6.1-0.6-5.5zM146 301l-1.8 6.8-0.9-5.4zM144 308l-0.8 6-1-5.3zM143 314l-0.6 6.1-1.2-5.2zM141 315l1.4 5.1-1.8 0.8zM142 320l-0.1 6-1.3-5.1zM191 225l-4.7 4.6 0.5-4.7zM187 225l-0.7 4.6-3.7 0.1zM157 275l-2.6 6.3-0.5-5.6zM154 276l0.4 5.3-3 0.9zM147 307l-1.6 6.1-1.2-5.3zM170 256l-3.2 6-0.2-5.4zM164 268l-3.5 6.2-0.5-5.6zM152 288l0.9 5.3-3 0.9zM148 312l-1.2 6.4-1.4-5.3zM186 234l-0.1 5.5-4 0zM149 318l-0.5 5.5-1.7-5.2zM146 324l1.7 5.4-2.3 0.8zM182 245l0 4.9-4.1 0.1zM160 292l-2.6 6-1.3-5.5zM149 318l2.2 4.7-2.7 0.8zM179 261l-3.7 5.7-0.6-5.5zM171 267l1 5.6-4 0.5zM176 272l-3.1 6.2-1-5.6zM163 291l1.8 5.6-3.8 0.7zM161 309l-2.2 6-1.8-5.3zM157 310l1.8 5-3.4 0.8zM159 315l-1.6 6-1.9-5.2zM180 272l-2.9 5.8-1-5.6zM173 278l1.1 5.8-4.1 0.5zM167 290l1.7 5.9-4 0.7zM173 295l-2.6 6.3-1.6-5.4zM168 307l2.1 5.6-3.9 0.8zM168 318l-1.4 6.3-2.1-5zM191 282l-2.5 6.1-1.4-5.4zM180 305l-1.8 6.1-1.9-5.1zM172 318l2.3 4.5-3.9 0.9zM190 293l-2.7 6-1.7-5.2zM186 294l1.3 5-4.3 0.5zM197 288l-2.7 5-1.5-5.2zM210 324l-0.6 4.9-3.8-2.6zM205 384l4.9 3.2-4.1 2.2zM226 443l2.5 3.6-5.5-3zM231 450l1.7 3.1-5.5-2.8zM209 340l3.8 2.7-4.5 2.7zM226 443l6.1 3-3.6 0.6zM244 458l1.9 2.6-5.6-2.2zM244 458l5.6 2.2-3.7 0.4zM227 334l-0 6-4.8-2.9zM207 183l-3.7 2.9-0.5 0.2zM223 462l-4.6-2.3 4.9 2.5zM221 457l1.1-1.5 3.9 3.1zM209 454l0.4-0.5 4.4 3.2zM196 443l-3.6-3.8 4.8 3.5zM181 431l1.1 0.3 3.8 4.1zM178 427l0.6 0.1 3.5 4.2zM179 427l0.7 0.1 3.4 4.3zM173 422l0.5 0.3 3.5 4.3zM177 427l-3.5-4.7 4.2 4.6zM156 398l0.9 0.4 2.4 4.4zM156 398l-2.1-4.9 3 5.2zM239 465l4.9 1.5-0.4 1.1zM244 468l-0.1-1.5 4.7 2.1zM218 441l-2.1-3.7 5 2.6zM214 433l-2.1-4.4 5.1 2.9zM199 361l0.5-5.8 4.2 4.4zM200 344l0.3-6 3.8 4.4zM231 459l-4.2-1.5 2.3-0.6zM224 455l-1.9-2.8 4.8 2zM220 445l-4.8-2.6 2.8-1.2zM200 349l-4.3-4.2 4.3-1.2zM197 328l1-5.2 3.4 4.3zM224 455l-4.3-2.1 2.4-0.7zM213 439l-5.1-3.3 2.9-1.2zM195 401l-1-6.3 5 4.2zM192 383l-0.3-6.5 4.6 4.5zM193 329l0.8-5.3 3.4 4.4zM222 456l-4.6-2.6 2.3-0.5zM202 422l-5.5-3.6 3.3-1.4zM192 383l-4.4-5 4-1.5zM207 441l-4.6-3.5 2.7-0.8zM200 438l-2.6-3.8 5 3.3zM197 434l-2.1-4 5.1 3.5zM195 425l-4.7-4.3 3-1zM186 410l-1.4-5.2 5 4.3zM182 393l-1.3-5.9 4.7 4.7zM179 375l-0.2-6.6 4.3 4.9zM200 438l-5.1-3.3 2.4-0.5zM188 416l-4.7-4.6 3-1zM175 370l-0.3-6.6 4.1 5zM175 395l-1.2-5.5 4.6 4.9zM173 328l1.3-5.5 3 4.7zM193 435l-5.1-3.7 2.1-0.3zM169 378l-1.2-5.9 4.1 5.1zM191 435l-5.1-3.6 1.9-0.1zM180 423l-2.1-4.6 4.7 4.3zM169 329l-2.4-4.7 3.8-0.9zM189 435l-4.8-3.7 1.7 0.1zM184 431l-2.7-3.7 4.6 4.1zM173 414l-2-5.3 4.5 4.7zM162 374l-1.1-6.2 3.7 5.3zM161 337l1-6.1 2.8 5zM179 423l-4.9-4.4 1.8-0zM171 409l-4.3-5.2 2.1-0.4zM169 403l-4.3-4.6 2.2-0.5zM160 355l-2.8-5 3.2-1zM160 349l-2.6-5.2 3.3-0.9zM159 332l0.5-6 2.5 4.9zM175 423l-2.4-4.5 4.3 4.5zM177 423l-4.4-4.5 1.5 0.1zM154 351l0.4-6.2 2.8 5.3zM155 333l1.2-6.1 2.4 5zM165 404l-4-5 1.7-0.2zM161 399l-2.1-5.5 3.8 5.2zM155 339l-2.6-5.4 3-0.9zM167 413l-2.4-4.1 3.9 4.9zM155 388l-1.3-5.5 3.4 5.4zM151 371l-0.8-6.3 2.9 5.5zM153 370l-2.8-5.3 2.1-0.7zM152 358l-2.8-5.5 2.4-0.8zM152 377l-2.7-5.8 1.7-0.5zM150 334l-2.3-4.6 2.6-0.8zM164 409l-3.9-5.5 0.8 0.3zM158 399l-2.8-5.3 3.3 5.3zM155 394l-2-5.6 3.2 5.3zM151 383l-1.6-5.6 2.9 5.5zM152 383l-2.6-5.6 1.3-0.3zM149 377l-1.1-5.4 2.8 5.5zM145 342l0-6 1.9 5.2zM148 378l-1.2-6.1 2.6 5.5zM144 360l-0.3-5.6 2.1 5.4zM145 354l-1.8-5.5 1.7-0.6zM145 348l-2-5.4 1.8-0.7zM149 383l-1.4-5.4 2.6 5.4zM150 383l-2.4-5.4 0.8-0.1zM148 378l-2.1-5.9 2.4 5.4zM147 372l-2.5-5.6 1-0.3zM145 372l-1.2-5.4 2.1 5.4zM144 367l-1.5-6 2 5.4zM144 366l-1.5-5 0.8-0.3zM143 361l-1.5-5.7 1-0.4zM141 337l-0.9-4.6 1.5-0.7zM145 372l-1.7-5.2 0.5-0.1zM141 355l-1.1-5 0.8-0.5zM141 350l-1.7-5.6 1-0.5zM140 356l-1-5.2 0.3-0.3zM138 340l-0.7-5.7 0.9 4.9zM176 211l3.1-3.8 0.9-0.6z" fill="#ffeb05"/>
</g>
<clipPath id="shd"><path d="M397.5 188.5 404.5 196.0 409.5 203.0 414.5 212.5 414.5 213.5 416.5 217.5 416.5 218.5 418.5 223.5 420.0 231.0 420.5 231.5 421.0 236.5 421.5 237.0 421.5 240.0 422.0 240.5 422.0 244.0 422.5 244.5 422.5 251.5 423.0 252.0 423.0 263.5 422.5 264.0 422.0 276.5 421.5 277.0 421.5 280.5 421.0 281.0 420.0 289.5 419.5 290.0 419.5 292.0 419.0 292.5 419.0 294.5 418.0 297.0 418.0 299.0 417.5 299.5 416.5 305.0 415.5 307.0 415.5 308.5 414.5 310.5 414.5 312.0 414.0 312.5 410.5 324.0 409.5 325.5 409.0 328.0 408.0 329.5 408.0 330.5 407.0 332.0 406.0 335.5 404.5 338.0 404.5 339.0 402.0 343.5 402.0 344.5 395.5 357.5 394.5 358.5 393.0 362.0 392.0 363.0 391.0 365.5 390.0 366.5 386.5 373.0 378.5 385.0 377.0 386.5 376.0 388.5 371.5 394.5 369.5 396.5 365.5 402.0 362.5 405.0 362.5 405.5 359.0 409.0 359.0 409.5 341.5 427.0 341.0 427.0 334.0 433.5 333.5 433.5 331.5 435.5 321.5 443.0 315.5 447.0 314.0 447.5 311.5 449.5 310.0 450.0 309.0 451.0 295.5 458.0 294.5 458.0 292.0 459.5 291.0 459.5 287.0 461.5 286.0 461.5 278.0 464.5 276.5 464.5 274.5 465.5 272.5 465.5 272.0 466.0 268.0 466.5 267.5 467.0 265.0 467.0 264.5 467.5 261.5 467.5 261.0 468.0 254.5 468.0 254.0 468.5 242.5 468.0 242.0 467.5 239.0 467.5 238.5 467.0 234.0 466.5 233.5 466.0 230.5 465.5 225.5 463.5 234.0 467.5 235.0 467.5 237.5 469.0 240.0 469.5 241.5 470.5 242.5 470.5 252.0 474.0 253.5 474.0 255.5 475.0 257.0 475.0 257.5 475.5 259.0 475.5 259.5 476.0 261.0 476.0 263.5 477.0 268.0 477.5 268.5 478.0 271.0 478.0 271.5 478.5 274.0 478.5 274.5 479.0 278.0 479.0 278.5 479.5 282.5 479.5 283.0 480.0 289.0 480.0 289.5 480.5 307.0 480.5 307.5 480.0 313.5 480.0 314.0 479.5 318.0 479.5 318.5 479.0 322.0 479.0 322.5 478.5 328.0 478.0 328.5 477.5 330.5 477.5 331.0 477.0 333.0 477.0 333.5 476.5 341.0 475.0 343.0 474.0 344.5 474.0 345.0 473.5 355.0 470.5 356.5 469.5 357.5 469.5 361.5 467.5 362.5 467.5 365.0 466.0 366.0 466.0 379.5 459.0 380.5 458.0 384.5 456.0 393.5 450.0 402.0 443.0 402.5 443.0 414.5 432.0 414.5 431.5 420.5 425.5 420.5 425.0 427.5 417.0 436.5 404.0 440.5 396.5 441.5 395.5 449.5 378.5 450.0 376.0 451.0 374.5 451.0 373.5 454.5 364.0 454.5 362.5 455.5 360.5 455.5 359.0 456.0 358.5 456.0 357.0 456.5 356.5 456.5 355.0 457.5 352.5 458.0 348.0 458.5 347.5 458.5 345.0 459.0 344.5 459.0 342.0 459.5 341.5 459.5 338.0 460.0 337.5 460.0 333.5 460.5 333.0 460.5 327.0 461.0 326.5 461.0 309.0 460.5 308.5 460.5 302.5 460.0 302.0 460.0 298.0 459.5 297.5 459.5 294.0 459.0 293.5 458.5 288.0 458.0 287.5 457.5 283.0 457.0 282.5 455.5 275.0 454.5 273.0 454.5 271.5 454.0 271.0 451.0 261.0 450.0 259.5 449.5 257.0 441.5 240.0 440.5 239.0 436.5 231.5 430.5 222.5 423.5 214.0 423.5 213.5 420.5 210.5 420.5 210.0 412.5 201.5 412.0 201.5 406.0 195.5 405.5 195.5Z"/></clipPath>
<path clip-path="url(#shd)" d="M135.5 318.0 A163.0 86.39 0 0 0 461.5 318.0" stroke="#ff6608" stroke-width="1.3" fill="none"/>
<path d="M461.8 302A163 163 0 0 1 461.2 334" stroke="#ff6a10" stroke-width="1.3" fill="none"/>
<path d="M461.1 333.9A163.4 163.4 0 0 1 214.3 458.1" stroke="#f6f6f6" stroke-width="1" fill="none"/>
<clipPath id="blw"><path d="M135.5 318.0 A163.0 86.39 0 0 0 461.5 318.0 A163.0 163.0 0 0 1 135.5 318.0Z"/></clipPath>
<g clip-path="url(#blw)"><path d="M705.9 600.0L725.0 595.5M639.0 600.0L725.0 579.8M572.1 600.0L725.0 564.0M505.2 600.0L725.0 548.3M371.4 600.0L725.0 516.8M0.0 600.4L-0.3 600.0M304.5 600.0L725.0 501.0M29.5 600.0L0.0 565.1M237.6 600.0L725.0 485.3M59.4 600.0L0.0 529.8M170.7 600.0L725.0 469.5M89.2 600.0L0.0 494.5M103.8 600.0L725.0 453.8M119.1 600.0L0.0 459.2M36.9 600.0L725.0 438.1M149.0 600.0L0.0 424.0M0.0 592.9L725.0 422.3M178.8 600.0L0.0 388.7M-0.0 577.2L725.0 406.6M208.7 600.0L0.0 353.4M0.0 561.4L725.0 390.8M268.4 600.0L0.0 282.8M0.0 530.0L725.0 359.3M298.2 600.0L0.0 247.5M0.0 514.2L725.0 343.6M328.1 600.0L0.0 212.2M0.0 498.5L725.0 327.8M358.0 600.0L0.0 177.0M0.0 482.7L725.0 312.1M387.8 600.0L0.0 141.7M0.0 467.0L725.0 296.4M417.7 600.0L0.0 106.4M0.0 451.2L725.0 280.6M447.5 600.0L0.0 71.1M0.0 435.5L725.0 264.9M477.4 600.0L0.0 35.8M0.0 419.7L725.0 249.1M507.3 600.0L-0.4 0.0M0.0 404.0L725.0 233.4M567.0 600.0L59.3 0.0M0.0 372.5L725.0 201.9M596.8 600.0L89.1 0.0M0.0 356.8L725.0 186.1M626.7 600.0L119.0 0.0M0.0 341.0L725.0 170.4M656.5 600.0L148.9 0.0M-0.0 325.3L725.0 154.6M686.4 600.0L178.7 0.0M0.0 309.5L725.0 138.9M716.3 600.0L208.6 0.0M-0.0 293.8L725.0 123.2M725.0 575.0L238.4 0.0M0.0 278.0L725.0 107.4M725.0 539.7L268.3 0.0M-0.0 262.3L725.0 91.7M725.0 504.5L298.1 0.0M0.0 246.5L725.0 75.9M725.0 433.9L357.9 0.0M0.0 215.1L725.0 44.4M725.0 398.6L387.7 0.0M0.0 199.3L725.0 28.7M725.0 363.3L417.6 0.0M0.0 183.6L725.0 12.9M725.0 328.0L447.4 0.0M0.0 167.8L713.1 0.0M725.0 292.7L477.3 0.0M0.0 152.1L646.2 0.0M725.0 257.4L507.2 0.0M-0.0 136.3L579.3 0.0M725.0 222.2L537.0 0.0M0.0 120.6L512.4 0.0M725.0 186.9L566.9 0.0M0.0 104.8L445.5 0.0M725.0 151.6L596.7 0.0M0.0 89.1L378.6 0.0M725.0 81.0L656.5 0.0M0.0 57.6L244.8 0.0M725.0 45.7L686.3 0.0M0.0 41.9L177.9 -0.0M725.0 10.4L716.2 0.0M0.0 26.1L111.0 0.0M0.0 10.4L44.1 0.0" stroke="#dadada" stroke-width="0.9" fill="none"/><path d="M438.3 600.0L725.0 532.5M238.5 600.0L0.0 318.1M0.0 545.7L725.0 375.1M537.1 600.0L29.4 0.0M0.0 388.2L725.0 217.6M725.0 469.2L328.0 0.0M0.0 230.8L725.0 60.2M725.0 116.3L626.6 0.0M0.0 73.4L311.7 0.0" stroke="#dadada" stroke-width="1.5" fill="none"/></g>
<path d="M15.5 104.8L406.1 12.9" stroke="#f86cf8" stroke-width="1.15" fill="none"/><path d="M406.1 12.9L581.4 219.0" stroke="#f86cf8" stroke-width="1.15" fill="none"/><path d="M581.4 219.0L189.8 310.7" stroke="#f86cf8" stroke-width="1.15" fill="none"/><path d="M189.8 310.7L15.5 104.8" stroke="#f86cf8" stroke-width="1.15" fill="none"/>
<path d="M15.5 104.8L15.5 408.7" stroke="#f86cf8" stroke-width="1.15" fill="none"/><path d="M581.4 219.0L581.4 522.9" stroke="#f86cf8" stroke-width="1.15" fill="none"/><path d="M189.8 310.7L189.8 614.6" stroke="#f86cf8" stroke-width="1.15" fill="none"/><path d="M15.5 408.7L189.8 614.6" stroke="#f86cf8" stroke-width="1.15" fill="none"/><path d="M189.8 614.6L581.4 522.9" stroke="#f86cf8" stroke-width="1.15" fill="none"/>
<path d="M28.9 116.2L400.9 28.5L567.6 224.3L195.1 312.2Z" stroke="#8c24d0" stroke-width="1.5" fill="none"/>
<path d="M214.9 72.3L381.4 268.2" stroke="#9440d8" stroke-width="1" fill="none"/><path d="M112.0 214.2L484.2 126.4" stroke="#9440d8" stroke-width="1" fill="none"/>
<path d="M102.3 207.5L113 195.5" stroke="#4a14e0" stroke-width="2.2"/>
<path d="M109.6 191.6L124 182.6L114.4 196.4Z" fill="#5a1ee8"/><path d="M112 194L124 182.6L115 195.5Z" fill="#d848f0"/>
<path d="M101.5 207.5L114 211" stroke="#c03088" stroke-width="2.5"/>
<path d="M112.5 211L118 209.8L124.5 224L116.5 222.5Z" fill="#b82c78"/><path d="M112.5 211L116 210.5L121 219L116 216Z" fill="#e048a8"/>
<path d="M100.5 207.5L104.5 207L110 211.5L113 213L115.8 223.8L107.5 219L104 213Z" fill="#22bea2"/><path d="M100.5 207.5L104.5 207L107 210L103.5 212Z" fill="#1a8a70"/>
<rect x="598.5" y="45.5" width="115" height="277.5" fill="#f2f2f2" stroke="#333" stroke-width="1"/>
<path d="M598.5 65.5H713.5M598.5 87.5H713.5M598.5 247.5H713.5" stroke="#333" stroke-width="1"/>
<defs><linearGradient id="cb" x1="0" y1="1" x2="0" y2="0"><stop offset="0.0" stop-color="#000000"/><stop offset="0.1" stop-color="#000048"/><stop offset="0.2" stop-color="#0000b0"/><stop offset="0.3" stop-color="#1000f8"/><stop offset="0.4" stop-color="#6000f8"/><stop offset="0.45" stop-color="#9010f0"/><stop offset="0.5" stop-color="#c020e0"/><stop offset="0.55" stop-color="#e030c0"/><stop offset="0.6" stop-color="#ff50a0"/><stop offset="0.68" stop-color="#ff8070"/><stop offset="0.79" stop-color="#ffb040"/><stop offset="0.91" stop-color="#fff000"/><stop offset="1.0" stop-color="#ffffe8"/></linearGradient></defs>
<rect x="610.5" y="96" width="17.5" height="139" fill="url(#cb)"/>
<text x="610" y="59" fill="#383838" font-size="12">JsMagTotal</text>
<text x="611" y="80" fill="#383838" font-size="11.8">Type: Linear</text>
<text x="636.5" y="101.6" fill="#383838" font-size="11.6">0.00314</text>
<text x="636.5" y="115.5" fill="#383838" font-size="11.6">0.00283</text>
<text x="636.5" y="129.3" fill="#383838" font-size="11.6">0.00251</text>
<text x="636.5" y="143.2" fill="#383838" font-size="11.6">0.0022</text>
<text x="636.5" y="157.1" fill="#383838" font-size="11.6">0.00188</text>
<text x="636.5" y="170.9" fill="#383838" font-size="11.6">0.00157</text>
<text x="636.5" y="184.8" fill="#383838" font-size="11.6">0.00126</text>
<text x="636.5" y="198.7" fill="#383838" font-size="11.6">0.000942</text>
<text x="636.5" y="212.6" fill="#383838" font-size="11.6">0.000628</text>
<text x="636.5" y="226.4" fill="#383838" font-size="11.6">0.000314</text>
<text x="636.5" y="240.3" fill="#383838" font-size="11.6">0</text>
<text x="610.5" y="260.7" fill="#383838" font-size="11.6">Max: 0.00314</text>
<text x="610.5" y="274.6" fill="#383838" font-size="11.6">Min: 0</text>
<text x="610.5" y="288.5" fill="#383838" font-size="11.6">Units: A/m</text>
<text x="610.5" y="302.5" fill="#383838" font-size="11.6">Mean: 0.00106</text>
<text x="610.5" y="316.4" fill="#383838" font-size="11.6">STD: 0.00112</text>
</svg></body></html>
